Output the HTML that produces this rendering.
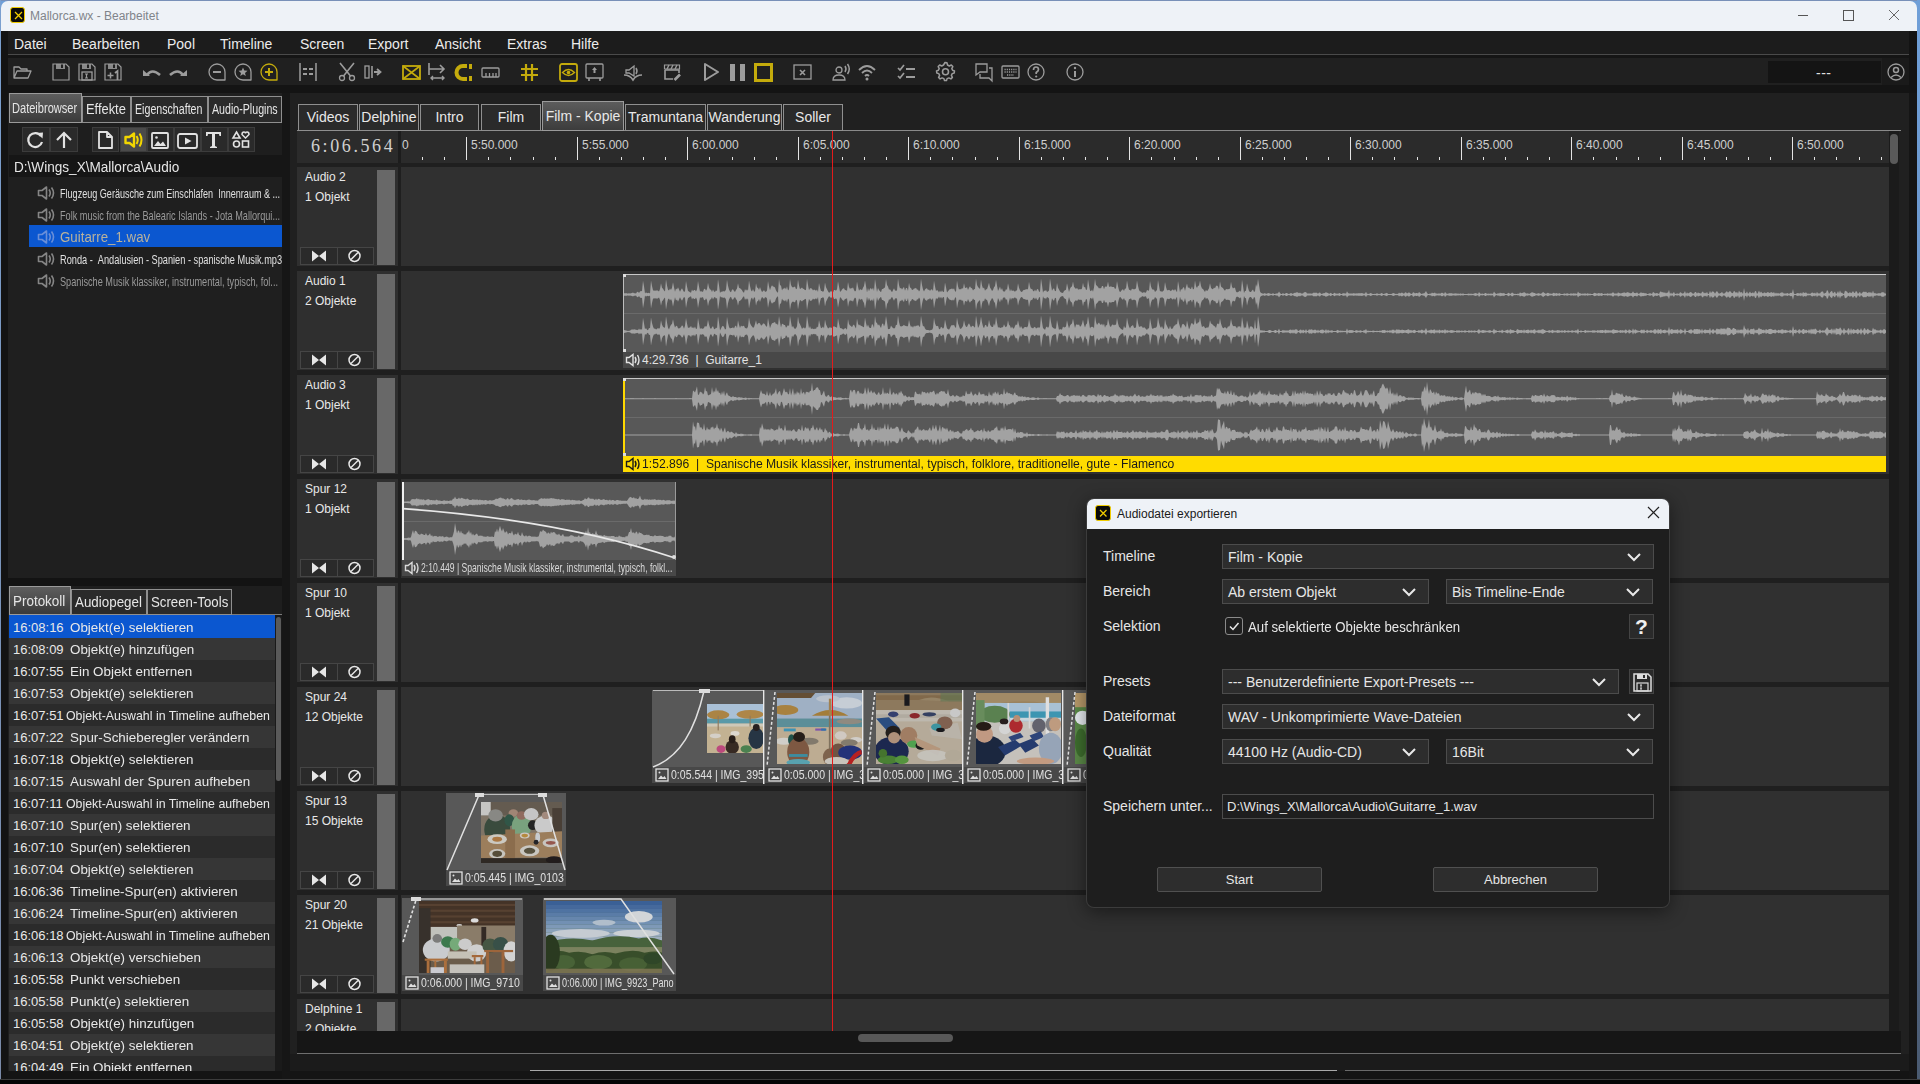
<!DOCTYPE html><html><head><meta charset="utf-8"><style>
html,body{margin:0;padding:0;}
body{width:1920px;height:1084px;overflow:hidden;background:#0c0c0c;position:relative;font-family:"Liberation Sans", sans-serif;}
div{position:absolute;box-sizing:border-box;}
.t{white-space:nowrap;line-height:1;}
svg{position:absolute;overflow:visible;}
</style></head><body>
<div style="left:0px;top:0px;width:1920px;height:1084px;background:#131313;"></div><div style="left:0px;top:0px;width:1920px;height:31px;background:#6f9fd8;"></div><div style="left:0px;top:0px;width:1920px;height:1px;background:#7890b8;"></div><div style="left:1px;top:1px;width:1916px;height:30px;background:#eef2f7;border-radius:7px 7px 0 0;"></div><div style="left:0px;top:0px;width:1px;height:1080px;background:linear-gradient(#7aa0d0,#7a8aa8);"></div><div style="left:1917px;top:0px;width:3px;height:1080px;background:linear-gradient(#6f9fd8 0%,#6a94c8 40%,#566e92 75%,#4a5a70 100%);"></div><div style="left:10px;top:7px;width:15px;height:16px;background:#0a0a0a;border:1px solid #f0cc00;border-radius:3px;"><svg width="15" height="16" style="left:0;top:0"><path d="M4 4 L11 11 M11 4 L4 11" stroke="#f0cc00" stroke-width="1.3"/></svg></div><div class="t" style="left:30px;top:10px;font-size:12px;color:#80848a;">Mallorca.wx - Bearbeitet</div><svg width="1920" height="31" style="left:0;top:0"><path d="M1798 15.5 H1808" stroke="#555" stroke-width="1"/><rect x="1843.5" y="10.5" width="10" height="10" fill="none" stroke="#555" stroke-width="1"/><path d="M1889 10 L1899 20 M1899 10 L1889 20" stroke="#666" stroke-width="1"/></svg><div style="left:8px;top:31px;width:1901px;height:23px;background:#1c1c1c;"></div><div style="left:8px;top:54px;width:1901px;height:1px;background:#4a4a4a;"></div><div class="t" style="left:14px;top:37px;font-size:14px;color:#ececec;">Datei</div><div class="t" style="left:72px;top:37px;font-size:14px;color:#ececec;">Bearbeiten</div><div class="t" style="left:167px;top:37px;font-size:14px;color:#ececec;">Pool</div><div class="t" style="left:220px;top:37px;font-size:14px;color:#ececec;">Timeline</div><div class="t" style="left:300px;top:37px;font-size:14px;color:#ececec;">Screen</div><div class="t" style="left:368px;top:37px;font-size:14px;color:#ececec;">Export</div><div class="t" style="left:435px;top:37px;font-size:14px;color:#ececec;">Ansicht</div><div class="t" style="left:507px;top:37px;font-size:14px;color:#ececec;">Extras</div><div class="t" style="left:571px;top:37px;font-size:14px;color:#ececec;">Hilfe</div><div style="left:8px;top:55px;width:1901px;height:3px;background:#151515;"></div><div style="left:8px;top:58px;width:1901px;height:27px;background:#202020;"></div><div style="left:8px;top:85px;width:1901px;height:8px;background:#141414;"></div><div style="left:1768px;top:61px;width:113px;height:22px;background:#141414;"></div><div class="t" style="left:1816px;top:66px;font-size:14px;color:#e0e0e0;letter-spacing:0.5px;">---</div><div style="left:1882px;top:58px;width:27px;height:27px;background:#1a1a1a;"></div><svg width="1920" height="100" style="left:0;top:0"><g transform="translate(13,63)"><path d="M1 15 V4 H6 L8 6 H14 V8 M1 15 L4 8 H18 L15 15 Z" stroke="#9c9c9c" stroke-width="1.3" fill="none" stroke-linejoin="round"/></g><g transform="translate(52,63)"><path d="M1 1 H14 L17 4 V17 H1 Z" stroke="#9c9c9c" stroke-width="1.2" fill="none"/><rect x="4" y="1" width="9" height="5" fill="#9c9c9c" opacity="0.85"/><rect x="9" y="1.5" width="2" height="3.5" fill="#202020"/></g><g transform="translate(78,63)"><path d="M1 1 H14 L17 4 V17 H1 Z" stroke="#9c9c9c" stroke-width="1.2" fill="none"/><rect x="4" y="1" width="9" height="5" fill="#9c9c9c" opacity="0.85"/><rect x="9" y="1.5" width="2" height="3.5" fill="#202020"/><rect x="4" y="9" width="10" height="8" stroke="#9c9c9c" stroke-width="1.3" fill="none"/><path d="M7 11 H10 M8.5 11 V15 M7 15 H10" stroke="#9c9c9c" stroke-width="1.2"/></g><g transform="translate(104,63)"><path d="M1 1 H14 L17 4 V17 H1 Z" stroke="#9c9c9c" stroke-width="1.2" fill="none"/><rect x="4" y="1" width="9" height="5" fill="#9c9c9c" opacity="0.85"/><rect x="9" y="1.5" width="2" height="3.5" fill="#202020"/><path d="M3.5 12.5 H9.5 M6.5 9.5 V15.5" stroke="#9c9c9c" stroke-width="1.5"/><path d="M11 10 L13.5 8 V17" stroke="#9c9c9c" stroke-width="1.8" fill="none"/></g><g transform="translate(143,63)"><path d="M4 12 Q9 5 17 12" stroke="#9c9c9c" stroke-width="2.6" fill="none"/><path d="M0 7 L7 13 L0 13 Z" fill="#9c9c9c"/></g><g transform="translate(169,63)"><path d="M1 12 Q9 5 14 12" stroke="#9c9c9c" stroke-width="2.6" fill="none"/><path d="M18 7 L11 13 L18 13 Z" fill="#9c9c9c"/></g><g transform="translate(208,63)"><path d="M9 17 A8 8 0 1 1 17 9 V17 Z" stroke="#9c9c9c" stroke-width="1.3" fill="none" stroke-linejoin="round"/><path d="M5 9 H13" stroke="#9c9c9c" stroke-width="2"/></g><g transform="translate(234,63)"><path d="M9 17 A8 8 0 1 1 17 9 V17 Z" stroke="#9c9c9c" stroke-width="1.3" fill="none" stroke-linejoin="round"/><path d="M9 4.5 L10.3 7.6 L13.5 7.8 L11 9.9 L11.8 13 L9 11.3 L6.2 13 L7 9.9 L4.5 7.8 L7.7 7.6 Z" fill="#9c9c9c"/></g><g transform="translate(260,63)"><path d="M9 17 A8 8 0 1 1 17 9 V17 Z" stroke="#c4ab0c" stroke-width="1.3" fill="none" stroke-linejoin="round"/><path d="M5 9 H13 M9 5 V13" stroke="#c4ab0c" stroke-width="2"/></g><g transform="translate(299,63)"><path d="M1 0 V18 M17 0 V18" stroke="#9c9c9c" stroke-width="1.5"/><path d="M4 6 H8 M10 6 H14 M4 11 H8 M10 11 H14" stroke="#9c9c9c" stroke-width="1.8"/></g><g transform="translate(338,63)"><circle cx="4" cy="15" r="2.5" stroke="#9c9c9c" stroke-width="1.3" fill="none"/><circle cx="14" cy="15" r="2.5" stroke="#9c9c9c" stroke-width="1.3" fill="none"/><path d="M5.5 13 L16 0 M12.5 13 L2 0" stroke="#9c9c9c" stroke-width="1.6"/></g><g transform="translate(364,63)"><rect x="1" y="3" width="4" height="12" stroke="#9c9c9c" stroke-width="1.3" fill="none"/><path d="M8 3 V15" stroke="#9c9c9c" stroke-width="1.6"/><path d="M10 9 H15 M13 6 L16.5 9 L13 12" stroke="#9c9c9c" stroke-width="1.8" fill="none"/></g><g transform="translate(402,63)"><rect x="1" y="3" width="17" height="13" stroke="#c4ab0c" stroke-width="1.8" fill="none"/><path d="M1 3 L18 16 M18 3 L1 16" stroke="#c4ab0c" stroke-width="1.6"/></g><g transform="translate(428,63)"><path d="M1 0 V12 M1 6 H16 M12 2 L16 6 L12 10" stroke="#9c9c9c" stroke-width="1.6" fill="none"/><path d="M3 15 H16 M5 13 L3 15 L5 17 M14 13 L16 15 L14 17" stroke="#9c9c9c" stroke-width="1.4" fill="none"/></g><g transform="translate(455,63)"><path d="M12 3 H8 A6 6 0 0 0 8 16 H12" stroke="#c4ab0c" stroke-width="4" fill="none"/><rect x="14" y="1" width="3" height="5" fill="#c4ab0c"/><rect x="14" y="13" width="3" height="5" fill="#c4ab0c"/></g><g transform="translate(481,63)"><rect x="1" y="5" width="17" height="9" rx="1" stroke="#9c9c9c" stroke-width="1.3" fill="none"/><path d="M5 10 V14 M8.5 10 V14 M12 10 V14 M15 10 V14" stroke="#9c9c9c" stroke-width="1.3"/></g><g transform="translate(520,63)"><path d="M6 1 V18 M12 1 V18 M1 6 H18 M1 12 H18" stroke="#c4ab0c" stroke-width="2.2"/></g><g transform="translate(559,63)"><rect x="1" y="1" width="17" height="17" rx="2" stroke="#c4ab0c" stroke-width="1.8" fill="none"/><path d="M3.5 9.5 Q9.5 3.5 15.5 9.5 Q9.5 15.5 3.5 9.5 Z" stroke="#c4ab0c" stroke-width="1.4" fill="none"/><circle cx="9.5" cy="9.5" r="1.8" fill="#c4ab0c"/></g><g transform="translate(585,63)"><rect x="1" y="1" width="17" height="14" rx="1" stroke="#9c9c9c" stroke-width="1.3" fill="none"/><path d="M4 15 V18 M15 15 V18" stroke="#9c9c9c" stroke-width="1.6"/><path d="M9.5 4 L12 7 H10.5 V10 H8.5 V7 H7 Z" fill="#9c9c9c"/></g><g transform="translate(624,63)"><path d="M2 7 H5 L10 3 V13 L5 10 H2 Z" stroke="#9c9c9c" stroke-width="1.3" fill="none"/><path d="M12 5 Q14 8 12 11" stroke="#9c9c9c" stroke-width="1.5" fill="none"/><path d="M0 12 Q6 12 9 17 Q12 12 18 12" stroke="#9c9c9c" stroke-width="1.6" fill="none"/></g><g transform="translate(663,63)"><path d="M2 7 V16 H10 M2 7 H16 V10" stroke="#9c9c9c" stroke-width="1.6" fill="none"/><path d="M1.5 2 H16.5 V6 H1.5 Z" stroke="#9c9c9c" stroke-width="1.2" fill="none"/><path d="M4 6 L6 2 M8 6 L10 2 M12 6 L14 2" stroke="#9c9c9c" stroke-width="1.4"/><path d="M11.5 17 L17 11.5" stroke="#9c9c9c" stroke-width="2.6"/></g><g transform="translate(703,63)"><path d="M2 1 L15 9 L2 17 Z" stroke="#9c9c9c" stroke-width="2" fill="none" stroke-linejoin="round"/></g><g transform="translate(729,63)"><rect x="1" y="1" width="5" height="17" fill="#9c9c9c"/><rect x="11" y="1" width="5" height="17" fill="#9c9c9c"/></g><g transform="translate(754,63)"><rect x="1.5" y="1.5" width="16" height="16" stroke="#c4ab0c" stroke-width="3" fill="none"/></g><g transform="translate(793,63)"><rect x="1" y="2" width="17" height="14" stroke="#9c9c9c" stroke-width="1.3" fill="none"/><path d="M7 7 L12 12 M12 7 L7 12" stroke="#9c9c9c" stroke-width="1.6"/></g><g transform="translate(832,63)"><circle cx="7" cy="7" r="3" stroke="#9c9c9c" stroke-width="1.3" fill="none"/><path d="M1 17 Q1 12 7 12 Q13 12 13 17 Z" stroke="#9c9c9c" stroke-width="1.3" fill="none"/><path d="M13 3 Q15 6 13 9 M15.5 1 Q19 6 15.5 11" stroke="#9c9c9c" stroke-width="1.5" fill="none"/></g><g transform="translate(858,63)"><path d="M1 7 Q9 -1 17 7 M4 10 Q9 5 14 10 M7 13 Q9 11 11 13" stroke="#9c9c9c" stroke-width="1.8" fill="none"/><circle cx="9" cy="16" r="1.5" fill="#9c9c9c"/></g><g transform="translate(897,63)"><path d="M1 5 L3 7 L7 2 M1 13 L3 15 L7 10" stroke="#9c9c9c" stroke-width="1.7" fill="none"/><path d="M9 6 H18 M9 14 H18" stroke="#9c9c9c" stroke-width="1.8"/></g><g transform="translate(936,62)"><path d="M9 0.5 L11 0.8 L11.5 3 L13.3 4 L15.3 3 L16.8 4.6 L15.8 6.6 L16.6 8.3 L18.5 9 L18.2 11 L16.2 11.6 L15.4 13.4 L16.4 15.4 L14.9 16.9 L12.9 15.9 L11.1 16.6 L10.5 18.6 L8.5 18.6 L7.9 16.6 L6.1 15.9 L4.1 16.9 L2.6 15.4 L3.6 13.4 L2.8 11.6 L0.8 11 L0.5 9 L2.4 8.3 L3.2 6.6 L2.2 4.6 L3.7 3 L5.7 4 L7.5 3 Z" stroke="#9c9c9c" stroke-width="1.5" fill="none" stroke-linejoin="round"/><circle cx="9.5" cy="9.7" r="3" stroke="#9c9c9c" stroke-width="1.6" fill="none"/></g><g transform="translate(975,63)"><path d="M1 1 H12 V9 H5 L1 12 Z" stroke="#9c9c9c" stroke-width="1.3" fill="none"/><path d="M14 5 H17 V18 L14 15 H5 V11" stroke="#9c9c9c" stroke-width="1.3" fill="none"/></g><g transform="translate(1001,63)"><rect x="1" y="3" width="17" height="12" rx="1" stroke="#9c9c9c" stroke-width="1.3" fill="none"/><path d="M3.5 6.5 H15.5 M3.5 9 H15.5 M6 12 H13" stroke="#9c9c9c" stroke-width="1.3" stroke-dasharray="1.2 1"/></g><g transform="translate(1027,63)"><circle cx="9" cy="9" r="8" stroke="#9c9c9c" stroke-width="1.3" fill="none"/><path d="M6.5 7 Q6.5 4 9 4 Q11.5 4 11.5 6.5 Q11.5 8 9.2 9.5 V11" stroke="#9c9c9c" stroke-width="1.7" fill="none"/><circle cx="9.2" cy="13.5" r="1.1" fill="#9c9c9c"/></g><g transform="translate(1066,63)"><circle cx="9" cy="9" r="8" stroke="#9c9c9c" stroke-width="1.3" fill="none"/><path d="M9 8 V14" stroke="#9c9c9c" stroke-width="2"/><circle cx="9" cy="5" r="1.2" fill="#9c9c9c"/></g><g transform="translate(1887,63)"><circle cx="9" cy="9" r="8" stroke="#9c9c9c" stroke-width="1.3" fill="none"/><circle cx="9" cy="7" r="2.5" stroke="#9c9c9c" stroke-width="1.5" fill="none"/><path d="M4 14.5 Q9 9.5 14 14.5" stroke="#9c9c9c" stroke-width="1.5" fill="none"/></g></svg><div style="left:8px;top:93px;width:274px;height:485px;background:#1f1f1f;"></div><div style="left:9px;top:122px;width:273px;height:1px;background:#7a7a7a;"></div><div style="left:9px;top:93px;width:73px;height:30px;background:linear-gradient(#5e5e5e,#3a3a3a);border:1px solid #9a9a9a;"></div><div class="t" style="left:12px;top:101px;font-size:14px;color:#e6e6e6;transform:scaleX(0.79);transform-origin:0 0;">Dateibrowser</div><div style="left:82px;top:96px;width:49px;height:27px;background:#2a2a2a;border:1px solid #8f8f8f;"></div><div class="t" style="left:86px;top:102px;font-size:14px;color:#e6e6e6;transform:scaleX(0.92);transform-origin:0 0;">Effekte</div><div style="left:131px;top:96px;width:77px;height:27px;background:#2a2a2a;border:1px solid #8f8f8f;"></div><div class="t" style="left:135px;top:102px;font-size:14px;color:#e6e6e6;transform:scaleX(0.76);transform-origin:0 0;">Eigenschaften</div><div style="left:208px;top:96px;width:74px;height:27px;background:#2a2a2a;border:1px solid #8f8f8f;"></div><div class="t" style="left:212px;top:102px;font-size:14px;color:#e6e6e6;transform:scaleX(0.76);transform-origin:0 0;">Audio-Plugins</div><div style="left:9px;top:123px;width:273px;height:32px;background:#1e1e1e;"></div><div style="left:22px;top:127px;width:28px;height:25px;background:#2a2a2a;border:1px solid #3c3c3c;"></div><div style="left:50px;top:127px;width:28px;height:25px;background:#2a2a2a;border:1px solid #3c3c3c;"></div><div style="left:92px;top:127px;width:27px;height:25px;background:#2a2a2a;border:1px solid #3c3c3c;"></div><div style="left:120px;top:127px;width:27px;height:25px;background:#4a4a4a;border:1px solid #3c3c3c;"></div><div style="left:147px;top:127px;width:27px;height:25px;background:#2a2a2a;border:1px solid #3c3c3c;"></div><div style="left:174px;top:127px;width:27px;height:25px;background:#2a2a2a;border:1px solid #3c3c3c;"></div><div style="left:201px;top:127px;width:27px;height:25px;background:#2a2a2a;border:1px solid #3c3c3c;"></div><div style="left:228px;top:127px;width:27px;height:25px;background:#2a2a2a;border:1px solid #3c3c3c;"></div><svg width="300" height="160" style="left:0;top:0"><g transform="translate(27,131)"><path d="M14 5 A7 7 0 1 0 15 11" stroke="#e2e2e2" stroke-width="2.2" fill="none"/><path d="M10 2 L16 1.5 L15.5 7.5 Z" fill="#e2e2e2"/></g><g transform="translate(55,131)"><path d="M9 17 V2 M2 9 L9 2 L16 9" stroke="#e2e2e2" stroke-width="2.2" fill="none"/></g><g transform="translate(98,131)"><path d="M1 1 H9 L14 6 V17 H1 Z M9 1 V6 H14" stroke="#e2e2e2" stroke-width="1.8" fill="none" stroke-linejoin="round"/></g><g transform="translate(124,131)"><path d="M1.5 6 H5.5 L10 2.5 V15.5 L5.5 12 H1.5 Z" stroke="#f2d600" stroke-width="2.4" fill="none" stroke-linejoin="round"/><path d="M12.5 5 Q15 9 12.5 13 M15.5 2.5 Q19.5 9 15.5 15.5" stroke="#f2d600" stroke-width="2" fill="none"/></g><g transform="translate(151,132)"><rect x="1" y="1" width="16" height="15" rx="1" stroke="#e2e2e2" stroke-width="1.8" fill="none"/><circle cx="5.5" cy="5.5" r="1.3" fill="#e2e2e2"/><path d="M3 14 L7 9 L9.5 12 L12 9.5 L15 14 Z" fill="#e2e2e2"/></g><g transform="translate(177,133)"><rect x="1" y="1" width="19" height="14" rx="2" stroke="#e2e2e2" stroke-width="1.8" fill="none"/><path d="M8 4.5 L14.5 8 L8 11.5 Z" fill="#e2e2e2"/></g><g transform="translate(205,131)"><path d="M1 1 H16 V5 H14.5 L14 3 H10 V15 L12 16 V17 H5 V16 L7 15 V3 H3 L2.5 5 H1 Z" fill="#e2e2e2"/></g><g transform="translate(232,131)"><path d="M4.5 1 L8 7 H1 Z" stroke="#e2e2e2" stroke-width="1.6" fill="none"/><path d="M13.5 7 L10 3.5 Q10 1 12 1 Q13.5 1 13.5 2.5 Q13.5 1 15 1 Q17 1 17 3.5 Z" stroke="#e2e2e2" stroke-width="1.5" fill="none"/><circle cx="4.5" cy="13" r="3" stroke="#e2e2e2" stroke-width="1.6" fill="none"/><rect x="10.5" y="10" width="6" height="6" stroke="#e2e2e2" stroke-width="1.6" fill="none"/></g></svg><div style="left:9px;top:155px;width:273px;height:22px;background:#161616;"></div><div class="t" style="left:14px;top:160px;font-size:14px;color:#e6e6e6;transform:scaleX(0.97);transform-origin:0 0;">D:\Wings_X\Mallorca\Audio</div><div style="left:9px;top:177px;width:273px;height:401px;background:#1f1f1f;"></div><svg width="18" height="16" style="left:37px;top:185px"><path d="M1.5 5.5 H5 L9.5 2 V14 L5 10.5 H1.5 Z" stroke="#858585" stroke-width="1.6" fill="none" stroke-linejoin="round"/><path d="M12 4.5 Q14.5 8 12 11.5 M14.5 2.5 Q18.5 8 14.5 13.5" stroke="#858585" stroke-width="1.6" fill="none"/></svg><div class="t" style="left:60px;top:187px;font-size:13px;color:#e0e0e0;transform:scaleX(0.697);transform-origin:0 0;">Flugzeug Geräusche zum Einschlafen &nbsp;Innenraum &amp; ...</div><svg width="18" height="16" style="left:37px;top:207px"><path d="M1.5 5.5 H5 L9.5 2 V14 L5 10.5 H1.5 Z" stroke="#858585" stroke-width="1.6" fill="none" stroke-linejoin="round"/><path d="M12 4.5 Q14.5 8 12 11.5 M14.5 2.5 Q18.5 8 14.5 13.5" stroke="#858585" stroke-width="1.6" fill="none"/></svg><div class="t" style="left:60px;top:209px;font-size:13px;color:#9a9a9a;transform:scaleX(0.705);transform-origin:0 0;">Folk music from the Balearic Islands - Jota Mallorqui...</div><div style="left:29px;top:225px;width:253px;height:22px;background:#0b57d0;"></div><svg width="18" height="16" style="left:37px;top:229px"><path d="M1.5 5.5 H5 L9.5 2 V14 L5 10.5 H1.5 Z" stroke="#6a8fd8" stroke-width="1.6" fill="none" stroke-linejoin="round"/><path d="M12 4.5 Q14.5 8 12 11.5 M14.5 2.5 Q18.5 8 14.5 13.5" stroke="#6a8fd8" stroke-width="1.6" fill="none"/></svg><div class="t" style="left:60px;top:230px;font-size:14px;color:#b9b29c;transform:scaleX(0.95);transform-origin:0 0;">Guitarre_1.wav</div><svg width="18" height="16" style="left:37px;top:251px"><path d="M1.5 5.5 H5 L9.5 2 V14 L5 10.5 H1.5 Z" stroke="#858585" stroke-width="1.6" fill="none" stroke-linejoin="round"/><path d="M12 4.5 Q14.5 8 12 11.5 M14.5 2.5 Q18.5 8 14.5 13.5" stroke="#858585" stroke-width="1.6" fill="none"/></svg><div class="t" style="left:60px;top:253px;font-size:13px;color:#e0e0e0;transform:scaleX(0.708);transform-origin:0 0;">Ronda - &nbsp;Andalusien - Spanien - spanische Musik.mp3</div><svg width="18" height="16" style="left:37px;top:273px"><path d="M1.5 5.5 H5 L9.5 2 V14 L5 10.5 H1.5 Z" stroke="#858585" stroke-width="1.6" fill="none" stroke-linejoin="round"/><path d="M12 4.5 Q14.5 8 12 11.5 M14.5 2.5 Q18.5 8 14.5 13.5" stroke="#858585" stroke-width="1.6" fill="none"/></svg><div class="t" style="left:60px;top:275px;font-size:13px;color:#9a9a9a;transform:scaleX(0.705);transform-origin:0 0;">Spanische Musik klassiker, instrumental, typisch, fol...</div><div style="left:8px;top:586px;width:274px;height:489px;background:#1e1e1e;"></div><div style="left:9px;top:614px;width:273px;height:1px;background:#7a7a7a;"></div><div style="left:9px;top:586px;width:62px;height:29px;background:linear-gradient(#5e5e5e,#3a3a3a);border:1px solid #9a9a9a;"></div><div class="t" style="left:13px;top:594px;font-size:14px;color:#e6e6e6;transform:scaleX(0.96);transform-origin:0 0;">Protokoll</div><div style="left:71px;top:589px;width:76px;height:26px;background:#2a2a2a;border:1px solid #8f8f8f;"></div><div class="t" style="left:75px;top:595px;font-size:14px;color:#e6e6e6;transform:scaleX(0.955);transform-origin:0 0;">Audiopegel</div><div style="left:147px;top:589px;width:85px;height:26px;background:#2a2a2a;border:1px solid #8f8f8f;"></div><div class="t" style="left:151px;top:595px;font-size:14px;color:#e6e6e6;transform:scaleX(0.946);transform-origin:0 0;">Screen-Tools</div><div style="left:9px;top:615px;width:266px;height:456px;overflow:hidden;background:#272727;"><div style="left:0px;top:0px;width:266px;height:23px;background:#0b57d0;"><div class="t" style="left:4px;top:6px;font-size:13px;color:#e8e8e8;">16:08:16</div><div class="t" style="left:61px;top:6px;font-size:13px;color:#e8e8e8;transform:scaleX(1.03);transform-origin:0 0;">Objekt(e) selektieren</div></div><div style="left:0px;top:23px;width:266px;height:22px;background:#363636;"><div class="t" style="left:4px;top:5px;font-size:13px;color:#e8e8e8;">16:08:09</div><div class="t" style="left:61px;top:5px;font-size:13px;color:#e8e8e8;transform:scaleX(1.03);transform-origin:0 0;">Objekt(e) hinzufügen</div></div><div style="left:0px;top:45px;width:266px;height:22px;background:#2b2b2b;"><div class="t" style="left:4px;top:5px;font-size:13px;color:#e8e8e8;">16:07:55</div><div class="t" style="left:61px;top:5px;font-size:13px;color:#e8e8e8;transform:scaleX(1.03);transform-origin:0 0;">Ein Objekt entfernen</div></div><div style="left:0px;top:67px;width:266px;height:22px;background:#363636;"><div class="t" style="left:4px;top:5px;font-size:13px;color:#e8e8e8;">16:07:53</div><div class="t" style="left:61px;top:5px;font-size:13px;color:#e8e8e8;transform:scaleX(1.03);transform-origin:0 0;">Objekt(e) selektieren</div></div><div style="left:0px;top:89px;width:266px;height:22px;background:#2b2b2b;"><div class="t" style="left:4px;top:5px;font-size:13px;color:#e8e8e8;">16:07:51</div><div class="t" style="left:57px;top:5px;font-size:13px;color:#e8e8e8;transform:scaleX(0.95);transform-origin:0 0;">Objekt-Auswahl in Timeline aufheben</div></div><div style="left:0px;top:111px;width:266px;height:22px;background:#363636;"><div class="t" style="left:4px;top:5px;font-size:13px;color:#e8e8e8;">16:07:22</div><div class="t" style="left:61px;top:5px;font-size:13px;color:#e8e8e8;transform:scaleX(1.03);transform-origin:0 0;">Spur-Schieberegler verändern</div></div><div style="left:0px;top:133px;width:266px;height:22px;background:#2b2b2b;"><div class="t" style="left:4px;top:5px;font-size:13px;color:#e8e8e8;">16:07:18</div><div class="t" style="left:61px;top:5px;font-size:13px;color:#e8e8e8;transform:scaleX(1.03);transform-origin:0 0;">Objekt(e) selektieren</div></div><div style="left:0px;top:155px;width:266px;height:22px;background:#363636;"><div class="t" style="left:4px;top:5px;font-size:13px;color:#e8e8e8;">16:07:15</div><div class="t" style="left:61px;top:5px;font-size:13px;color:#e8e8e8;transform:scaleX(1.03);transform-origin:0 0;">Auswahl der Spuren aufheben</div></div><div style="left:0px;top:177px;width:266px;height:22px;background:#2b2b2b;"><div class="t" style="left:4px;top:5px;font-size:13px;color:#e8e8e8;">16:07:11</div><div class="t" style="left:57px;top:5px;font-size:13px;color:#e8e8e8;transform:scaleX(0.95);transform-origin:0 0;">Objekt-Auswahl in Timeline aufheben</div></div><div style="left:0px;top:199px;width:266px;height:22px;background:#363636;"><div class="t" style="left:4px;top:5px;font-size:13px;color:#e8e8e8;">16:07:10</div><div class="t" style="left:61px;top:5px;font-size:13px;color:#e8e8e8;transform:scaleX(1.03);transform-origin:0 0;">Spur(en) selektieren</div></div><div style="left:0px;top:221px;width:266px;height:22px;background:#2b2b2b;"><div class="t" style="left:4px;top:5px;font-size:13px;color:#e8e8e8;">16:07:10</div><div class="t" style="left:61px;top:5px;font-size:13px;color:#e8e8e8;transform:scaleX(1.03);transform-origin:0 0;">Spur(en) selektieren</div></div><div style="left:0px;top:243px;width:266px;height:22px;background:#363636;"><div class="t" style="left:4px;top:5px;font-size:13px;color:#e8e8e8;">16:07:04</div><div class="t" style="left:61px;top:5px;font-size:13px;color:#e8e8e8;transform:scaleX(1.03);transform-origin:0 0;">Objekt(e) selektieren</div></div><div style="left:0px;top:265px;width:266px;height:22px;background:#2b2b2b;"><div class="t" style="left:4px;top:5px;font-size:13px;color:#e8e8e8;">16:06:36</div><div class="t" style="left:61px;top:5px;font-size:13px;color:#e8e8e8;transform:scaleX(1.03);transform-origin:0 0;">Timeline-Spur(en) aktivieren</div></div><div style="left:0px;top:287px;width:266px;height:22px;background:#363636;"><div class="t" style="left:4px;top:5px;font-size:13px;color:#e8e8e8;">16:06:24</div><div class="t" style="left:61px;top:5px;font-size:13px;color:#e8e8e8;transform:scaleX(1.03);transform-origin:0 0;">Timeline-Spur(en) aktivieren</div></div><div style="left:0px;top:309px;width:266px;height:22px;background:#2b2b2b;"><div class="t" style="left:4px;top:5px;font-size:13px;color:#e8e8e8;">16:06:18</div><div class="t" style="left:57px;top:5px;font-size:13px;color:#e8e8e8;transform:scaleX(0.95);transform-origin:0 0;">Objekt-Auswahl in Timeline aufheben</div></div><div style="left:0px;top:331px;width:266px;height:22px;background:#363636;"><div class="t" style="left:4px;top:5px;font-size:13px;color:#e8e8e8;">16:06:13</div><div class="t" style="left:61px;top:5px;font-size:13px;color:#e8e8e8;transform:scaleX(1.03);transform-origin:0 0;">Objekt(e) verschieben</div></div><div style="left:0px;top:353px;width:266px;height:22px;background:#2b2b2b;"><div class="t" style="left:4px;top:5px;font-size:13px;color:#e8e8e8;">16:05:58</div><div class="t" style="left:61px;top:5px;font-size:13px;color:#e8e8e8;transform:scaleX(1.03);transform-origin:0 0;">Punkt verschieben</div></div><div style="left:0px;top:375px;width:266px;height:22px;background:#363636;"><div class="t" style="left:4px;top:5px;font-size:13px;color:#e8e8e8;">16:05:58</div><div class="t" style="left:61px;top:5px;font-size:13px;color:#e8e8e8;transform:scaleX(1.03);transform-origin:0 0;">Punkt(e) selektieren</div></div><div style="left:0px;top:397px;width:266px;height:22px;background:#2b2b2b;"><div class="t" style="left:4px;top:5px;font-size:13px;color:#e8e8e8;">16:05:58</div><div class="t" style="left:61px;top:5px;font-size:13px;color:#e8e8e8;transform:scaleX(1.03);transform-origin:0 0;">Objekt(e) hinzufügen</div></div><div style="left:0px;top:419px;width:266px;height:22px;background:#363636;"><div class="t" style="left:4px;top:5px;font-size:13px;color:#e8e8e8;">16:04:51</div><div class="t" style="left:61px;top:5px;font-size:13px;color:#e8e8e8;transform:scaleX(1.03);transform-origin:0 0;">Objekt(e) selektieren</div></div><div style="left:0px;top:441px;width:266px;height:22px;background:#2b2b2b;"><div class="t" style="left:4px;top:5px;font-size:13px;color:#e8e8e8;">16:04:49</div><div class="t" style="left:61px;top:5px;font-size:13px;color:#e8e8e8;transform:scaleX(1.03);transform-origin:0 0;">Ein Objekt entfernen</div></div></div><div style="left:275px;top:615px;width:7px;height:456px;background:#1a1a1a;"></div><div style="left:276px;top:617px;width:5px;height:164px;background:#5a5a5a;border-radius:3px;"></div><div style="left:8px;top:1071px;width:274px;height:8px;background:#141414;"></div><div style="left:0px;top:1079px;width:1920px;height:1px;background:#3c3c3c;"></div><div style="left:0px;top:1080px;width:1920px;height:4px;background:#050505;"></div><div style="left:290px;top:93px;width:1619px;height:982px;background:#202020;"></div><div style="left:297px;top:130px;width:1604px;height:1px;background:#8a8a8a;"></div><div style="left:298px;top:104px;width:60px;height:27px;background:#2a2a2a;border:1px solid #8f8f8f;"></div><div class="t" style="left:298px;top:110px;font-size:14px;color:#e8e8e8;"><div style="position:relative;width:60px;text-align:center">Videos</div></div><div style="left:359px;top:104px;width:60px;height:27px;background:#2a2a2a;border:1px solid #8f8f8f;"></div><div class="t" style="left:359px;top:110px;font-size:14px;color:#e8e8e8;"><div style="position:relative;width:60px;text-align:center">Delphine</div></div><div style="left:420px;top:104px;width:59px;height:27px;background:#2a2a2a;border:1px solid #8f8f8f;"></div><div class="t" style="left:420px;top:110px;font-size:14px;color:#e8e8e8;"><div style="position:relative;width:59px;text-align:center">Intro</div></div><div style="left:481px;top:104px;width:60px;height:27px;background:#2a2a2a;border:1px solid #8f8f8f;"></div><div class="t" style="left:481px;top:110px;font-size:14px;color:#e8e8e8;"><div style="position:relative;width:60px;text-align:center">Film</div></div><div style="left:542px;top:101px;width:82px;height:30px;background:linear-gradient(#5c5c5c,#3c3c3c);border:1px solid #9a9a9a;"></div><div class="t" style="left:542px;top:109px;font-size:14px;color:#e8e8e8;"><div style="position:relative;width:82px;text-align:center">Film - Kopie</div></div><div style="left:625px;top:104px;width:81px;height:27px;background:#2a2a2a;border:1px solid #8f8f8f;"></div><div class="t" style="left:625px;top:110px;font-size:14px;color:#e8e8e8;"><div style="position:relative;width:81px;text-align:center">Tramuntana</div></div><div style="left:707px;top:104px;width:75px;height:27px;background:#2a2a2a;border:1px solid #8f8f8f;"></div><div class="t" style="left:707px;top:110px;font-size:14px;color:#e8e8e8;"><div style="position:relative;width:75px;text-align:center">Wanderung</div></div><div style="left:783px;top:104px;width:60px;height:27px;background:#2a2a2a;border:1px solid #8f8f8f;"></div><div class="t" style="left:783px;top:110px;font-size:14px;color:#e8e8e8;"><div style="position:relative;width:60px;text-align:center">Soller</div></div><div style="left:297px;top:131px;width:101px;height:32px;background:#2b2b2b;"></div><div style="left:398px;top:131px;width:3px;height:900px;background:#1c1c1c;"></div><div style="left:401px;top:131px;width:1488px;height:32px;background:#2b2b2b;"></div><div class="t" style="left:311px;top:137px;font-size:18px;color:#d0d0d0;font-family:'Liberation Serif',serif;letter-spacing:2.6px;">6:06.564</div><div class="t" style="left:402px;top:139px;font-size:12px;color:#cfcfcf;">0</div><div class="t" style="left:471px;top:139px;font-size:12px;color:#cfcfcf;">5:50.000</div><div class="t" style="left:582px;top:139px;font-size:12px;color:#cfcfcf;">5:55.000</div><div class="t" style="left:692px;top:139px;font-size:12px;color:#cfcfcf;">6:00.000</div><div class="t" style="left:803px;top:139px;font-size:12px;color:#cfcfcf;">6:05.000</div><div class="t" style="left:913px;top:139px;font-size:12px;color:#cfcfcf;">6:10.000</div><div class="t" style="left:1024px;top:139px;font-size:12px;color:#cfcfcf;">6:15.000</div><div class="t" style="left:1134px;top:139px;font-size:12px;color:#cfcfcf;">6:20.000</div><div class="t" style="left:1245px;top:139px;font-size:12px;color:#cfcfcf;">6:25.000</div><div class="t" style="left:1355px;top:139px;font-size:12px;color:#cfcfcf;">6:30.000</div><div class="t" style="left:1466px;top:139px;font-size:12px;color:#cfcfcf;">6:35.000</div><div class="t" style="left:1576px;top:139px;font-size:12px;color:#cfcfcf;">6:40.000</div><div class="t" style="left:1687px;top:139px;font-size:12px;color:#cfcfcf;">6:45.000</div><div class="t" style="left:1797px;top:139px;font-size:12px;color:#cfcfcf;">6:50.000</div><svg width="1920" height="200" style="left:0;top:0"><rect x="466" y="137" width="1" height="23" fill="#e4e4e4"/><rect x="577" y="137" width="1" height="23" fill="#e4e4e4"/><rect x="687" y="137" width="1" height="23" fill="#e4e4e4"/><rect x="798" y="137" width="1" height="23" fill="#e4e4e4"/><rect x="908" y="137" width="1" height="23" fill="#e4e4e4"/><rect x="1019" y="137" width="1" height="23" fill="#e4e4e4"/><rect x="1129" y="137" width="1" height="23" fill="#e4e4e4"/><rect x="1240" y="137" width="1" height="23" fill="#e4e4e4"/><rect x="1350" y="137" width="1" height="23" fill="#e4e4e4"/><rect x="1461" y="137" width="1" height="23" fill="#e4e4e4"/><rect x="1571" y="137" width="1" height="23" fill="#e4e4e4"/><rect x="1682" y="137" width="1" height="23" fill="#e4e4e4"/><rect x="1792" y="137" width="1" height="23" fill="#e4e4e4"/><rect x="422" y="157" width="1" height="3" fill="#e4e4e4"/><rect x="444" y="157" width="1" height="3" fill="#e4e4e4"/><rect x="488" y="157" width="1" height="3" fill="#e4e4e4"/><rect x="510" y="157" width="1" height="3" fill="#e4e4e4"/><rect x="533" y="157" width="1" height="3" fill="#e4e4e4"/><rect x="555" y="157" width="1" height="3" fill="#e4e4e4"/><rect x="599" y="157" width="1" height="3" fill="#e4e4e4"/><rect x="621" y="157" width="1" height="3" fill="#e4e4e4"/><rect x="643" y="157" width="1" height="3" fill="#e4e4e4"/><rect x="665" y="157" width="1" height="3" fill="#e4e4e4"/><rect x="709" y="157" width="1" height="3" fill="#e4e4e4"/><rect x="732" y="157" width="1" height="3" fill="#e4e4e4"/><rect x="754" y="157" width="1" height="3" fill="#e4e4e4"/><rect x="776" y="157" width="1" height="3" fill="#e4e4e4"/><rect x="820" y="157" width="1" height="3" fill="#e4e4e4"/><rect x="842" y="157" width="1" height="3" fill="#e4e4e4"/><rect x="864" y="157" width="1" height="3" fill="#e4e4e4"/><rect x="886" y="157" width="1" height="3" fill="#e4e4e4"/><rect x="930" y="157" width="1" height="3" fill="#e4e4e4"/><rect x="952" y="157" width="1" height="3" fill="#e4e4e4"/><rect x="975" y="157" width="1" height="3" fill="#e4e4e4"/><rect x="997" y="157" width="1" height="3" fill="#e4e4e4"/><rect x="1041" y="157" width="1" height="3" fill="#e4e4e4"/><rect x="1063" y="157" width="1" height="3" fill="#e4e4e4"/><rect x="1085" y="157" width="1" height="3" fill="#e4e4e4"/><rect x="1107" y="157" width="1" height="3" fill="#e4e4e4"/><rect x="1151" y="157" width="1" height="3" fill="#e4e4e4"/><rect x="1174" y="157" width="1" height="3" fill="#e4e4e4"/><rect x="1196" y="157" width="1" height="3" fill="#e4e4e4"/><rect x="1218" y="157" width="1" height="3" fill="#e4e4e4"/><rect x="1262" y="157" width="1" height="3" fill="#e4e4e4"/><rect x="1284" y="157" width="1" height="3" fill="#e4e4e4"/><rect x="1306" y="157" width="1" height="3" fill="#e4e4e4"/><rect x="1328" y="157" width="1" height="3" fill="#e4e4e4"/><rect x="1372" y="157" width="1" height="3" fill="#e4e4e4"/><rect x="1394" y="157" width="1" height="3" fill="#e4e4e4"/><rect x="1417" y="157" width="1" height="3" fill="#e4e4e4"/><rect x="1439" y="157" width="1" height="3" fill="#e4e4e4"/><rect x="1483" y="157" width="1" height="3" fill="#e4e4e4"/><rect x="1505" y="157" width="1" height="3" fill="#e4e4e4"/><rect x="1527" y="157" width="1" height="3" fill="#e4e4e4"/><rect x="1549" y="157" width="1" height="3" fill="#e4e4e4"/><rect x="1593" y="157" width="1" height="3" fill="#e4e4e4"/><rect x="1616" y="157" width="1" height="3" fill="#e4e4e4"/><rect x="1638" y="157" width="1" height="3" fill="#e4e4e4"/><rect x="1660" y="157" width="1" height="3" fill="#e4e4e4"/><rect x="1704" y="157" width="1" height="3" fill="#e4e4e4"/><rect x="1726" y="157" width="1" height="3" fill="#e4e4e4"/><rect x="1748" y="157" width="1" height="3" fill="#e4e4e4"/><rect x="1770" y="157" width="1" height="3" fill="#e4e4e4"/><rect x="1814" y="157" width="1" height="3" fill="#e4e4e4"/><rect x="1836" y="157" width="1" height="3" fill="#e4e4e4"/><rect x="1859" y="157" width="1" height="3" fill="#e4e4e4"/><rect x="1881" y="157" width="1" height="3" fill="#e4e4e4"/></svg><div style="left:297px;top:163px;width:1592px;height:868px;background:#1f1f1f;"></div><div style="left:401px;top:167px;width:1488px;height:99px;background:#303030;"></div><div style="left:297px;top:167px;width:101px;height:99px;background:#2f2f2f;"></div><div class="t" style="left:305px;top:171px;font-size:12px;color:#e8e8e8;">Audio 2</div><div class="t" style="left:305px;top:191px;font-size:12px;color:#e8e8e8;">1 Objekt</div><div style="left:377px;top:170px;width:18px;height:95px;background:#686868;"></div><div style="left:300px;top:247px;width:74px;height:18px;background:#2a2a2a;border:1px solid #454545;"></div><div style="left:337px;top:248px;width:1px;height:16px;background:#454545;"></div><svg width="80" height="20" style="left:300px;top:247px"><path d="M12 3.5 L19 9 L12 14.5 Z M26 3.5 L19 9 L26 14.5 Z" fill="#e6e6e6"/><circle cx="54.5" cy="9" r="5.5" stroke="#e6e6e6" stroke-width="1.5" fill="none"/><path d="M51 12.5 L58 5.5" stroke="#e6e6e6" stroke-width="1.5"/></svg><div style="left:401px;top:271px;width:1488px;height:99px;background:#303030;"></div><div style="left:297px;top:271px;width:101px;height:99px;background:#2f2f2f;"></div><div class="t" style="left:305px;top:275px;font-size:12px;color:#e8e8e8;">Audio 1</div><div class="t" style="left:305px;top:295px;font-size:12px;color:#e8e8e8;">2 Objekte</div><div style="left:377px;top:274px;width:18px;height:95px;background:#686868;"></div><div style="left:300px;top:351px;width:74px;height:18px;background:#2a2a2a;border:1px solid #454545;"></div><div style="left:337px;top:352px;width:1px;height:16px;background:#454545;"></div><svg width="80" height="20" style="left:300px;top:351px"><path d="M12 3.5 L19 9 L12 14.5 Z M26 3.5 L19 9 L26 14.5 Z" fill="#e6e6e6"/><circle cx="54.5" cy="9" r="5.5" stroke="#e6e6e6" stroke-width="1.5" fill="none"/><path d="M51 12.5 L58 5.5" stroke="#e6e6e6" stroke-width="1.5"/></svg><div style="left:401px;top:375px;width:1488px;height:99px;background:#303030;"></div><div style="left:297px;top:375px;width:101px;height:99px;background:#2f2f2f;"></div><div class="t" style="left:305px;top:379px;font-size:12px;color:#e8e8e8;">Audio 3</div><div class="t" style="left:305px;top:399px;font-size:12px;color:#e8e8e8;">1 Objekt</div><div style="left:377px;top:378px;width:18px;height:95px;background:#686868;"></div><div style="left:300px;top:455px;width:74px;height:18px;background:#2a2a2a;border:1px solid #454545;"></div><div style="left:337px;top:456px;width:1px;height:16px;background:#454545;"></div><svg width="80" height="20" style="left:300px;top:455px"><path d="M12 3.5 L19 9 L12 14.5 Z M26 3.5 L19 9 L26 14.5 Z" fill="#e6e6e6"/><circle cx="54.5" cy="9" r="5.5" stroke="#e6e6e6" stroke-width="1.5" fill="none"/><path d="M51 12.5 L58 5.5" stroke="#e6e6e6" stroke-width="1.5"/></svg><div style="left:401px;top:479px;width:1488px;height:99px;background:#303030;"></div><div style="left:297px;top:479px;width:101px;height:99px;background:#2f2f2f;"></div><div class="t" style="left:305px;top:483px;font-size:12px;color:#e8e8e8;">Spur 12</div><div class="t" style="left:305px;top:503px;font-size:12px;color:#e8e8e8;">1 Objekt</div><div style="left:377px;top:482px;width:18px;height:95px;background:#686868;"></div><div style="left:300px;top:559px;width:74px;height:18px;background:#2a2a2a;border:1px solid #454545;"></div><div style="left:337px;top:560px;width:1px;height:16px;background:#454545;"></div><svg width="80" height="20" style="left:300px;top:559px"><path d="M12 3.5 L19 9 L12 14.5 Z M26 3.5 L19 9 L26 14.5 Z" fill="#e6e6e6"/><circle cx="54.5" cy="9" r="5.5" stroke="#e6e6e6" stroke-width="1.5" fill="none"/><path d="M51 12.5 L58 5.5" stroke="#e6e6e6" stroke-width="1.5"/></svg><div style="left:401px;top:583px;width:1488px;height:99px;background:#303030;"></div><div style="left:297px;top:583px;width:101px;height:99px;background:#2f2f2f;"></div><div class="t" style="left:305px;top:587px;font-size:12px;color:#e8e8e8;">Spur 10</div><div class="t" style="left:305px;top:607px;font-size:12px;color:#e8e8e8;">1 Objekt</div><div style="left:377px;top:586px;width:18px;height:95px;background:#686868;"></div><div style="left:300px;top:663px;width:74px;height:18px;background:#2a2a2a;border:1px solid #454545;"></div><div style="left:337px;top:664px;width:1px;height:16px;background:#454545;"></div><svg width="80" height="20" style="left:300px;top:663px"><path d="M12 3.5 L19 9 L12 14.5 Z M26 3.5 L19 9 L26 14.5 Z" fill="#e6e6e6"/><circle cx="54.5" cy="9" r="5.5" stroke="#e6e6e6" stroke-width="1.5" fill="none"/><path d="M51 12.5 L58 5.5" stroke="#e6e6e6" stroke-width="1.5"/></svg><div style="left:401px;top:687px;width:1488px;height:99px;background:#303030;"></div><div style="left:297px;top:687px;width:101px;height:99px;background:#2f2f2f;"></div><div class="t" style="left:305px;top:691px;font-size:12px;color:#e8e8e8;">Spur 24</div><div class="t" style="left:305px;top:711px;font-size:12px;color:#e8e8e8;">12 Objekte</div><div style="left:377px;top:690px;width:18px;height:95px;background:#686868;"></div><div style="left:300px;top:767px;width:74px;height:18px;background:#2a2a2a;border:1px solid #454545;"></div><div style="left:337px;top:768px;width:1px;height:16px;background:#454545;"></div><svg width="80" height="20" style="left:300px;top:767px"><path d="M12 3.5 L19 9 L12 14.5 Z M26 3.5 L19 9 L26 14.5 Z" fill="#e6e6e6"/><circle cx="54.5" cy="9" r="5.5" stroke="#e6e6e6" stroke-width="1.5" fill="none"/><path d="M51 12.5 L58 5.5" stroke="#e6e6e6" stroke-width="1.5"/></svg><div style="left:401px;top:791px;width:1488px;height:99px;background:#303030;"></div><div style="left:297px;top:791px;width:101px;height:99px;background:#2f2f2f;"></div><div class="t" style="left:305px;top:795px;font-size:12px;color:#e8e8e8;">Spur 13</div><div class="t" style="left:305px;top:815px;font-size:12px;color:#e8e8e8;">15 Objekte</div><div style="left:377px;top:794px;width:18px;height:95px;background:#686868;"></div><div style="left:300px;top:871px;width:74px;height:18px;background:#2a2a2a;border:1px solid #454545;"></div><div style="left:337px;top:872px;width:1px;height:16px;background:#454545;"></div><svg width="80" height="20" style="left:300px;top:871px"><path d="M12 3.5 L19 9 L12 14.5 Z M26 3.5 L19 9 L26 14.5 Z" fill="#e6e6e6"/><circle cx="54.5" cy="9" r="5.5" stroke="#e6e6e6" stroke-width="1.5" fill="none"/><path d="M51 12.5 L58 5.5" stroke="#e6e6e6" stroke-width="1.5"/></svg><div style="left:401px;top:895px;width:1488px;height:99px;background:#303030;"></div><div style="left:297px;top:895px;width:101px;height:99px;background:#2f2f2f;"></div><div class="t" style="left:305px;top:899px;font-size:12px;color:#e8e8e8;">Spur 20</div><div class="t" style="left:305px;top:919px;font-size:12px;color:#e8e8e8;">21 Objekte</div><div style="left:377px;top:898px;width:18px;height:95px;background:#686868;"></div><div style="left:300px;top:975px;width:74px;height:18px;background:#2a2a2a;border:1px solid #454545;"></div><div style="left:337px;top:976px;width:1px;height:16px;background:#454545;"></div><svg width="80" height="20" style="left:300px;top:975px"><path d="M12 3.5 L19 9 L12 14.5 Z M26 3.5 L19 9 L26 14.5 Z" fill="#e6e6e6"/><circle cx="54.5" cy="9" r="5.5" stroke="#e6e6e6" stroke-width="1.5" fill="none"/><path d="M51 12.5 L58 5.5" stroke="#e6e6e6" stroke-width="1.5"/></svg><div style="left:401px;top:999px;width:1488px;height:32px;background:#303030;"></div><div style="left:297px;top:999px;width:101px;height:32px;background:#2f2f2f;"></div><div class="t" style="left:305px;top:1003px;font-size:12px;color:#e8e8e8;">Delphine 1</div><div class="t" style="left:305px;top:1023px;font-size:12px;color:#e8e8e8;">2 Objekte</div><div style="left:377px;top:1002px;width:18px;height:29px;background:#686868;"></div><div style="left:1889px;top:131px;width:10px;height:900px;background:#1b1b1b;"></div><div style="left:1890px;top:134px;width:8px;height:30px;background:#5a5a5a;border-radius:4px;"></div><div style="left:297px;top:1031px;width:1604px;height:22px;background:#161616;"></div><div style="left:858px;top:1034px;width:95px;height:8px;background:#585858;border-radius:4px;"></div><div style="left:297px;top:1053px;width:1604px;height:1px;background:#6e6e6e;"></div><div style="left:290px;top:1054px;width:1619px;height:17px;background:#1b1b1b;"></div><div style="left:530px;top:1070px;width:807px;height:1px;background:#a8a8a8;"></div><div style="left:1345px;top:1070px;width:555px;height:1px;background:#6a6a6a;"></div><div style="left:290px;top:1071px;width:1619px;height:8px;background:#141414;"></div><div style="left:1909px;top:93px;width:8px;height:986px;background:#151515;"></div><div style="left:282px;top:93px;width:8px;height:986px;background:#161616;"></div><div style="left:623px;top:274px;width:1263px;height:78px;background:#585858;"></div><div style="left:623px;top:274px;width:1263px;height:1px;background:#c8c8c8;"></div><div style="left:623px;top:274px;width:1px;height:78px;background:#bdbdbd;"></div><div style="left:624px;top:313px;width:1262px;height:1px;background:#6a6a6a;"></div><div style="left:623px;top:352px;width:1263px;height:16px;background:#484848;overflow:hidden;"><svg width="16" height="14" style="left:2px;top:1px"><path d="M1.5 4.5 H4 L8 1.5 V12.5 L4 9.5 H1.5 Z" stroke="#e2e2e2" stroke-width="1.4" fill="none"/><path d="M10 4 Q12 7 10 10 M12.5 2 Q15.5 7 12.5 12" stroke="#e2e2e2" stroke-width="1.4" fill="none"/></svg><div class="t" style="left:19px;top:2px;font-size:12px;color:#e2e2e2;transform:scaleX(1.0);transform-origin:0 0;">4:29.736 &nbsp;| &nbsp;Guitarre_1</div></div><div style="left:623px;top:378px;width:1263px;height:78px;background:#585858;"></div><div style="left:623px;top:378px;width:1263px;height:1px;background:#c8c8c8;"></div><div style="left:624px;top:417px;width:1262px;height:1px;background:#6a6a6a;"></div><div style="left:623px;top:378px;width:2px;height:94px;background:#ffd800;"></div><div style="left:623px;top:456px;width:1263px;height:16px;background:#ffdc00;overflow:hidden;"><svg width="16" height="14" style="left:2px;top:1px"><path d="M1.5 4.5 H4 L8 1.5 V12.5 L4 9.5 H1.5 Z" stroke="#1a1a1a" stroke-width="1.4" fill="none"/><path d="M10 4 Q12 7 10 10 M12.5 2 Q15.5 7 12.5 12" stroke="#1a1a1a" stroke-width="1.4" fill="none"/></svg><div class="t" style="left:19px;top:2px;font-size:12px;color:#1a1a1a;transform:scaleX(1.012);transform-origin:0 0;">1:52.896 &nbsp;| &nbsp;Spanische Musik klassiker, instrumental, typisch, folklore, traditionelle, gute - Flamenco</div></div><div style="left:402px;top:482px;width:274px;height:78px;background:#585858;"></div><div style="left:403px;top:521px;width:272px;height:1px;background:#6a6a6a;"></div><div style="left:675px;top:482px;width:1px;height:94px;background:#9a9a9a;"></div><div style="left:402px;top:560px;width:274px;height:16px;background:#484848;overflow:hidden;"><svg width="16" height="14" style="left:2px;top:1px"><path d="M1.5 4.5 H4 L8 1.5 V12.5 L4 9.5 H1.5 Z" stroke="#dadada" stroke-width="1.4" fill="none"/><path d="M10 4 Q12 7 10 10 M12.5 2 Q15.5 7 12.5 12" stroke="#dadada" stroke-width="1.4" fill="none"/></svg><div class="t" style="left:19px;top:2px;font-size:12px;color:#dadada;transform:scaleX(0.717);transform-origin:0 0;">2:10.449 | Spanische Musik klassiker, instrumental, typisch, folkl...</div></div><svg width="1920" height="600" style="left:0;top:0"><path d="M624,293.0 L625,293.4 L626,293.1 L627,293.4 L628,293.4 L629,293.2 L630,293.6 L631,293.2 L632,292.9 L633,292.4 L634,293.3 L635,293.2 L636,293.6 L637,292.1 L638,291.7 L639,293.1 L640,291.5 L641,290.9 L642,291.3 L643,280.8 L644,286.3 L645,293.4 L646,292.3 L647,293.2 L648,293.1 L649,292.8 L650,293.4 L651,280.5 L652,286.1 L653,290.3 L654,290.8 L655,290.4 L656,290.8 L657,290.2 L658,290.8 L659,291.6 L660,289.0 L661,283.2 L662,287.7 L663,288.8 L664,290.6 L665,291.5 L666,279.3 L667,285.4 L668,289.8 L669,290.4 L670,288.6 L671,290.0 L672,287.8 L673,282.3 L674,287.2 L675,291.7 L676,288.5 L677,289.5 L678,287.3 L679,289.4 L680,291.7 L681,289.7 L682,288.3 L683,290.3 L684,291.9 L685,291.3 L686,281.1 L687,286.5 L688,290.9 L689,291.4 L690,292.2 L691,292.7 L692,289.4 L693,291.2 L694,290.0 L695,290.1 L696,291.4 L697,289.3 L698,281.1 L699,286.5 L700,291.7 L701,291.1 L702,291.8 L703,291.8 L704,289.0 L705,288.8 L706,290.7 L707,289.1 L708,282.7 L709,287.4 L710,289.6 L711,289.8 L712,292.0 L713,289.5 L714,291.4 L715,292.0 L716,290.3 L717,291.3 L718,279.2 L719,285.3 L720,293.1 L721,291.4 L722,292.1 L723,291.0 L724,291.4 L725,291.3 L726,289.4 L727,279.8 L728,285.7 L729,289.4 L730,291.5 L731,292.3 L732,289.8 L733,289.2 L734,291.1 L735,292.0 L736,290.1 L737,288.6 L738,283.2 L739,287.7 L740,288.2 L741,289.1 L742,290.2 L743,291.9 L744,292.8 L745,288.9 L746,290.8 L747,289.2 L748,290.8 L749,280.5 L750,286.1 L751,290.3 L752,291.4 L753,289.0 L754,291.5 L755,291.5 L756,283.3 L757,287.5 L758,288.0 L759,289.9 L760,287.0 L761,290.0 L762,292.0 L763,291.3 L764,290.0 L765,291.8 L766,291.7 L767,290.6 L768,281.1 L769,286.5 L770,290.3 L771,286.9 L772,285.2 L773,286.5 L774,286.8 L775,287.5 L776,290.4 L777,292.0 L778,292.7 L779,279.1 L780,285.3 L781,285.5 L782,290.4 L783,288.6 L784,288.8 L785,287.5 L786,289.5 L787,286.3 L788,290.4 L789,289.3 L790,278.9 L791,285.1 L792,287.0 L793,287.4 L794,287.1 L795,286.5 L796,289.2 L797,288.5 L798,279.5 L799,285.5 L800,289.2 L801,288.2 L802,287.6 L803,288.8 L804,289.0 L805,290.2 L806,289.8 L807,278.8 L808,285.1 L809,290.3 L810,288.3 L811,288.2 L812,288.8 L813,290.4 L814,289.6 L815,290.0 L816,290.7 L817,289.5 L818,291.9 L819,283.0 L820,287.6 L821,291.1 L822,291.0 L823,291.9 L824,290.6 L825,282.4 L826,287.2 L827,289.3 L828,291.3 L829,292.8 L830,292.3 L831,290.8 L832,292.0 L833,292.5 L834,290.0 L835,290.0 L836,290.8 L837,289.3 L838,281.3 L839,286.6 L840,291.7 L841,291.3 L842,289.6 L843,288.6 L844,288.3 L845,290.2 L846,290.0 L847,291.0 L848,282.0 L849,287.0 L850,288.9 L851,288.1 L852,288.4 L853,287.3 L854,290.0 L855,291.4 L856,290.6 L857,281.6 L858,286.7 L859,290.7 L860,289.2 L861,289.4 L862,290.3 L863,287.8 L864,286.1 L865,280.6 L866,286.1 L867,292.4 L868,288.1 L869,291.2 L870,288.5 L871,288.3 L872,289.7 L873,287.4 L874,291.1 L875,279.0 L876,285.2 L877,291.9 L878,287.9 L879,289.9 L880,291.2 L881,292.2 L882,289.1 L883,289.1 L884,288.1 L885,287.6 L886,278.9 L887,285.1 L888,286.4 L889,289.7 L890,289.3 L891,290.8 L892,292.3 L893,290.3 L894,288.2 L895,290.5 L896,290.8 L897,290.6 L898,278.5 L899,284.9 L900,288.6 L901,287.7 L902,289.4 L903,288.0 L904,287.0 L905,290.7 L906,287.9 L907,288.1 L908,291.0 L909,282.7 L910,287.4 L911,288.0 L912,289.9 L913,289.8 L914,288.4 L915,288.4 L916,287.8 L917,289.7 L918,289.6 L919,291.4 L920,290.0 L921,278.7 L922,285.0 L923,289.5 L924,291.4 L925,289.5 L926,288.6 L927,288.3 L928,289.9 L929,289.5 L930,291.1 L931,289.5 L932,289.2 L933,290.9 L934,280.7 L935,286.2 L936,291.1 L937,290.1 L938,290.7 L939,292.6 L940,290.4 L941,292.3 L942,290.3 L943,291.9 L944,291.8 L945,282.4 L946,287.3 L947,292.5 L948,291.2 L949,289.9 L950,289.0 L951,289.2 L952,288.2 L953,289.6 L954,288.2 L955,291.3 L956,291.8 L957,280.6 L958,286.2 L959,289.4 L960,289.1 L961,289.5 L962,288.0 L963,288.8 L964,283.2 L965,287.7 L966,288.1 L967,286.9 L968,290.0 L969,287.7 L970,286.2 L971,288.0 L972,288.3 L973,290.5 L974,289.3 L975,289.1 L976,278.6 L977,284.9 L978,287.1 L979,288.1 L980,289.1 L981,279.5 L982,285.5 L983,288.4 L984,287.5 L985,290.8 L986,289.2 L987,289.3 L988,286.2 L989,282.7 L990,287.4 L991,288.9 L992,290.9 L993,289.9 L994,287.3 L995,285.9 L996,279.7 L997,285.6 L998,290.9 L999,288.9 L1000,286.5 L1001,290.2 L1002,287.9 L1003,291.3 L1004,291.5 L1005,291.5 L1006,289.0 L1007,290.1 L1008,283.3 L1009,287.8 L1010,291.4 L1011,289.0 L1012,291.3 L1013,290.2 L1014,291.1 L1015,291.7 L1016,290.4 L1017,290.4 L1018,283.3 L1019,287.8 L1020,290.2 L1021,291.7 L1022,292.0 L1023,290.4 L1024,289.8 L1025,290.1 L1026,289.0 L1027,289.6 L1028,288.9 L1029,281.8 L1030,286.9 L1031,289.3 L1032,288.8 L1033,290.8 L1034,291.5 L1035,289.6 L1036,291.5 L1037,289.3 L1038,289.0 L1039,291.6 L1040,292.1 L1041,278.6 L1042,285.0 L1043,292.7 L1044,290.4 L1045,291.0 L1046,289.9 L1047,291.9 L1048,291.6 L1049,290.5 L1050,278.5 L1051,284.9 L1052,290.7 L1053,289.1 L1054,288.3 L1055,291.3 L1056,290.8 L1057,283.1 L1058,287.7 L1059,289.6 L1060,291.4 L1061,292.5 L1062,292.7 L1063,293.1 L1064,290.9 L1065,290.3 L1066,289.8 L1067,283.3 L1068,287.8 L1069,291.9 L1070,288.8 L1071,286.9 L1072,286.5 L1073,281.5 L1074,286.7 L1075,288.0 L1076,289.0 L1077,287.8 L1078,289.6 L1079,289.5 L1080,289.1 L1081,289.4 L1082,288.6 L1083,282.7 L1084,287.4 L1085,286.8 L1086,289.9 L1087,289.4 L1088,279.2 L1089,285.3 L1090,290.5 L1091,291.3 L1092,289.5 L1093,291.8 L1094,287.4 L1095,278.7 L1096,285.0 L1097,285.8 L1098,286.9 L1099,288.6 L1100,288.1 L1101,288.5 L1102,285.9 L1103,286.0 L1104,289.2 L1105,286.6 L1106,286.7 L1107,286.6 L1108,281.6 L1109,286.8 L1110,286.8 L1111,286.2 L1112,287.1 L1113,287.1 L1114,287.1 L1115,289.1 L1116,288.2 L1117,280.9 L1118,286.3 L1119,290.3 L1120,292.3 L1121,291.3 L1122,289.7 L1123,289.3 L1124,291.0 L1125,288.4 L1126,288.8 L1127,280.5 L1128,286.1 L1129,289.8 L1130,290.0 L1131,290.7 L1132,288.6 L1133,289.3 L1134,289.3 L1135,289.2 L1136,288.3 L1137,280.4 L1138,286.0 L1139,289.9 L1140,291.4 L1141,291.4 L1142,292.7 L1143,292.7 L1144,292.0 L1145,292.8 L1146,292.5 L1147,290.1 L1148,290.5 L1149,290.8 L1150,281.0 L1151,286.4 L1152,288.9 L1153,289.7 L1154,289.4 L1155,291.9 L1156,290.9 L1157,289.9 L1158,279.9 L1159,285.7 L1160,291.6 L1161,291.1 L1162,292.1 L1163,291.1 L1164,290.3 L1165,282.0 L1166,287.0 L1167,290.3 L1168,290.2 L1169,289.8 L1170,290.6 L1171,291.2 L1172,289.7 L1173,289.6 L1174,290.8 L1175,289.1 L1176,290.5 L1177,292.3 L1178,280.9 L1179,286.3 L1180,292.3 L1181,289.1 L1182,289.8 L1183,287.4 L1184,287.3 L1185,290.9 L1186,287.1 L1187,283.4 L1188,287.9 L1189,287.2 L1190,288.7 L1191,288.9 L1192,286.2 L1193,289.4 L1194,288.8 L1195,280.6 L1196,286.2 L1197,288.1 L1198,285.7 L1199,285.7 L1200,280.4 L1201,286.1 L1202,288.5 L1203,288.9 L1204,290.5 L1205,291.9 L1206,289.7 L1207,291.2 L1208,289.9 L1209,288.2 L1210,283.2 L1211,287.7 L1212,288.9 L1213,289.3 L1214,287.5 L1215,288.3 L1216,286.0 L1217,285.6 L1218,286.6 L1219,289.7 L1220,281.2 L1221,286.5 L1222,287.4 L1223,288.1 L1224,289.7 L1225,290.8 L1226,289.1 L1227,289.2 L1228,289.2 L1229,289.0 L1230,288.4 L1231,281.7 L1232,286.8 L1233,288.5 L1234,287.8 L1235,287.8 L1236,291.4 L1237,292.6 L1238,292.1 L1239,291.4 L1240,290.4 L1241,292.1 L1242,279.8 L1243,285.7 L1244,292.9 L1245,290.9 L1246,290.7 L1247,283.2 L1248,287.7 L1249,291.1 L1250,292.0 L1251,291.9 L1252,290.4 L1253,289.6 L1254,292.0 L1255,291.2 L1256,283.9 L1257,287.1 L1258,278.7 L1259,285.0 L1260,291.5 L1261,293.0 L1262,293.3 L1263,293.8 L1264,293.5 L1265,293.0 L1266,293.9 L1267,293.6 L1268,293.3 L1269,293.0 L1270,293.7 L1271,293.8 L1272,294.0 L1273,293.0 L1274,294.0 L1275,294.0 L1276,293.4 L1277,293.5 L1278,293.2 L1279,291.6 L1280,293.0 L1281,294.0 L1282,293.9 L1283,293.1 L1284,294.0 L1285,293.7 L1286,293.0 L1287,293.0 L1288,293.7 L1289,294.0 L1290,293.6 L1291,292.9 L1292,293.5 L1293,294.0 L1294,292.8 L1295,293.1 L1296,292.4 L1297,292.3 L1298,292.4 L1299,293.3 L1300,292.6 L1301,293.6 L1302,293.5 L1303,293.4 L1304,292.3 L1305,292.3 L1306,291.9 L1307,293.4 L1308,293.4 L1309,293.4 L1310,293.4 L1311,293.4 L1312,293.8 L1313,293.0 L1314,292.5 L1315,293.1 L1316,292.5 L1317,293.1 L1318,293.8 L1319,292.7 L1320,292.4 L1321,293.7 L1322,294.0 L1323,293.2 L1324,293.2 L1325,293.1 L1326,291.9 L1327,293.0 L1328,292.7 L1329,294.0 L1330,293.3 L1331,292.8 L1332,294.0 L1333,294.0 L1334,293.0 L1335,292.7 L1336,294.0 L1337,293.2 L1338,294.0 L1339,293.1 L1340,293.3 L1341,293.9 L1342,293.9 L1343,293.1 L1344,293.5 L1345,293.2 L1346,293.7 L1347,291.3 L1348,293.0 L1349,293.4 L1350,293.6 L1351,293.6 L1352,293.4 L1353,293.4 L1354,293.1 L1355,293.8 L1356,293.3 L1357,293.5 L1358,293.2 L1359,293.3 L1360,293.3 L1361,293.2 L1362,293.1 L1363,293.5 L1364,293.7 L1365,293.4 L1366,291.7 L1367,293.8 L1368,293.8 L1369,294.0 L1370,293.3 L1371,293.0 L1372,293.8 L1373,294.0 L1374,294.0 L1375,293.7 L1376,293.9 L1377,292.9 L1378,294.0 L1379,293.8 L1380,294.0 L1381,293.3 L1382,293.1 L1383,294.0 L1384,294.0 L1385,293.5 L1386,293.3 L1387,292.8 L1388,294.0 L1389,294.0 L1390,293.9 L1391,293.9 L1392,293.8 L1393,293.0 L1394,293.2 L1395,293.8 L1396,293.9 L1397,293.7 L1398,293.9 L1399,292.4 L1400,293.6 L1401,293.1 L1402,292.6 L1403,293.3 L1404,293.7 L1405,292.4 L1406,292.3 L1407,293.5 L1408,293.1 L1409,292.2 L1410,293.2 L1411,293.7 L1412,294.0 L1413,292.2 L1414,292.5 L1415,293.4 L1416,293.1 L1417,293.1 L1418,293.6 L1419,292.1 L1420,292.8 L1421,293.7 L1422,294.0 L1423,293.2 L1424,293.4 L1425,292.6 L1426,291.0 L1427,293.0 L1428,293.9 L1429,293.9 L1430,293.6 L1431,293.7 L1432,292.6 L1433,293.3 L1434,293.0 L1435,292.4 L1436,293.8 L1437,293.3 L1438,294.0 L1439,292.9 L1440,294.0 L1441,292.9 L1442,292.8 L1443,292.9 L1444,294.0 L1445,292.1 L1446,293.1 L1447,294.0 L1448,293.5 L1449,293.6 L1450,292.9 L1451,293.4 L1452,293.1 L1453,293.9 L1454,293.2 L1455,293.7 L1456,293.0 L1457,294.0 L1458,293.2 L1459,294.0 L1460,293.6 L1461,293.6 L1462,294.0 L1463,293.2 L1464,293.9 L1465,293.9 L1466,294.0 L1467,293.9 L1468,293.7 L1469,293.4 L1470,293.9 L1471,293.5 L1472,294.0 L1473,293.8 L1474,293.7 L1475,293.1 L1476,293.2 L1477,293.5 L1478,294.0 L1479,292.0 L1480,293.3 L1481,294.0 L1482,293.5 L1483,293.7 L1484,294.0 L1485,292.9 L1486,293.1 L1487,294.0 L1488,293.4 L1489,293.8 L1490,293.7 L1491,293.4 L1492,293.8 L1493,293.7 L1494,291.6 L1495,293.1 L1496,293.8 L1497,293.9 L1498,293.0 L1499,293.7 L1500,292.6 L1501,293.2 L1502,292.9 L1503,293.6 L1504,292.7 L1505,294.0 L1506,294.0 L1507,294.0 L1508,292.9 L1509,292.8 L1510,293.9 L1511,293.4 L1512,292.5 L1513,293.0 L1514,294.0 L1515,293.7 L1516,293.9 L1517,293.9 L1518,293.4 L1519,294.0 L1520,292.3 L1521,293.3 L1522,293.1 L1523,292.8 L1524,292.3 L1525,292.5 L1526,293.4 L1527,293.5 L1528,293.3 L1529,294.0 L1530,293.4 L1531,292.8 L1532,292.2 L1533,292.6 L1534,292.9 L1535,293.0 L1536,294.0 L1537,293.6 L1538,293.6 L1539,293.0 L1540,294.0 L1541,293.5 L1542,293.3 L1543,291.8 L1544,292.8 L1545,293.2 L1546,294.0 L1547,292.9 L1548,292.7 L1549,293.3 L1550,293.7 L1551,293.5 L1552,294.0 L1553,293.1 L1554,292.7 L1555,293.5 L1556,293.2 L1557,293.0 L1558,294.0 L1559,292.9 L1560,293.4 L1561,294.0 L1562,294.0 L1563,294.0 L1564,293.5 L1565,293.4 L1566,293.9 L1567,293.1 L1568,293.8 L1569,293.7 L1570,294.0 L1571,293.1 L1572,294.0 L1573,293.2 L1574,293.6 L1575,293.6 L1576,293.6 L1577,294.0 L1578,291.6 L1579,293.1 L1580,293.3 L1581,293.5 L1582,294.0 L1583,293.2 L1584,293.9 L1585,293.1 L1586,294.0 L1587,293.5 L1588,293.2 L1589,294.0 L1590,293.5 L1591,294.0 L1592,294.0 L1593,294.0 L1594,292.8 L1595,292.9 L1596,293.3 L1597,293.8 L1598,293.2 L1599,293.1 L1600,293.6 L1601,293.3 L1602,292.9 L1603,294.0 L1604,293.9 L1605,293.4 L1606,294.0 L1607,293.5 L1608,293.2 L1609,293.9 L1610,293.3 L1611,293.7 L1612,293.1 L1613,292.2 L1614,293.0 L1615,294.0 L1616,292.9 L1617,293.9 L1618,292.3 L1619,293.0 L1620,293.2 L1621,293.4 L1622,292.9 L1623,292.8 L1624,292.6 L1625,292.6 L1626,293.2 L1627,292.1 L1628,292.4 L1629,292.4 L1630,293.3 L1631,293.3 L1632,293.0 L1633,291.2 L1634,293.1 L1635,293.1 L1636,293.3 L1637,292.3 L1638,293.6 L1639,294.0 L1640,292.8 L1641,292.4 L1642,292.8 L1643,293.0 L1644,292.8 L1645,293.6 L1646,293.1 L1647,294.0 L1648,294.0 L1649,293.4 L1650,293.3 L1651,293.5 L1652,293.9 L1653,292.1 L1654,292.6 L1655,293.4 L1656,293.2 L1657,293.0 L1658,293.5 L1659,293.9 L1660,291.7 L1661,291.6 L1662,292.4 L1663,292.0 L1664,293.1 L1665,292.2 L1666,293.6 L1667,292.4 L1668,292.8 L1669,289.7 L1670,294.0 L1671,292.4 L1672,293.9 L1673,293.0 L1674,292.1 L1675,294.0 L1676,293.7 L1677,293.6 L1678,293.5 L1679,294.0 L1680,292.3 L1681,292.5 L1682,293.4 L1683,293.5 L1684,293.0 L1685,291.0 L1686,294.0 L1687,292.3 L1688,293.5 L1689,293.1 L1690,292.2 L1691,292.0 L1692,293.1 L1693,293.7 L1694,293.5 L1695,292.1 L1696,292.1 L1697,293.7 L1698,292.2 L1699,293.3 L1700,293.0 L1701,293.7 L1702,291.9 L1703,291.6 L1704,293.6 L1705,292.5 L1706,293.6 L1707,291.7 L1708,294.0 L1709,293.8 L1710,290.7 L1711,293.2 L1712,291.5 L1713,291.5 L1714,291.9 L1715,293.7 L1716,291.9 L1717,291.1 L1718,292.6 L1719,293.8 L1720,293.3 L1721,293.0 L1722,291.7 L1723,293.4 L1724,293.4 L1725,293.2 L1726,291.8 L1727,291.3 L1728,292.7 L1729,291.7 L1730,290.9 L1731,292.0 L1732,293.2 L1733,293.0 L1734,290.8 L1735,291.7 L1736,293.0 L1737,291.8 L1738,293.7 L1739,290.6 L1740,292.5 L1741,292.2 L1742,292.2 L1743,293.9 L1744,288.1 L1745,293.0 L1746,293.2 L1747,291.3 L1748,293.7 L1749,293.1 L1750,291.6 L1751,293.2 L1752,293.1 L1753,292.3 L1754,293.5 L1755,291.3 L1756,291.0 L1757,294.0 L1758,292.7 L1759,290.4 L1760,293.0 L1761,291.4 L1762,292.7 L1763,293.6 L1764,292.6 L1765,292.4 L1766,293.2 L1767,292.4 L1768,292.1 L1769,292.8 L1770,292.9 L1771,292.1 L1772,292.5 L1773,292.9 L1774,291.9 L1775,293.8 L1776,292.4 L1777,293.8 L1778,292.8 L1779,293.7 L1780,293.2 L1781,292.5 L1782,292.5 L1783,292.5 L1784,293.7 L1785,293.2 L1786,293.7 L1787,293.0 L1788,293.2 L1789,294.0 L1790,292.9 L1791,292.7 L1792,293.0 L1793,288.9 L1794,293.8 L1795,293.9 L1796,294.0 L1797,293.1 L1798,293.2 L1799,293.2 L1800,293.6 L1801,292.4 L1802,294.0 L1803,292.1 L1804,292.8 L1805,292.9 L1806,292.2 L1807,293.6 L1808,293.8 L1809,293.4 L1810,294.0 L1811,293.3 L1812,292.5 L1813,292.7 L1814,293.4 L1815,292.5 L1816,293.9 L1817,291.8 L1818,293.6 L1819,293.3 L1820,293.6 L1821,292.0 L1822,291.5 L1823,291.6 L1824,293.9 L1825,292.8 L1826,292.9 L1827,290.1 L1828,290.9 L1829,293.9 L1830,292.4 L1831,291.5 L1832,290.7 L1833,293.5 L1834,292.5 L1835,291.5 L1836,293.9 L1837,293.2 L1838,290.9 L1839,293.5 L1840,290.3 L1841,293.0 L1842,292.5 L1843,293.7 L1844,293.9 L1845,290.5 L1846,291.3 L1847,291.5 L1848,293.2 L1849,293.1 L1850,292.1 L1851,293.2 L1852,292.4 L1853,290.9 L1854,292.8 L1855,292.9 L1856,290.8 L1857,292.0 L1858,293.9 L1859,292.8 L1860,292.0 L1861,293.9 L1862,293.0 L1863,291.9 L1864,291.5 L1865,292.3 L1866,291.5 L1867,292.7 L1868,293.0 L1869,291.7 L1870,293.0 L1871,292.0 L1872,293.5 L1873,290.4 L1874,293.6 L1875,292.7 L1876,293.7 L1877,293.6 L1878,293.6 L1879,293.0 L1880,293.4 L1881,293.1 L1882,291.9 L1883,292.6 L1884,292.2 L1885,293.7 L1886,293.3 L1886,295.7 L1885,295.3 L1884,296.8 L1883,296.4 L1882,297.1 L1881,295.9 L1880,295.6 L1879,296.0 L1878,295.4 L1877,295.4 L1876,295.3 L1875,296.3 L1874,295.4 L1873,298.6 L1872,295.5 L1871,297.0 L1870,296.0 L1869,297.3 L1868,296.0 L1867,296.3 L1866,297.5 L1865,296.7 L1864,297.5 L1863,297.1 L1862,296.0 L1861,295.1 L1860,297.0 L1859,296.2 L1858,295.1 L1857,297.0 L1856,298.2 L1855,296.1 L1854,296.2 L1853,298.1 L1852,296.6 L1851,295.8 L1850,296.9 L1849,295.9 L1848,295.8 L1847,297.5 L1846,297.7 L1845,298.5 L1844,295.1 L1843,295.3 L1842,296.5 L1841,296.0 L1840,298.7 L1839,295.5 L1838,298.1 L1837,295.8 L1836,295.1 L1835,297.5 L1834,296.5 L1833,295.5 L1832,298.3 L1831,297.5 L1830,296.6 L1829,295.1 L1828,298.1 L1827,298.9 L1826,296.1 L1825,296.2 L1824,295.1 L1823,297.4 L1822,297.5 L1821,297.0 L1820,295.4 L1819,295.7 L1818,295.4 L1817,297.2 L1816,295.1 L1815,296.5 L1814,295.6 L1813,296.3 L1812,296.5 L1811,295.7 L1810,295.0 L1809,295.6 L1808,295.2 L1807,295.4 L1806,296.8 L1805,296.1 L1804,296.2 L1803,296.9 L1802,295.0 L1801,296.6 L1800,295.4 L1799,295.8 L1798,295.8 L1797,295.9 L1796,295.0 L1795,295.1 L1794,295.2 L1793,300.1 L1792,296.0 L1791,296.3 L1790,296.1 L1789,295.0 L1788,295.8 L1787,296.0 L1786,295.3 L1785,295.8 L1784,295.3 L1783,296.5 L1782,296.5 L1781,296.5 L1780,295.8 L1779,295.3 L1778,296.2 L1777,295.2 L1776,296.6 L1775,295.2 L1774,297.1 L1773,296.1 L1772,296.5 L1771,296.9 L1770,296.1 L1769,296.2 L1768,296.9 L1767,296.6 L1766,295.8 L1765,296.6 L1764,296.4 L1763,295.4 L1762,296.3 L1761,297.6 L1760,296.0 L1759,298.6 L1758,296.3 L1757,295.0 L1756,298.0 L1755,297.7 L1754,295.5 L1753,296.7 L1752,295.9 L1751,295.8 L1750,297.4 L1749,295.9 L1748,295.3 L1747,297.7 L1746,295.8 L1745,296.0 L1744,300.9 L1743,295.1 L1742,296.8 L1741,296.8 L1740,296.5 L1739,298.4 L1738,295.3 L1737,297.2 L1736,296.0 L1735,297.3 L1734,298.2 L1733,296.0 L1732,295.8 L1731,297.0 L1730,298.1 L1729,297.3 L1728,296.3 L1727,297.7 L1726,297.2 L1725,295.8 L1724,295.6 L1723,295.6 L1722,297.3 L1721,296.0 L1720,295.7 L1719,295.2 L1718,296.4 L1717,297.9 L1716,297.1 L1715,295.3 L1714,297.1 L1713,297.5 L1712,297.5 L1711,295.8 L1710,298.3 L1709,295.2 L1708,295.0 L1707,297.3 L1706,295.4 L1705,296.5 L1704,295.4 L1703,297.4 L1702,297.1 L1701,295.3 L1700,296.0 L1699,295.7 L1698,296.8 L1697,295.3 L1696,296.9 L1695,296.9 L1694,295.5 L1693,295.3 L1692,295.9 L1691,297.0 L1690,296.8 L1689,295.9 L1688,295.5 L1687,296.7 L1686,295.0 L1685,298.0 L1684,296.0 L1683,295.5 L1682,295.6 L1681,296.5 L1680,296.7 L1679,295.0 L1678,295.5 L1677,295.4 L1676,295.3 L1675,295.0 L1674,296.9 L1673,296.0 L1672,295.1 L1671,296.6 L1670,295.0 L1669,299.3 L1668,296.2 L1667,296.6 L1666,295.4 L1665,296.8 L1664,295.9 L1663,297.0 L1662,296.6 L1661,297.4 L1660,297.3 L1659,295.1 L1658,295.5 L1657,296.0 L1656,295.8 L1655,295.6 L1654,296.4 L1653,296.9 L1652,295.1 L1651,295.5 L1650,295.7 L1649,295.6 L1648,295.0 L1647,295.0 L1646,295.9 L1645,295.4 L1644,296.2 L1643,296.0 L1642,296.2 L1641,296.6 L1640,296.2 L1639,295.0 L1638,295.4 L1637,296.7 L1636,295.7 L1635,295.9 L1634,295.9 L1633,297.8 L1632,296.0 L1631,295.7 L1630,295.7 L1629,296.6 L1628,296.6 L1627,296.9 L1626,295.8 L1625,296.4 L1624,296.4 L1623,296.2 L1622,296.1 L1621,295.6 L1620,295.8 L1619,296.0 L1618,296.7 L1617,295.1 L1616,296.1 L1615,295.0 L1614,296.0 L1613,296.8 L1612,295.9 L1611,295.3 L1610,295.7 L1609,295.1 L1608,295.8 L1607,295.5 L1606,295.0 L1605,295.6 L1604,295.1 L1603,295.0 L1602,296.1 L1601,295.7 L1600,295.4 L1599,295.9 L1598,295.8 L1597,295.2 L1596,295.7 L1595,296.1 L1594,296.2 L1593,295.0 L1592,295.0 L1591,295.0 L1590,295.5 L1589,295.0 L1588,295.8 L1587,295.5 L1586,295.0 L1585,295.9 L1584,295.1 L1583,295.8 L1582,295.0 L1581,295.5 L1580,295.7 L1579,295.9 L1578,297.4 L1577,295.0 L1576,295.4 L1575,295.4 L1574,295.4 L1573,295.8 L1572,295.0 L1571,295.9 L1570,295.0 L1569,295.3 L1568,295.2 L1567,295.9 L1566,295.1 L1565,295.6 L1564,295.5 L1563,295.0 L1562,295.0 L1561,295.0 L1560,295.6 L1559,296.1 L1558,295.0 L1557,296.0 L1556,295.8 L1555,295.5 L1554,296.3 L1553,295.9 L1552,295.0 L1551,295.5 L1550,295.3 L1549,295.7 L1548,296.3 L1547,296.1 L1546,295.0 L1545,295.8 L1544,296.2 L1543,297.2 L1542,295.7 L1541,295.5 L1540,295.0 L1539,296.0 L1538,295.4 L1537,295.4 L1536,295.0 L1535,296.0 L1534,296.1 L1533,296.4 L1532,296.8 L1531,296.2 L1530,295.6 L1529,295.0 L1528,295.7 L1527,295.5 L1526,295.6 L1525,296.5 L1524,296.7 L1523,296.2 L1522,295.9 L1521,295.7 L1520,296.7 L1519,295.0 L1518,295.6 L1517,295.1 L1516,295.1 L1515,295.3 L1514,295.0 L1513,296.0 L1512,296.5 L1511,295.6 L1510,295.1 L1509,296.2 L1508,296.1 L1507,295.0 L1506,295.0 L1505,295.0 L1504,296.3 L1503,295.4 L1502,296.1 L1501,295.8 L1500,296.4 L1499,295.3 L1498,296.0 L1497,295.1 L1496,295.2 L1495,295.9 L1494,297.4 L1493,295.3 L1492,295.2 L1491,295.6 L1490,295.3 L1489,295.2 L1488,295.6 L1487,295.0 L1486,295.9 L1485,296.1 L1484,295.0 L1483,295.3 L1482,295.5 L1481,295.0 L1480,295.7 L1479,297.0 L1478,295.0 L1477,295.5 L1476,295.8 L1475,295.9 L1474,295.3 L1473,295.2 L1472,295.0 L1471,295.5 L1470,295.1 L1469,295.6 L1468,295.3 L1467,295.1 L1466,295.0 L1465,295.1 L1464,295.1 L1463,295.8 L1462,295.0 L1461,295.4 L1460,295.4 L1459,295.0 L1458,295.8 L1457,295.0 L1456,296.0 L1455,295.3 L1454,295.8 L1453,295.1 L1452,295.9 L1451,295.6 L1450,296.1 L1449,295.4 L1448,295.5 L1447,295.0 L1446,295.9 L1445,296.9 L1444,295.0 L1443,296.1 L1442,296.2 L1441,296.1 L1440,295.0 L1439,296.1 L1438,295.0 L1437,295.7 L1436,295.2 L1435,296.6 L1434,296.0 L1433,295.7 L1432,296.4 L1431,295.3 L1430,295.4 L1429,295.1 L1428,295.1 L1427,296.0 L1426,298.0 L1425,296.4 L1424,295.6 L1423,295.8 L1422,295.0 L1421,295.3 L1420,296.2 L1419,296.9 L1418,295.4 L1417,295.9 L1416,295.9 L1415,295.6 L1414,296.5 L1413,296.8 L1412,295.0 L1411,295.3 L1410,295.8 L1409,296.8 L1408,295.9 L1407,295.5 L1406,296.7 L1405,296.6 L1404,295.3 L1403,295.7 L1402,296.4 L1401,295.9 L1400,295.4 L1399,296.6 L1398,295.1 L1397,295.3 L1396,295.1 L1395,295.2 L1394,295.8 L1393,296.0 L1392,295.2 L1391,295.1 L1390,295.1 L1389,295.0 L1388,295.0 L1387,296.2 L1386,295.7 L1385,295.5 L1384,295.0 L1383,295.0 L1382,295.9 L1381,295.7 L1380,295.0 L1379,295.2 L1378,295.0 L1377,296.1 L1376,295.1 L1375,295.3 L1374,295.0 L1373,295.0 L1372,295.2 L1371,296.0 L1370,295.7 L1369,295.0 L1368,295.2 L1367,295.2 L1366,297.3 L1365,295.6 L1364,295.3 L1363,295.5 L1362,295.9 L1361,295.8 L1360,295.7 L1359,295.7 L1358,295.8 L1357,295.5 L1356,295.7 L1355,295.2 L1354,295.9 L1353,295.6 L1352,295.6 L1351,295.4 L1350,295.4 L1349,295.6 L1348,296.0 L1347,297.7 L1346,295.3 L1345,295.8 L1344,295.5 L1343,295.9 L1342,295.1 L1341,295.1 L1340,295.7 L1339,295.9 L1338,295.0 L1337,295.8 L1336,295.0 L1335,296.3 L1334,296.0 L1333,295.0 L1332,295.0 L1331,296.2 L1330,295.7 L1329,295.0 L1328,296.3 L1327,296.0 L1326,297.1 L1325,295.9 L1324,295.8 L1323,295.8 L1322,295.0 L1321,295.3 L1320,296.6 L1319,296.3 L1318,295.2 L1317,295.9 L1316,296.5 L1315,295.9 L1314,296.5 L1313,296.0 L1312,295.2 L1311,295.6 L1310,295.6 L1309,295.6 L1308,295.6 L1307,295.6 L1306,297.1 L1305,296.7 L1304,296.7 L1303,295.6 L1302,295.5 L1301,295.4 L1300,296.4 L1299,295.7 L1298,296.6 L1297,296.7 L1296,296.6 L1295,295.9 L1294,296.2 L1293,295.0 L1292,295.5 L1291,296.1 L1290,295.4 L1289,295.0 L1288,295.3 L1287,296.0 L1286,296.0 L1285,295.3 L1284,295.0 L1283,295.9 L1282,295.1 L1281,295.0 L1280,296.0 L1279,297.4 L1278,295.8 L1277,295.5 L1276,295.6 L1275,295.0 L1274,295.0 L1273,296.0 L1272,295.0 L1271,295.2 L1270,295.3 L1269,296.0 L1268,295.7 L1267,295.4 L1266,295.1 L1265,296.0 L1264,295.5 L1263,295.2 L1262,295.7 L1261,296.0 L1260,297.5 L1259,304.0 L1258,310.3 L1257,301.9 L1256,305.1 L1255,297.8 L1254,297.0 L1253,299.4 L1252,298.6 L1251,297.1 L1250,297.0 L1249,297.9 L1248,301.3 L1247,305.8 L1246,298.3 L1245,298.1 L1244,296.1 L1243,303.3 L1242,309.2 L1241,296.9 L1240,298.6 L1239,297.6 L1238,296.9 L1237,296.4 L1236,297.6 L1235,301.2 L1234,301.2 L1233,300.5 L1232,302.2 L1231,307.3 L1230,300.6 L1229,300.0 L1228,299.8 L1227,299.8 L1226,299.9 L1225,298.2 L1224,299.3 L1223,300.9 L1222,301.6 L1221,302.5 L1220,307.8 L1219,299.3 L1218,302.4 L1217,303.4 L1216,303.0 L1215,300.7 L1214,301.5 L1213,299.7 L1212,300.1 L1211,301.3 L1210,305.8 L1209,300.8 L1208,299.1 L1207,297.8 L1206,299.3 L1205,297.1 L1204,298.5 L1203,300.1 L1202,300.5 L1201,302.9 L1200,308.6 L1199,303.3 L1198,303.3 L1197,300.9 L1196,302.8 L1195,308.4 L1194,300.2 L1193,299.6 L1192,302.8 L1191,300.1 L1190,300.3 L1189,301.8 L1188,301.1 L1187,305.6 L1186,301.9 L1185,298.1 L1184,301.7 L1183,301.6 L1182,299.2 L1181,299.9 L1180,296.7 L1179,302.7 L1178,308.1 L1177,296.7 L1176,298.5 L1175,299.9 L1174,298.2 L1173,299.4 L1172,299.3 L1171,297.8 L1170,298.4 L1169,299.2 L1168,298.8 L1167,298.7 L1166,302.0 L1165,307.0 L1164,298.7 L1163,297.9 L1162,296.9 L1161,297.9 L1160,297.4 L1159,303.3 L1158,309.1 L1157,299.1 L1156,298.1 L1155,297.1 L1154,299.6 L1153,299.3 L1152,300.1 L1151,302.6 L1150,308.0 L1149,298.2 L1148,298.5 L1147,298.9 L1146,296.5 L1145,296.2 L1144,297.0 L1143,296.3 L1142,296.3 L1141,297.6 L1140,297.6 L1139,299.1 L1138,303.0 L1137,308.6 L1136,300.7 L1135,299.8 L1134,299.7 L1133,299.7 L1132,300.4 L1131,298.3 L1130,299.0 L1129,299.2 L1128,302.9 L1127,308.5 L1126,300.2 L1125,300.6 L1124,298.0 L1123,299.7 L1122,299.3 L1121,297.7 L1120,296.7 L1119,298.7 L1118,302.7 L1117,308.1 L1116,300.8 L1115,299.9 L1114,301.9 L1113,301.9 L1112,301.9 L1111,302.8 L1110,302.2 L1109,302.2 L1108,307.4 L1107,302.4 L1106,302.3 L1105,302.4 L1104,299.8 L1103,303.0 L1102,303.1 L1101,300.5 L1100,300.9 L1099,300.4 L1098,302.1 L1097,303.2 L1096,304.0 L1095,310.3 L1094,301.6 L1093,297.2 L1092,299.5 L1091,297.7 L1090,298.5 L1089,303.7 L1088,309.8 L1087,299.6 L1086,299.1 L1085,302.2 L1084,301.6 L1083,306.3 L1082,300.4 L1081,299.6 L1080,299.9 L1079,299.5 L1078,299.4 L1077,301.2 L1076,300.0 L1075,301.0 L1074,302.3 L1073,307.5 L1072,302.5 L1071,302.1 L1070,300.2 L1069,297.1 L1068,301.2 L1067,305.7 L1066,299.2 L1065,298.7 L1064,298.1 L1063,295.9 L1062,296.3 L1061,296.5 L1060,297.6 L1059,299.4 L1058,301.3 L1057,305.9 L1056,298.2 L1055,297.7 L1054,300.7 L1053,299.9 L1052,298.3 L1051,304.1 L1050,310.5 L1049,298.5 L1048,297.4 L1047,297.1 L1046,299.1 L1045,298.0 L1044,298.6 L1043,296.3 L1042,304.0 L1041,310.4 L1040,296.9 L1039,297.4 L1038,300.0 L1037,299.7 L1036,297.5 L1035,299.4 L1034,297.5 L1033,298.2 L1032,300.2 L1031,299.7 L1030,302.1 L1029,307.2 L1028,300.1 L1027,299.4 L1026,300.0 L1025,298.9 L1024,299.2 L1023,298.6 L1022,297.0 L1021,297.3 L1020,298.8 L1019,301.2 L1018,305.7 L1017,298.6 L1016,298.6 L1015,297.3 L1014,297.9 L1013,298.8 L1012,297.7 L1011,300.0 L1010,297.6 L1009,301.2 L1008,305.7 L1007,298.9 L1006,300.0 L1005,297.5 L1004,297.5 L1003,297.7 L1002,301.1 L1001,298.8 L1000,302.5 L999,300.1 L998,298.1 L997,303.4 L996,309.3 L995,303.1 L994,301.7 L993,299.1 L992,298.1 L991,300.1 L990,301.6 L989,306.3 L988,302.8 L987,299.7 L986,299.8 L985,298.2 L984,301.5 L983,300.6 L982,303.5 L981,309.5 L980,299.9 L979,300.9 L978,301.9 L977,304.1 L976,310.4 L975,299.9 L974,299.7 L973,298.5 L972,300.7 L971,301.0 L970,302.8 L969,301.3 L968,299.0 L967,302.1 L966,300.9 L965,301.3 L964,305.8 L963,300.2 L962,301.0 L961,299.5 L960,299.9 L959,299.6 L958,302.8 L957,308.4 L956,297.2 L955,297.7 L954,300.8 L953,299.4 L952,300.8 L951,299.8 L950,300.0 L949,299.1 L948,297.8 L947,296.5 L946,301.7 L945,306.6 L944,297.2 L943,297.1 L942,298.7 L941,296.7 L940,298.6 L939,296.4 L938,298.3 L937,298.9 L936,297.9 L935,302.8 L934,308.3 L933,298.1 L932,299.8 L931,299.5 L930,297.9 L929,299.5 L928,299.1 L927,300.7 L926,300.4 L925,299.5 L924,297.6 L923,299.5 L922,304.0 L921,310.3 L920,299.0 L919,297.6 L918,299.4 L917,299.3 L916,301.2 L915,300.6 L914,300.6 L913,299.2 L912,299.1 L911,301.0 L910,301.6 L909,306.3 L908,298.0 L907,300.9 L906,301.1 L905,298.3 L904,302.0 L903,301.0 L902,299.6 L901,301.3 L900,300.4 L899,304.1 L898,310.5 L897,298.4 L896,298.2 L895,298.5 L894,300.8 L893,298.7 L892,296.7 L891,298.2 L890,299.7 L889,299.3 L888,302.6 L887,303.9 L886,310.1 L885,301.4 L884,300.9 L883,299.9 L882,299.9 L881,296.8 L880,297.8 L879,299.1 L878,301.1 L877,297.1 L876,303.8 L875,310.0 L874,297.9 L873,301.6 L872,299.3 L871,300.7 L870,300.5 L869,297.8 L868,300.9 L867,296.6 L866,302.9 L865,308.4 L864,302.9 L863,301.2 L862,298.7 L861,299.6 L860,299.8 L859,298.3 L858,302.3 L857,307.4 L856,298.4 L855,297.6 L854,299.0 L853,301.7 L852,300.6 L851,300.9 L850,300.1 L849,302.0 L848,307.0 L847,298.0 L846,299.0 L845,298.8 L844,300.7 L843,300.4 L842,299.4 L841,297.7 L840,297.3 L839,302.4 L838,307.7 L837,299.7 L836,298.2 L835,299.0 L834,299.0 L833,296.5 L832,297.0 L831,298.2 L830,296.7 L829,296.2 L828,297.7 L827,299.7 L826,301.8 L825,306.6 L824,298.4 L823,297.1 L822,298.0 L821,297.9 L820,301.4 L819,306.0 L818,297.1 L817,299.5 L816,298.3 L815,299.0 L814,299.4 L813,298.6 L812,300.2 L811,300.8 L810,300.7 L809,298.7 L808,303.9 L807,310.2 L806,299.2 L805,298.8 L804,300.0 L803,300.2 L802,301.4 L801,300.8 L800,299.8 L799,303.5 L798,309.5 L797,300.5 L796,299.8 L795,302.5 L794,301.9 L793,301.6 L792,302.0 L791,303.9 L790,310.1 L789,299.7 L788,298.6 L787,302.7 L786,299.5 L785,301.5 L784,300.2 L783,300.4 L782,298.6 L781,303.5 L780,303.7 L779,309.9 L778,296.3 L777,297.0 L776,298.6 L775,301.5 L774,302.2 L773,302.5 L772,303.8 L771,302.1 L770,298.7 L769,302.5 L768,307.9 L767,298.4 L766,297.3 L765,297.2 L764,299.0 L763,297.7 L762,297.0 L761,299.0 L760,302.0 L759,299.1 L758,301.0 L757,301.5 L756,305.7 L755,297.5 L754,297.5 L753,300.0 L752,297.6 L751,298.7 L750,302.9 L749,308.5 L748,298.2 L747,299.8 L746,298.2 L745,300.1 L744,296.2 L743,297.1 L742,298.8 L741,299.9 L740,300.8 L739,301.3 L738,305.8 L737,300.4 L736,298.9 L735,297.0 L734,297.9 L733,299.8 L732,299.2 L731,296.7 L730,297.5 L729,299.6 L728,303.3 L727,309.2 L726,299.6 L725,297.7 L724,297.6 L723,298.0 L722,296.9 L721,297.6 L720,295.9 L719,303.7 L718,309.8 L717,297.7 L716,298.7 L715,297.0 L714,297.6 L713,299.5 L712,297.0 L711,299.2 L710,299.4 L709,301.6 L708,306.3 L707,299.9 L706,298.3 L705,300.2 L704,300.0 L703,297.2 L702,297.2 L701,297.9 L700,297.3 L699,302.5 L698,307.9 L697,299.7 L696,297.6 L695,298.9 L694,299.0 L693,297.8 L692,299.6 L691,296.3 L690,296.8 L689,297.6 L688,298.1 L687,302.5 L686,307.9 L685,297.7 L684,297.1 L683,298.7 L682,300.7 L681,299.3 L680,297.3 L679,299.6 L678,301.7 L677,299.5 L676,300.5 L675,297.3 L674,301.8 L673,306.7 L672,301.2 L671,299.0 L670,300.4 L669,298.6 L668,299.2 L667,303.6 L666,309.7 L665,297.5 L664,298.4 L663,300.2 L662,301.3 L661,305.8 L660,300.0 L659,297.4 L658,298.2 L657,298.8 L656,298.2 L655,298.6 L654,298.2 L653,298.7 L652,302.9 L651,308.5 L650,295.6 L649,296.2 L648,295.9 L647,295.8 L646,296.7 L645,295.6 L644,302.7 L643,308.2 L642,297.7 L641,298.1 L640,297.5 L639,295.9 L638,297.3 L637,296.9 L636,295.4 L635,295.8 L634,295.7 L633,296.6 L632,296.1 L631,295.8 L630,295.4 L629,295.8 L628,295.6 L627,295.6 L626,295.9 L625,295.6 L624,296.0ZM624,330.0 L625,330.3 L626,330.4 L627,330.8 L628,331.0 L629,330.7 L630,330.7 L631,329.8 L632,329.6 L633,329.6 L634,329.6 L635,329.3 L636,330.1 L637,329.7 L638,330.2 L639,328.4 L640,330.0 L641,328.7 L642,330.0 L643,317.8 L644,323.3 L645,329.3 L646,328.0 L647,329.8 L648,330.3 L649,327.9 L650,328.2 L651,317.5 L652,323.1 L653,326.4 L654,328.8 L655,328.6 L656,329.5 L657,329.1 L658,327.8 L659,329.0 L660,327.4 L661,320.2 L662,324.7 L663,326.8 L664,327.6 L665,327.7 L666,316.3 L667,322.4 L668,327.7 L669,329.4 L670,326.8 L671,324.8 L672,324.0 L673,319.3 L674,324.2 L675,327.5 L676,326.1 L677,325.7 L678,328.2 L679,328.5 L680,328.0 L681,327.1 L682,325.3 L683,326.2 L684,328.8 L685,325.8 L686,318.1 L687,323.5 L688,328.0 L689,327.5 L690,327.5 L691,325.7 L692,328.3 L693,327.1 L694,328.4 L695,326.5 L696,328.9 L697,328.6 L698,318.1 L699,323.5 L700,329.0 L701,328.0 L702,328.8 L703,328.8 L704,328.0 L705,325.8 L706,327.0 L707,325.6 L708,319.7 L709,324.4 L710,327.7 L711,328.9 L712,327.3 L713,326.1 L714,329.1 L715,329.2 L716,327.4 L717,328.3 L718,316.2 L719,322.3 L720,330.4 L721,328.4 L722,326.4 L723,325.7 L724,327.1 L725,329.4 L726,329.1 L727,316.8 L728,322.7 L729,326.9 L730,328.5 L731,327.9 L732,327.9 L733,327.3 L734,328.5 L735,326.2 L736,325.5 L737,328.2 L738,320.2 L739,324.7 L740,327.9 L741,325.6 L742,326.6 L743,326.1 L744,325.8 L745,327.9 L746,328.3 L747,328.5 L748,326.5 L749,317.5 L750,323.1 L751,325.2 L752,326.5 L753,327.8 L754,327.2 L755,324.1 L756,320.3 L757,324.8 L758,323.5 L759,322.7 L760,323.4 L761,325.6 L762,325.3 L763,323.4 L764,323.4 L765,324.5 L766,326.2 L767,326.7 L768,318.1 L769,323.5 L770,328.3 L771,325.3 L772,323.2 L773,323.0 L774,322.4 L775,322.1 L776,324.2 L777,323.4 L778,325.6 L779,316.1 L780,322.3 L781,327.4 L782,323.8 L783,324.0 L784,325.0 L785,324.9 L786,327.7 L787,326.4 L788,325.0 L789,326.3 L790,315.9 L791,322.1 L792,327.5 L793,325.7 L794,328.0 L795,329.1 L796,328.3 L797,326.2 L798,316.5 L799,322.5 L800,324.2 L801,326.5 L802,329.0 L803,327.7 L804,327.5 L805,328.7 L806,326.9 L807,315.8 L808,322.1 L809,328.5 L810,326.0 L811,328.9 L812,328.6 L813,328.8 L814,329.2 L815,328.5 L816,329.1 L817,326.6 L818,327.4 L819,320.0 L820,324.6 L821,328.3 L822,327.7 L823,326.6 L824,328.4 L825,319.4 L826,324.2 L827,326.4 L828,328.4 L829,328.0 L830,327.1 L831,328.0 L832,327.4 L833,327.1 L834,325.9 L835,327.0 L836,326.9 L837,328.1 L838,318.3 L839,323.6 L840,327.9 L841,328.3 L842,328.6 L843,329.4 L844,329.3 L845,327.9 L846,328.6 L847,329.7 L848,319.0 L849,324.0 L850,325.5 L851,326.1 L852,327.2 L853,325.3 L854,324.4 L855,326.8 L856,328.6 L857,318.6 L858,323.7 L859,325.4 L860,324.6 L861,326.2 L862,325.7 L863,327.3 L864,327.1 L865,317.6 L866,323.1 L867,327.0 L868,324.6 L869,327.3 L870,328.1 L871,328.0 L872,323.9 L873,325.0 L874,328.1 L875,316.0 L876,322.2 L877,322.9 L878,325.5 L879,324.2 L880,326.3 L881,328.0 L882,324.3 L883,323.2 L884,326.5 L885,323.7 L886,315.9 L887,322.1 L888,329.2 L889,328.9 L890,328.8 L891,325.6 L892,327.0 L893,328.0 L894,328.5 L895,327.9 L896,324.7 L897,325.0 L898,315.5 L899,321.9 L900,325.9 L901,326.5 L902,326.3 L903,325.7 L904,324.7 L905,325.9 L906,325.8 L907,326.6 L908,326.1 L909,319.7 L910,324.4 L911,327.1 L912,326.1 L913,327.8 L914,325.6 L915,326.7 L916,325.6 L917,326.0 L918,325.1 L919,325.9 L920,327.3 L921,315.7 L922,322.0 L923,326.6 L924,326.1 L925,328.6 L926,329.7 L927,330.0 L928,330.1 L929,330.3 L930,330.5 L931,329.8 L932,330.0 L933,328.0 L934,317.7 L935,323.2 L936,325.7 L937,326.3 L938,325.8 L939,328.9 L940,329.2 L941,326.8 L942,327.6 L943,328.8 L944,327.2 L945,319.4 L946,324.3 L947,328.4 L948,328.9 L949,329.7 L950,327.9 L951,325.8 L952,324.9 L953,325.4 L954,324.8 L955,327.0 L956,328.0 L957,317.6 L958,323.2 L959,325.9 L960,328.8 L961,328.8 L962,327.6 L963,325.9 L964,320.2 L965,324.7 L966,326.7 L967,327.1 L968,324.8 L969,323.2 L970,325.3 L971,327.5 L972,325.9 L973,325.8 L974,326.7 L975,327.7 L976,315.6 L977,321.9 L978,327.9 L979,326.3 L980,323.4 L981,316.5 L982,322.5 L983,326.4 L984,328.3 L985,325.2 L986,324.7 L987,327.3 L988,325.9 L989,319.7 L990,324.4 L991,326.2 L992,327.0 L993,327.0 L994,323.3 L995,325.9 L996,316.7 L997,322.6 L998,327.8 L999,327.1 L1000,328.0 L1001,327.7 L1002,327.3 L1003,327.3 L1004,324.2 L1005,326.6 L1006,327.3 L1007,325.8 L1008,320.3 L1009,324.8 L1010,325.7 L1011,328.4 L1012,326.4 L1013,328.5 L1014,328.6 L1015,326.0 L1016,324.3 L1017,325.2 L1018,320.3 L1019,324.8 L1020,328.3 L1021,326.1 L1022,328.0 L1023,328.9 L1024,327.4 L1025,326.9 L1026,327.0 L1027,327.5 L1028,325.8 L1029,318.8 L1030,323.9 L1031,327.5 L1032,327.8 L1033,328.4 L1034,327.3 L1035,326.8 L1036,328.5 L1037,328.0 L1038,327.2 L1039,327.7 L1040,327.3 L1041,315.6 L1042,322.0 L1043,328.2 L1044,328.7 L1045,329.9 L1046,327.2 L1047,326.6 L1048,327.9 L1049,326.2 L1050,315.5 L1051,321.9 L1052,326.7 L1053,327.7 L1054,328.4 L1055,328.8 L1056,328.4 L1057,320.1 L1058,324.7 L1059,329.9 L1060,329.1 L1061,329.4 L1062,329.6 L1063,326.6 L1064,327.5 L1065,327.2 L1066,326.6 L1067,320.3 L1068,324.8 L1069,328.4 L1070,325.5 L1071,324.2 L1072,323.6 L1073,318.5 L1074,323.7 L1075,328.1 L1076,324.8 L1077,324.3 L1078,325.2 L1079,324.2 L1080,326.7 L1081,326.1 L1082,323.7 L1083,319.7 L1084,324.4 L1085,327.6 L1086,324.5 L1087,323.4 L1088,316.2 L1089,322.3 L1090,328.4 L1091,326.7 L1092,326.9 L1093,326.7 L1094,328.5 L1095,315.7 L1096,322.0 L1097,325.1 L1098,323.4 L1099,322.6 L1100,324.3 L1101,325.0 L1102,323.5 L1103,325.7 L1104,323.5 L1105,327.7 L1106,324.9 L1107,325.4 L1108,318.6 L1109,323.0 L1110,326.5 L1111,326.8 L1112,324.8 L1113,324.4 L1114,325.5 L1115,324.6 L1116,324.9 L1117,317.9 L1118,323.3 L1119,326.7 L1120,327.7 L1121,329.1 L1122,329.4 L1123,329.9 L1124,325.8 L1125,328.2 L1126,327.1 L1127,317.5 L1128,323.1 L1129,326.6 L1130,328.5 L1131,326.5 L1132,325.7 L1133,325.0 L1134,327.8 L1135,328.1 L1136,327.2 L1137,317.4 L1138,323.0 L1139,327.0 L1140,326.6 L1141,326.3 L1142,326.4 L1143,328.2 L1144,327.1 L1145,327.9 L1146,329.1 L1147,330.1 L1148,328.3 L1149,328.6 L1150,318.0 L1151,323.4 L1152,328.5 L1153,328.8 L1154,328.0 L1155,327.8 L1156,327.7 L1157,326.0 L1158,316.9 L1159,322.7 L1160,326.3 L1161,327.9 L1162,326.0 L1163,328.8 L1164,328.7 L1165,319.0 L1166,324.0 L1167,326.1 L1168,328.1 L1169,329.2 L1170,325.8 L1171,328.6 L1172,329.0 L1173,328.0 L1174,325.8 L1175,325.6 L1176,324.0 L1177,324.4 L1178,317.9 L1179,323.3 L1180,326.7 L1181,328.8 L1182,324.8 L1183,323.8 L1184,324.5 L1185,325.7 L1186,327.6 L1187,320.4 L1188,324.9 L1189,329.4 L1190,327.2 L1191,324.1 L1192,322.7 L1193,324.6 L1194,324.4 L1195,317.6 L1196,323.2 L1197,323.9 L1198,322.2 L1199,322.4 L1200,317.4 L1201,323.1 L1202,327.2 L1203,326.3 L1204,326.2 L1205,327.9 L1206,328.2 L1207,327.1 L1208,328.1 L1209,325.9 L1210,320.2 L1211,323.4 L1212,323.9 L1213,325.1 L1214,326.0 L1215,326.6 L1216,327.9 L1217,324.2 L1218,323.2 L1219,324.4 L1220,318.2 L1221,323.5 L1222,326.6 L1223,328.2 L1224,328.0 L1225,326.7 L1226,328.3 L1227,328.6 L1228,326.3 L1229,326.7 L1230,325.1 L1231,318.7 L1232,323.8 L1233,325.9 L1234,326.3 L1235,326.1 L1236,326.7 L1237,328.6 L1238,325.9 L1239,327.0 L1240,325.7 L1241,328.3 L1242,316.8 L1243,322.7 L1244,328.8 L1245,326.8 L1246,328.3 L1247,320.2 L1248,324.7 L1249,329.4 L1250,326.8 L1251,326.2 L1252,326.7 L1253,327.8 L1254,329.6 L1255,319.2 L1256,328.5 L1257,328.2 L1258,315.7 L1259,322.0 L1260,329.8 L1261,330.7 L1262,330.1 L1263,331.0 L1264,330.3 L1265,331.0 L1266,330.9 L1267,331.0 L1268,330.7 L1269,330.0 L1270,330.1 L1271,330.5 L1272,331.0 L1273,331.0 L1274,330.8 L1275,330.1 L1276,329.9 L1277,331.0 L1278,330.7 L1279,328.6 L1280,331.0 L1281,331.0 L1282,330.8 L1283,329.7 L1284,330.8 L1285,330.0 L1286,331.0 L1287,330.1 L1288,330.9 L1289,330.1 L1290,329.8 L1291,329.6 L1292,330.4 L1293,329.3 L1294,330.4 L1295,329.3 L1296,329.4 L1297,329.2 L1298,331.0 L1299,330.7 L1300,329.8 L1301,329.4 L1302,330.7 L1303,329.6 L1304,330.2 L1305,331.0 L1306,328.9 L1307,331.0 L1308,330.7 L1309,329.2 L1310,329.8 L1311,329.4 L1312,329.3 L1313,330.4 L1314,329.8 L1315,329.8 L1316,329.8 L1317,331.0 L1318,329.4 L1319,330.9 L1320,330.3 L1321,329.8 L1322,329.7 L1323,329.6 L1324,330.6 L1325,330.7 L1326,328.9 L1327,331.0 L1328,329.6 L1329,330.7 L1330,330.5 L1331,330.7 L1332,330.0 L1333,331.0 L1334,331.0 L1335,331.0 L1336,331.0 L1337,330.2 L1338,329.7 L1339,331.0 L1340,330.6 L1341,330.7 L1342,330.8 L1343,330.8 L1344,331.0 L1345,330.7 L1346,330.9 L1347,328.3 L1348,331.0 L1349,330.0 L1350,330.3 L1351,330.0 L1352,330.2 L1353,330.3 L1354,331.0 L1355,331.0 L1356,330.1 L1357,330.4 L1358,330.4 L1359,331.0 L1360,330.3 L1361,330.6 L1362,331.0 L1363,331.0 L1364,330.1 L1365,330.5 L1366,328.7 L1367,331.0 L1368,330.4 L1369,330.9 L1370,330.7 L1371,331.0 L1372,331.0 L1373,330.6 L1374,330.7 L1375,331.0 L1376,331.0 L1377,330.7 L1378,331.0 L1379,331.0 L1380,330.6 L1381,331.0 L1382,330.2 L1383,330.1 L1384,330.2 L1385,329.8 L1386,331.0 L1387,330.6 L1388,330.6 L1389,331.0 L1390,329.8 L1391,331.0 L1392,329.5 L1393,330.0 L1394,329.5 L1395,331.0 L1396,329.6 L1397,329.4 L1398,329.7 L1399,329.4 L1400,330.0 L1401,330.3 L1402,329.5 L1403,330.1 L1404,330.1 L1405,330.4 L1406,329.9 L1407,330.0 L1408,329.3 L1409,329.6 L1410,330.5 L1411,329.7 L1412,330.7 L1413,330.2 L1414,330.1 L1415,329.7 L1416,331.0 L1417,330.9 L1418,330.8 L1419,329.9 L1420,330.8 L1421,330.0 L1422,329.4 L1423,330.3 L1424,330.8 L1425,330.0 L1426,328.0 L1427,330.3 L1428,330.9 L1429,329.9 L1430,330.5 L1431,329.3 L1432,330.3 L1433,329.9 L1434,329.5 L1435,329.4 L1436,331.0 L1437,329.6 L1438,331.0 L1439,329.6 L1440,329.9 L1441,330.8 L1442,330.1 L1443,330.3 L1444,330.5 L1445,329.1 L1446,330.6 L1447,330.3 L1448,330.2 L1449,331.0 L1450,330.3 L1451,330.3 L1452,330.0 L1453,330.5 L1454,330.5 L1455,331.0 L1456,331.0 L1457,330.1 L1458,331.0 L1459,330.1 L1460,331.0 L1461,330.8 L1462,330.5 L1463,331.0 L1464,330.7 L1465,330.3 L1466,330.8 L1467,331.0 L1468,331.0 L1469,330.1 L1470,331.0 L1471,330.5 L1472,330.5 L1473,331.0 L1474,330.6 L1475,330.4 L1476,331.0 L1477,331.0 L1478,330.1 L1479,329.0 L1480,330.6 L1481,330.7 L1482,330.2 L1483,330.1 L1484,330.2 L1485,330.4 L1486,330.5 L1487,331.0 L1488,330.4 L1489,330.6 L1490,330.1 L1491,330.7 L1492,331.0 L1493,330.6 L1494,328.6 L1495,330.4 L1496,330.1 L1497,331.0 L1498,330.9 L1499,330.8 L1500,330.4 L1501,331.0 L1502,329.5 L1503,330.6 L1504,331.0 L1505,330.8 L1506,330.3 L1507,330.0 L1508,329.6 L1509,331.0 L1510,329.3 L1511,329.5 L1512,330.2 L1513,329.9 L1514,330.6 L1515,330.9 L1516,331.0 L1517,329.2 L1518,329.3 L1519,330.3 L1520,329.9 L1521,330.2 L1522,329.8 L1523,331.0 L1524,329.3 L1525,330.8 L1526,330.0 L1527,329.9 L1528,329.4 L1529,329.9 L1530,330.8 L1531,329.5 L1532,330.5 L1533,330.1 L1534,329.6 L1535,329.3 L1536,331.0 L1537,330.3 L1538,330.6 L1539,329.6 L1540,330.5 L1541,329.5 L1542,329.8 L1543,328.8 L1544,329.9 L1545,330.0 L1546,331.0 L1547,330.7 L1548,331.0 L1549,329.9 L1550,330.6 L1551,330.8 L1552,330.1 L1553,329.7 L1554,331.0 L1555,330.2 L1556,330.9 L1557,330.1 L1558,330.2 L1559,330.2 L1560,330.5 L1561,331.0 L1562,330.1 L1563,331.0 L1564,330.5 L1565,330.0 L1566,331.0 L1567,330.7 L1568,330.4 L1569,330.5 L1570,330.9 L1571,330.8 L1572,330.2 L1573,330.4 L1574,331.0 L1575,330.5 L1576,330.2 L1577,330.6 L1578,328.6 L1579,331.0 L1580,330.9 L1581,330.2 L1582,331.0 L1583,331.0 L1584,331.0 L1585,330.1 L1586,330.2 L1587,331.0 L1588,330.3 L1589,331.0 L1590,330.4 L1591,331.0 L1592,330.5 L1593,330.2 L1594,330.5 L1595,330.3 L1596,331.0 L1597,330.6 L1598,330.0 L1599,330.7 L1600,330.1 L1601,330.3 L1602,329.9 L1603,330.0 L1604,330.7 L1605,329.8 L1606,329.8 L1607,330.5 L1608,329.9 L1609,330.5 L1610,330.2 L1611,330.6 L1612,330.3 L1613,329.2 L1614,329.5 L1615,330.0 L1616,330.0 L1617,330.2 L1618,330.3 L1619,330.9 L1620,329.9 L1621,330.3 L1622,330.5 L1623,330.1 L1624,330.9 L1625,329.8 L1626,329.6 L1627,330.4 L1628,330.9 L1629,329.2 L1630,329.9 L1631,330.5 L1632,331.0 L1633,328.2 L1634,330.7 L1635,329.3 L1636,329.7 L1637,330.6 L1638,330.4 L1639,331.0 L1640,330.8 L1641,330.1 L1642,329.5 L1643,330.4 L1644,329.3 L1645,330.7 L1646,331.0 L1647,329.6 L1648,330.5 L1649,330.7 L1650,330.4 L1651,330.1 L1652,330.4 L1653,330.8 L1654,329.4 L1655,329.2 L1656,329.5 L1657,330.7 L1658,328.8 L1659,330.0 L1660,329.7 L1661,328.8 L1662,330.8 L1663,329.9 L1664,330.1 L1665,329.6 L1666,330.6 L1667,330.6 L1668,330.6 L1669,326.7 L1670,330.5 L1671,329.1 L1672,329.2 L1673,329.6 L1674,330.3 L1675,329.4 L1676,330.0 L1677,329.5 L1678,329.2 L1679,330.9 L1680,329.6 L1681,329.3 L1682,330.3 L1683,330.5 L1684,331.0 L1685,328.0 L1686,330.8 L1687,331.0 L1688,331.0 L1689,330.1 L1690,329.7 L1691,329.2 L1692,329.7 L1693,331.0 L1694,329.1 L1695,329.2 L1696,329.3 L1697,329.1 L1698,329.2 L1699,329.5 L1700,329.3 L1701,331.0 L1702,328.6 L1703,331.0 L1704,330.0 L1705,329.6 L1706,329.8 L1707,330.2 L1708,329.7 L1709,330.2 L1710,327.7 L1711,331.0 L1712,330.1 L1713,329.1 L1714,329.7 L1715,331.0 L1716,329.6 L1717,328.2 L1718,329.4 L1719,328.7 L1720,329.8 L1721,327.8 L1722,329.3 L1723,328.3 L1724,328.9 L1725,328.3 L1726,329.7 L1727,327.8 L1728,327.6 L1729,327.9 L1730,327.9 L1731,329.7 L1732,329.8 L1733,327.9 L1734,328.1 L1735,328.9 L1736,329.0 L1737,331.0 L1738,329.0 L1739,330.8 L1740,329.2 L1741,330.2 L1742,328.9 L1743,330.5 L1744,325.1 L1745,328.4 L1746,329.1 L1747,330.6 L1748,327.8 L1749,331.0 L1750,329.7 L1751,328.7 L1752,329.2 L1753,329.0 L1754,328.2 L1755,330.8 L1756,329.5 L1757,330.3 L1758,329.3 L1759,327.4 L1760,329.3 L1761,328.8 L1762,329.7 L1763,329.9 L1764,329.6 L1765,330.7 L1766,328.7 L1767,330.1 L1768,329.8 L1769,329.0 L1770,329.1 L1771,328.7 L1772,329.4 L1773,329.9 L1774,330.1 L1775,329.4 L1776,329.7 L1777,331.0 L1778,329.9 L1779,329.7 L1780,330.4 L1781,329.4 L1782,329.6 L1783,329.3 L1784,330.6 L1785,329.8 L1786,330.0 L1787,330.5 L1788,330.6 L1789,331.0 L1790,329.4 L1791,330.6 L1792,330.5 L1793,325.9 L1794,330.0 L1795,330.1 L1796,329.3 L1797,331.0 L1798,330.4 L1799,329.3 L1800,329.4 L1801,331.0 L1802,330.1 L1803,328.9 L1804,328.9 L1805,330.4 L1806,329.4 L1807,330.3 L1808,331.0 L1809,328.9 L1810,330.8 L1811,328.5 L1812,329.9 L1813,328.8 L1814,329.8 L1815,328.6 L1816,329.0 L1817,330.6 L1818,331.0 L1819,330.6 L1820,329.3 L1821,330.7 L1822,330.8 L1823,329.9 L1824,330.9 L1825,330.1 L1826,329.0 L1827,327.1 L1828,328.5 L1829,330.2 L1830,329.8 L1831,329.7 L1832,328.2 L1833,330.9 L1834,328.2 L1835,330.7 L1836,327.7 L1837,329.1 L1838,328.4 L1839,329.2 L1840,327.3 L1841,328.6 L1842,330.5 L1843,330.3 L1844,327.8 L1845,330.2 L1846,330.2 L1847,330.8 L1848,328.5 L1849,328.3 L1850,330.9 L1851,328.1 L1852,330.6 L1853,329.3 L1854,329.3 L1855,330.2 L1856,330.0 L1857,329.4 L1858,328.5 L1859,330.2 L1860,330.3 L1861,328.0 L1862,330.2 L1863,330.7 L1864,328.3 L1865,328.3 L1866,330.5 L1867,329.6 L1868,328.6 L1869,330.2 L1870,330.2 L1871,331.0 L1872,330.8 L1873,327.4 L1874,329.8 L1875,328.9 L1876,330.0 L1877,330.5 L1878,330.2 L1879,330.8 L1880,330.0 L1881,329.5 L1882,330.7 L1883,329.8 L1884,328.9 L1885,329.6 L1886,330.5 L1886,332.5 L1885,333.4 L1884,334.1 L1883,333.2 L1882,332.3 L1881,333.5 L1880,333.0 L1879,332.2 L1878,332.8 L1877,332.5 L1876,333.0 L1875,334.1 L1874,333.2 L1873,335.6 L1872,332.2 L1871,332.0 L1870,332.8 L1869,332.8 L1868,334.4 L1867,333.4 L1866,332.5 L1865,334.7 L1864,334.7 L1863,332.3 L1862,332.8 L1861,335.0 L1860,332.7 L1859,332.8 L1858,334.5 L1857,333.6 L1856,333.0 L1855,332.8 L1854,333.7 L1853,333.7 L1852,332.4 L1851,334.9 L1850,332.1 L1849,334.7 L1848,334.5 L1847,332.2 L1846,332.8 L1845,332.8 L1844,335.2 L1843,332.7 L1842,332.5 L1841,334.4 L1840,335.7 L1839,333.8 L1838,334.6 L1837,333.9 L1836,335.3 L1835,332.3 L1834,334.8 L1833,332.1 L1832,334.8 L1831,333.3 L1830,333.2 L1829,332.8 L1828,334.5 L1827,335.9 L1826,334.0 L1825,332.9 L1824,332.1 L1823,333.1 L1822,332.2 L1821,332.3 L1820,333.7 L1819,332.4 L1818,332.0 L1817,332.4 L1816,334.0 L1815,334.4 L1814,333.2 L1813,334.2 L1812,333.1 L1811,334.5 L1810,332.2 L1809,334.1 L1808,332.0 L1807,332.7 L1806,333.6 L1805,332.6 L1804,334.1 L1803,334.1 L1802,332.9 L1801,332.0 L1800,333.6 L1799,333.7 L1798,332.6 L1797,332.0 L1796,333.7 L1795,332.9 L1794,333.0 L1793,337.1 L1792,332.5 L1791,332.4 L1790,333.6 L1789,332.0 L1788,332.4 L1787,332.5 L1786,333.0 L1785,333.2 L1784,332.4 L1783,333.7 L1782,333.4 L1781,333.6 L1780,332.6 L1779,333.3 L1778,333.1 L1777,332.0 L1776,333.3 L1775,333.6 L1774,332.9 L1773,333.1 L1772,333.6 L1771,334.3 L1770,333.9 L1769,334.0 L1768,333.2 L1767,332.9 L1766,334.3 L1765,332.3 L1764,333.4 L1763,333.1 L1762,333.3 L1761,334.2 L1760,333.7 L1759,335.6 L1758,333.7 L1757,332.7 L1756,333.5 L1755,332.2 L1754,334.8 L1753,334.0 L1752,333.8 L1751,334.3 L1750,333.3 L1749,332.0 L1748,335.2 L1747,332.4 L1746,333.9 L1745,334.6 L1744,337.9 L1743,332.5 L1742,334.1 L1741,332.8 L1740,333.8 L1739,332.2 L1738,334.0 L1737,332.0 L1736,334.0 L1735,334.1 L1734,334.9 L1733,335.1 L1732,333.2 L1731,333.3 L1730,335.1 L1729,335.1 L1728,335.4 L1727,335.2 L1726,333.3 L1725,334.7 L1724,334.1 L1723,334.7 L1722,333.7 L1721,335.2 L1720,333.2 L1719,334.3 L1718,333.6 L1717,334.8 L1716,333.4 L1715,332.0 L1714,333.3 L1713,333.9 L1712,332.9 L1711,332.0 L1710,335.3 L1709,332.8 L1708,333.3 L1707,332.8 L1706,333.2 L1705,333.4 L1704,333.0 L1703,332.0 L1702,334.4 L1701,332.0 L1700,333.7 L1699,333.5 L1698,333.8 L1697,333.9 L1696,333.7 L1695,333.8 L1694,333.9 L1693,332.0 L1692,333.3 L1691,333.8 L1690,333.3 L1689,332.9 L1688,332.0 L1687,332.0 L1686,332.2 L1685,335.0 L1684,332.0 L1683,332.5 L1682,332.7 L1681,333.7 L1680,333.4 L1679,332.1 L1678,333.8 L1677,333.5 L1676,333.0 L1675,333.6 L1674,332.7 L1673,333.4 L1672,333.8 L1671,333.9 L1670,332.5 L1669,336.3 L1668,332.4 L1667,332.4 L1666,332.4 L1665,333.4 L1664,332.9 L1663,333.1 L1662,332.2 L1661,334.2 L1660,333.3 L1659,333.0 L1658,334.2 L1657,332.3 L1656,333.5 L1655,333.8 L1654,333.6 L1653,332.2 L1652,332.6 L1651,332.9 L1650,332.6 L1649,332.3 L1648,332.5 L1647,333.4 L1646,332.0 L1645,332.3 L1644,333.7 L1643,332.6 L1642,333.5 L1641,332.9 L1640,332.2 L1639,332.0 L1638,332.6 L1637,332.4 L1636,333.3 L1635,333.7 L1634,332.3 L1633,334.8 L1632,332.0 L1631,332.5 L1630,333.1 L1629,333.8 L1628,332.1 L1627,332.6 L1626,333.4 L1625,333.2 L1624,332.1 L1623,332.9 L1622,332.5 L1621,332.7 L1620,333.1 L1619,332.1 L1618,332.7 L1617,332.8 L1616,333.0 L1615,333.0 L1614,333.5 L1613,333.8 L1612,332.7 L1611,332.4 L1610,332.8 L1609,332.5 L1608,333.1 L1607,332.5 L1606,333.2 L1605,333.2 L1604,332.3 L1603,333.0 L1602,333.1 L1601,332.7 L1600,332.9 L1599,332.3 L1598,333.0 L1597,332.4 L1596,332.0 L1595,332.7 L1594,332.5 L1593,332.8 L1592,332.5 L1591,332.0 L1590,332.6 L1589,332.0 L1588,332.7 L1587,332.0 L1586,332.8 L1585,332.9 L1584,332.0 L1583,332.0 L1582,332.0 L1581,332.8 L1580,332.1 L1579,332.0 L1578,334.4 L1577,332.4 L1576,332.8 L1575,332.5 L1574,332.0 L1573,332.6 L1572,332.8 L1571,332.2 L1570,332.1 L1569,332.5 L1568,332.6 L1567,332.3 L1566,332.0 L1565,333.0 L1564,332.5 L1563,332.0 L1562,332.9 L1561,332.0 L1560,332.5 L1559,332.8 L1558,332.8 L1557,332.9 L1556,332.1 L1555,332.8 L1554,332.0 L1553,333.3 L1552,332.9 L1551,332.2 L1550,332.4 L1549,333.1 L1548,332.0 L1547,332.3 L1546,332.0 L1545,333.0 L1544,333.1 L1543,334.2 L1542,333.2 L1541,333.5 L1540,332.5 L1539,333.4 L1538,332.4 L1537,332.7 L1536,332.0 L1535,333.7 L1534,333.4 L1533,332.9 L1532,332.5 L1531,333.5 L1530,332.2 L1529,333.1 L1528,333.6 L1527,333.1 L1526,333.0 L1525,332.2 L1524,333.7 L1523,332.0 L1522,333.2 L1521,332.8 L1520,333.1 L1519,332.7 L1518,333.7 L1517,333.8 L1516,332.0 L1515,332.1 L1514,332.4 L1513,333.1 L1512,332.8 L1511,333.5 L1510,333.7 L1509,332.0 L1508,333.4 L1507,333.0 L1506,332.7 L1505,332.2 L1504,332.0 L1503,332.4 L1502,333.5 L1501,332.0 L1500,332.6 L1499,332.2 L1498,332.1 L1497,332.0 L1496,332.9 L1495,332.6 L1494,334.4 L1493,332.4 L1492,332.0 L1491,332.3 L1490,332.9 L1489,332.4 L1488,332.6 L1487,332.0 L1486,332.5 L1485,332.6 L1484,332.8 L1483,332.9 L1482,332.8 L1481,332.3 L1480,332.4 L1479,334.0 L1478,332.9 L1477,332.0 L1476,332.0 L1475,332.6 L1474,332.4 L1473,332.0 L1472,332.5 L1471,332.5 L1470,332.0 L1469,332.9 L1468,332.0 L1467,332.0 L1466,332.2 L1465,332.7 L1464,332.3 L1463,332.0 L1462,332.5 L1461,332.2 L1460,332.0 L1459,332.9 L1458,332.0 L1457,332.9 L1456,332.0 L1455,332.0 L1454,332.5 L1453,332.5 L1452,333.0 L1451,332.7 L1450,332.7 L1449,332.0 L1448,332.8 L1447,332.7 L1446,332.4 L1445,333.9 L1444,332.5 L1443,332.7 L1442,332.9 L1441,332.2 L1440,333.1 L1439,333.4 L1438,332.0 L1437,333.4 L1436,332.0 L1435,333.6 L1434,333.5 L1433,333.1 L1432,332.7 L1431,333.7 L1430,332.5 L1429,333.1 L1428,332.1 L1427,332.7 L1426,335.0 L1425,333.0 L1424,332.2 L1423,332.7 L1422,333.6 L1421,333.0 L1420,332.2 L1419,333.1 L1418,332.2 L1417,332.1 L1416,332.0 L1415,333.3 L1414,332.9 L1413,332.8 L1412,332.3 L1411,333.3 L1410,332.5 L1409,333.4 L1408,333.7 L1407,333.0 L1406,333.1 L1405,332.6 L1404,332.9 L1403,332.9 L1402,333.5 L1401,332.7 L1400,333.0 L1399,333.6 L1398,333.3 L1397,333.6 L1396,333.4 L1395,332.0 L1394,333.5 L1393,333.0 L1392,333.5 L1391,332.0 L1390,333.2 L1389,332.0 L1388,332.4 L1387,332.4 L1386,332.0 L1385,333.2 L1384,332.8 L1383,332.9 L1382,332.8 L1381,332.0 L1380,332.4 L1379,332.0 L1378,332.0 L1377,332.3 L1376,332.0 L1375,332.0 L1374,332.3 L1373,332.4 L1372,332.0 L1371,332.0 L1370,332.3 L1369,332.1 L1368,332.6 L1367,332.0 L1366,334.3 L1365,332.5 L1364,332.9 L1363,332.0 L1362,332.0 L1361,332.4 L1360,332.7 L1359,332.0 L1358,332.6 L1357,332.6 L1356,332.9 L1355,332.0 L1354,332.0 L1353,332.7 L1352,332.8 L1351,333.0 L1350,332.7 L1349,333.0 L1348,332.0 L1347,334.7 L1346,332.1 L1345,332.3 L1344,332.0 L1343,332.2 L1342,332.2 L1341,332.3 L1340,332.4 L1339,332.0 L1338,333.3 L1337,332.8 L1336,332.0 L1335,332.0 L1334,332.0 L1333,332.0 L1332,333.0 L1331,332.3 L1330,332.5 L1329,332.3 L1328,333.4 L1327,332.0 L1326,334.1 L1325,332.3 L1324,332.4 L1323,333.4 L1322,333.3 L1321,333.2 L1320,332.7 L1319,332.1 L1318,333.6 L1317,332.0 L1316,333.2 L1315,333.2 L1314,333.2 L1313,332.6 L1312,333.7 L1311,333.6 L1310,333.2 L1309,333.8 L1308,332.3 L1307,332.0 L1306,334.1 L1305,332.0 L1304,332.8 L1303,333.4 L1302,332.3 L1301,333.6 L1300,333.2 L1299,332.3 L1298,332.0 L1297,333.8 L1296,333.6 L1295,333.7 L1294,332.6 L1293,333.7 L1292,332.6 L1291,333.4 L1290,333.2 L1289,332.9 L1288,332.1 L1287,332.9 L1286,332.0 L1285,333.0 L1284,332.2 L1283,333.3 L1282,332.2 L1281,332.0 L1280,332.0 L1279,334.4 L1278,332.3 L1277,332.0 L1276,333.1 L1275,332.9 L1274,332.2 L1273,332.0 L1272,332.0 L1271,332.5 L1270,332.9 L1269,333.0 L1268,332.3 L1267,332.0 L1266,332.1 L1265,332.0 L1264,332.7 L1263,332.0 L1262,332.9 L1261,332.3 L1260,333.2 L1259,341.0 L1258,347.3 L1257,334.8 L1256,334.5 L1255,343.8 L1254,333.4 L1253,335.2 L1252,336.3 L1251,336.8 L1250,336.2 L1249,333.6 L1248,338.3 L1247,342.8 L1246,334.7 L1245,336.2 L1244,334.2 L1243,340.3 L1242,346.2 L1241,334.7 L1240,337.3 L1239,336.0 L1238,337.1 L1237,334.4 L1236,336.3 L1235,336.9 L1234,336.7 L1233,337.1 L1232,339.2 L1231,344.3 L1230,337.9 L1229,336.3 L1228,336.7 L1227,334.4 L1226,334.7 L1225,336.3 L1224,335.0 L1223,334.8 L1222,336.4 L1221,339.5 L1220,344.8 L1219,338.6 L1218,339.8 L1217,338.8 L1216,335.1 L1215,336.4 L1214,337.0 L1213,337.9 L1212,339.1 L1211,339.6 L1210,342.8 L1209,337.1 L1208,334.9 L1207,335.9 L1206,334.8 L1205,335.1 L1204,336.8 L1203,336.7 L1202,335.8 L1201,339.9 L1200,345.6 L1199,340.6 L1198,340.8 L1197,339.1 L1196,339.8 L1195,345.4 L1194,338.6 L1193,338.4 L1192,340.3 L1191,338.9 L1190,335.8 L1189,333.6 L1188,338.1 L1187,342.6 L1186,335.4 L1185,337.3 L1184,338.5 L1183,339.2 L1182,338.2 L1181,334.2 L1180,336.3 L1179,339.7 L1178,345.1 L1177,338.6 L1176,339.0 L1175,337.4 L1174,337.2 L1173,335.0 L1172,334.0 L1171,334.4 L1170,337.2 L1169,333.8 L1168,334.9 L1167,336.9 L1166,339.0 L1165,344.0 L1164,334.3 L1163,334.2 L1162,337.0 L1161,335.1 L1160,336.7 L1159,340.3 L1158,346.1 L1157,337.0 L1156,335.3 L1155,335.2 L1154,335.0 L1153,334.2 L1152,334.5 L1151,339.6 L1150,345.0 L1149,334.4 L1148,334.7 L1147,332.9 L1146,333.9 L1145,335.1 L1144,335.9 L1143,334.8 L1142,336.6 L1141,336.7 L1140,336.4 L1139,336.0 L1138,340.0 L1137,345.6 L1136,335.8 L1135,334.9 L1134,335.2 L1133,338.0 L1132,337.3 L1131,336.5 L1130,334.5 L1129,336.4 L1128,339.9 L1127,345.5 L1126,335.9 L1125,334.8 L1124,337.2 L1123,333.1 L1122,333.6 L1121,333.9 L1120,335.3 L1119,336.3 L1118,339.7 L1117,345.1 L1116,338.1 L1115,338.4 L1114,337.5 L1113,338.6 L1112,338.2 L1111,336.2 L1110,336.5 L1109,340.0 L1108,344.4 L1107,337.6 L1106,338.1 L1105,335.3 L1104,339.5 L1103,337.3 L1102,339.5 L1101,338.0 L1100,338.7 L1099,340.4 L1098,339.6 L1097,337.9 L1096,341.0 L1095,347.3 L1094,334.5 L1093,336.3 L1092,336.1 L1091,336.3 L1090,334.6 L1089,340.7 L1088,346.8 L1087,339.6 L1086,338.5 L1085,335.4 L1084,338.6 L1083,343.3 L1082,339.3 L1081,336.9 L1080,336.3 L1079,338.8 L1078,337.8 L1077,338.7 L1076,338.2 L1075,334.9 L1074,339.3 L1073,344.5 L1072,339.4 L1071,338.8 L1070,337.5 L1069,334.6 L1068,338.2 L1067,342.7 L1066,336.4 L1065,335.8 L1064,335.5 L1063,336.4 L1062,333.4 L1061,333.6 L1060,333.9 L1059,333.1 L1058,338.3 L1057,342.9 L1056,334.6 L1055,334.2 L1054,334.6 L1053,335.3 L1052,336.3 L1051,341.1 L1050,347.5 L1049,336.8 L1048,335.1 L1047,336.4 L1046,335.8 L1045,333.1 L1044,334.3 L1043,334.8 L1042,341.0 L1041,347.4 L1040,335.7 L1039,335.3 L1038,335.8 L1037,335.0 L1036,334.5 L1035,336.2 L1034,335.7 L1033,334.6 L1032,335.2 L1031,335.5 L1030,339.1 L1029,344.2 L1028,337.2 L1027,335.5 L1026,336.0 L1025,336.1 L1024,335.6 L1023,334.1 L1022,335.0 L1021,336.9 L1020,334.7 L1019,338.2 L1018,342.7 L1017,337.8 L1016,338.7 L1015,337.0 L1014,334.4 L1013,334.5 L1012,336.6 L1011,334.6 L1010,337.3 L1009,338.2 L1008,342.7 L1007,337.2 L1006,335.7 L1005,336.4 L1004,338.8 L1003,335.7 L1002,335.7 L1001,335.3 L1000,335.0 L999,335.9 L998,335.2 L997,340.4 L996,346.3 L995,337.1 L994,339.7 L993,336.0 L992,336.0 L991,336.8 L990,338.6 L989,343.3 L988,337.1 L987,335.7 L986,338.3 L985,337.8 L984,334.7 L983,336.6 L982,340.5 L981,346.5 L980,339.6 L979,336.7 L978,335.1 L977,341.1 L976,347.4 L975,335.3 L974,336.3 L973,337.2 L972,337.1 L971,335.5 L970,337.7 L969,339.8 L968,338.2 L967,335.9 L966,336.3 L965,338.3 L964,342.8 L963,337.1 L962,335.4 L961,334.2 L960,334.2 L959,337.1 L958,339.8 L957,345.4 L956,335.0 L955,336.0 L954,338.2 L953,337.6 L952,338.1 L951,337.2 L950,335.1 L949,333.3 L948,334.1 L947,334.6 L946,338.7 L945,343.6 L944,335.8 L943,334.2 L942,335.4 L941,336.2 L940,333.8 L939,334.1 L938,337.2 L937,336.7 L936,337.3 L935,339.8 L934,345.3 L933,335.0 L932,333.0 L931,333.2 L930,332.5 L929,332.7 L928,332.9 L927,333.0 L926,333.3 L925,334.4 L924,336.9 L923,336.4 L922,341.0 L921,347.3 L920,335.7 L919,337.1 L918,337.9 L917,337.0 L916,337.4 L915,336.3 L914,337.4 L913,335.2 L912,336.9 L911,335.9 L910,338.6 L909,343.3 L908,336.9 L907,336.4 L906,337.2 L905,337.1 L904,338.3 L903,337.3 L902,336.7 L901,336.5 L900,337.1 L899,341.1 L898,347.5 L897,338.0 L896,338.3 L895,335.1 L894,334.5 L893,335.0 L892,336.0 L891,337.4 L890,334.2 L889,334.1 L888,333.8 L887,340.9 L886,347.1 L885,339.3 L884,336.5 L883,339.8 L882,338.7 L881,335.0 L880,336.7 L879,338.8 L878,337.5 L877,340.1 L876,340.8 L875,347.0 L874,334.9 L873,338.0 L872,339.1 L871,335.0 L870,334.9 L869,335.7 L868,338.4 L867,336.0 L866,339.9 L865,345.4 L864,335.9 L863,335.7 L862,337.3 L861,336.8 L860,338.4 L859,337.6 L858,339.3 L857,344.4 L856,334.4 L855,336.2 L854,338.6 L853,337.7 L852,335.8 L851,336.9 L850,337.5 L849,339.0 L848,344.0 L847,333.3 L846,334.4 L845,335.1 L844,333.7 L843,333.6 L842,334.4 L841,334.7 L840,335.1 L839,339.4 L838,344.7 L837,334.9 L836,336.1 L835,336.0 L834,337.1 L833,335.9 L832,335.6 L831,335.0 L830,335.9 L829,335.0 L828,334.6 L827,336.6 L826,338.8 L825,343.6 L824,334.6 L823,336.4 L822,335.3 L821,334.7 L820,338.4 L819,343.0 L818,335.6 L817,336.4 L816,333.9 L815,334.5 L814,333.8 L813,334.2 L812,334.4 L811,334.1 L810,337.0 L809,334.5 L808,340.9 L807,347.2 L806,336.1 L805,334.3 L804,335.5 L803,335.3 L802,334.0 L801,336.5 L800,338.8 L799,340.5 L798,346.5 L797,336.8 L796,334.7 L795,333.9 L794,335.0 L793,337.3 L792,335.5 L791,340.9 L790,347.1 L789,336.7 L788,338.0 L787,336.6 L786,335.3 L785,338.1 L784,338.0 L783,339.0 L782,339.2 L781,335.6 L780,340.7 L779,346.9 L778,337.4 L777,339.6 L776,338.8 L775,340.9 L774,340.6 L773,340.0 L772,339.8 L771,337.7 L770,334.7 L769,339.5 L768,344.9 L767,336.3 L766,336.8 L765,338.5 L764,339.6 L763,339.6 L762,337.7 L761,337.4 L760,339.6 L759,340.3 L758,339.5 L757,338.2 L756,342.7 L755,338.9 L754,335.8 L753,335.2 L752,336.5 L751,337.8 L750,339.9 L749,345.5 L748,336.5 L747,334.5 L746,334.7 L745,335.1 L744,337.2 L743,336.9 L742,336.4 L741,337.4 L740,335.1 L739,338.3 L738,342.8 L737,334.8 L736,337.5 L735,336.8 L734,334.5 L733,335.7 L732,335.1 L731,335.1 L730,334.5 L729,336.1 L728,340.3 L727,346.2 L726,333.9 L725,333.6 L724,335.9 L723,337.3 L722,336.6 L721,334.6 L720,332.6 L719,340.7 L718,346.8 L717,334.7 L716,335.6 L715,333.8 L714,333.9 L713,336.9 L712,335.7 L711,334.1 L710,335.3 L709,338.6 L708,343.3 L707,337.4 L706,336.0 L705,337.2 L704,335.0 L703,334.2 L702,334.2 L701,335.0 L700,334.0 L699,339.5 L698,344.9 L697,334.4 L696,334.1 L695,336.5 L694,334.6 L693,335.9 L692,334.7 L691,337.3 L690,335.5 L689,335.5 L688,335.0 L687,339.5 L686,344.9 L685,337.2 L684,334.2 L683,336.8 L682,337.7 L681,335.9 L680,335.0 L679,334.5 L678,334.8 L677,337.3 L676,336.9 L675,335.5 L674,338.8 L673,343.7 L672,339.0 L671,338.2 L670,336.2 L669,333.6 L668,335.3 L667,340.6 L666,346.7 L665,335.3 L664,335.4 L663,336.2 L662,338.3 L661,342.8 L660,335.6 L659,334.0 L658,335.2 L657,333.9 L656,333.5 L655,334.4 L654,334.2 L653,336.6 L652,339.9 L651,345.5 L650,334.8 L649,335.1 L648,332.7 L647,333.2 L646,335.0 L645,333.7 L644,339.7 L643,345.2 L642,333.0 L641,334.3 L640,333.0 L639,334.6 L638,332.8 L637,333.3 L636,332.9 L635,333.7 L634,333.4 L633,333.4 L632,333.4 L631,333.2 L630,332.3 L629,332.3 L628,332.0 L627,332.2 L626,332.6 L625,332.7 L624,333.0ZM625,398.2 L626,398.2 L627,398.2 L628,398.2 L629,398.2 L630,398.2 L631,398.1 L632,398.2 L633,398.1 L634,398.2 L635,398.2 L636,398.2 L637,398.2 L638,398.2 L639,398.2 L640,398.2 L641,398.2 L642,398.2 L643,398.1 L644,398.2 L645,398.2 L646,398.2 L647,398.2 L648,398.2 L649,398.2 L650,398.2 L651,398.2 L652,398.2 L653,398.2 L654,398.2 L655,398.1 L656,398.2 L657,398.2 L658,398.2 L659,398.2 L660,398.2 L661,398.2 L662,398.2 L663,398.2 L664,398.2 L665,398.2 L666,398.2 L667,398.2 L668,398.2 L669,398.2 L670,398.2 L671,398.2 L672,398.2 L673,398.2 L674,398.2 L675,398.2 L676,398.1 L677,398.2 L678,398.2 L679,398.2 L680,398.2 L681,398.2 L682,398.2 L683,398.2 L684,398.2 L685,398.2 L686,398.2 L687,398.2 L688,398.2 L689,398.2 L690,398.1 L691,398.2 L692,398.2 L693,390.6 L694,391.2 L695,392.6 L696,389.7 L697,386.3 L698,395.1 L699,394.5 L700,391.5 L701,392.3 L702,392.5 L703,394.4 L704,393.2 L705,386.9 L706,391.4 L707,391.0 L708,395.4 L709,395.1 L710,394.4 L711,394.0 L712,387.0 L713,393.2 L714,390.4 L715,392.6 L716,387.0 L717,392.1 L718,390.0 L719,393.3 L720,392.5 L721,395.4 L722,391.3 L723,394.8 L724,390.4 L725,396.3 L726,394.1 L727,392.2 L728,395.2 L729,395.8 L730,396.3 L731,397.3 L732,397.0 L733,396.1 L734,396.9 L735,397.1 L736,396.9 L737,397.8 L738,397.4 L739,397.0 L740,397.4 L741,397.5 L742,397.6 L743,398.0 L744,398.0 L745,397.7 L746,397.4 L747,398.2 L748,398.2 L749,397.7 L750,398.2 L751,398.1 L752,398.2 L753,398.2 L754,398.2 L755,398.2 L756,398.2 L757,398.2 L758,398.2 L759,398.2 L760,393.5 L761,389.9 L762,392.9 L763,393.9 L764,393.4 L765,394.6 L766,395.4 L767,390.7 L768,395.6 L769,395.5 L770,392.1 L771,395.7 L772,395.2 L773,393.4 L774,393.8 L775,391.7 L776,388.0 L777,394.8 L778,392.9 L779,391.6 L780,391.0 L781,395.6 L782,395.3 L783,391.9 L784,388.1 L785,391.6 L786,392.6 L787,391.6 L788,394.3 L789,394.2 L790,388.1 L791,395.4 L792,392.3 L793,388.1 L794,395.5 L795,392.3 L796,394.9 L797,391.0 L798,393.6 L799,392.0 L800,395.3 L801,388.1 L802,393.9 L803,392.5 L804,392.1 L805,394.9 L806,391.6 L807,392.3 L808,391.8 L809,393.0 L810,390.8 L811,390.9 L812,382.4 L813,391.6 L814,390.0 L815,389.9 L816,388.0 L817,387.3 L818,387.5 L819,390.0 L820,390.2 L821,395.2 L822,395.1 L823,392.7 L824,390.6 L825,395.2 L826,396.8 L827,396.4 L828,394.8 L829,395.2 L830,397.2 L831,396.8 L832,396.3 L833,396.8 L834,397.3 L835,397.3 L836,397.4 L837,398.0 L838,397.6 L839,397.6 L840,397.5 L841,397.2 L842,397.9 L843,398.0 L844,398.2 L845,398.1 L846,397.8 L847,398.2 L848,398.2 L849,398.2 L850,390.9 L851,389.5 L852,392.7 L853,390.4 L854,389.7 L855,390.3 L856,394.8 L857,391.7 L858,390.6 L859,391.5 L860,394.1 L861,392.6 L862,394.2 L863,393.5 L864,393.3 L865,387.0 L866,391.5 L867,394.7 L868,387.0 L869,391.4 L870,392.9 L871,390.0 L872,391.9 L873,393.4 L874,391.2 L875,392.9 L876,394.2 L877,395.3 L878,392.9 L879,392.1 L880,394.9 L881,394.5 L882,393.6 L883,387.0 L884,394.4 L885,391.9 L886,394.2 L887,392.4 L888,393.2 L889,394.3 L890,387.0 L891,394.1 L892,394.9 L893,392.2 L894,392.5 L895,394.8 L896,393.2 L897,393.4 L898,395.5 L899,391.7 L900,393.6 L901,390.4 L902,393.0 L903,394.3 L904,396.4 L905,395.1 L906,396.1 L907,397.2 L908,397.2 L909,395.9 L910,397.3 L911,397.5 L912,397.1 L913,397.3 L914,397.3 L915,391.4 L916,392.1 L917,394.3 L918,393.8 L919,394.5 L920,393.3 L921,395.4 L922,391.1 L923,392.2 L924,392.3 L925,391.9 L926,393.8 L927,392.6 L928,392.2 L929,394.0 L930,391.4 L931,392.2 L932,392.3 L933,391.2 L934,390.6 L935,393.8 L936,394.9 L937,392.5 L938,394.4 L939,392.6 L940,391.7 L941,391.2 L942,390.7 L943,392.1 L944,390.8 L945,392.6 L946,393.9 L947,393.8 L948,389.0 L949,394.2 L950,396.2 L951,396.2 L952,395.8 L953,394.7 L954,395.9 L955,396.9 L956,395.6 L957,395.3 L958,396.2 L959,396.3 L960,397.5 L961,396.3 L962,396.9 L963,395.1 L964,396.3 L965,395.7 L966,390.6 L967,393.4 L968,394.4 L969,393.4 L970,394.3 L971,391.1 L972,393.2 L973,395.7 L974,395.2 L975,393.5 L976,394.0 L977,395.5 L978,395.1 L979,391.2 L980,393.2 L981,395.0 L982,393.8 L983,394.4 L984,393.5 L985,396.3 L986,394.9 L987,396.0 L988,396.2 L989,391.3 L990,395.5 L991,394.3 L992,396.4 L993,392.2 L994,394.3 L995,391.6 L996,392.8 L997,394.4 L998,391.3 L999,395.2 L1000,394.7 L1001,393.9 L1002,393.8 L1003,395.0 L1004,387.9 L1005,394.0 L1006,393.5 L1007,391.2 L1008,393.5 L1009,392.9 L1010,393.5 L1011,394.2 L1012,394.1 L1013,395.7 L1014,393.6 L1015,392.3 L1016,394.9 L1017,395.1 L1018,395.9 L1019,396.7 L1020,396.0 L1021,397.3 L1022,395.7 L1023,396.7 L1024,396.9 L1025,396.2 L1026,397.5 L1027,397.3 L1028,397.1 L1029,397.2 L1030,398.0 L1031,397.7 L1032,397.5 L1033,397.3 L1034,397.4 L1035,397.7 L1036,398.2 L1037,398.0 L1038,397.3 L1039,397.9 L1040,398.2 L1041,398.2 L1042,398.2 L1043,398.2 L1044,398.1 L1045,398.2 L1046,398.1 L1047,398.2 L1048,398.2 L1049,398.2 L1050,398.2 L1051,398.2 L1052,398.2 L1053,398.2 L1054,398.2 L1055,398.2 L1056,398.2 L1057,395.9 L1058,395.9 L1059,395.5 L1060,392.9 L1061,395.1 L1062,395.1 L1063,395.8 L1064,396.2 L1065,396.3 L1066,396.1 L1067,395.1 L1068,394.9 L1069,396.1 L1070,397.1 L1071,395.4 L1072,396.0 L1073,395.2 L1074,395.2 L1075,395.2 L1076,396.3 L1077,394.9 L1078,396.3 L1079,395.3 L1080,396.1 L1081,397.0 L1082,395.5 L1083,394.8 L1084,395.2 L1085,396.4 L1086,396.6 L1087,396.9 L1088,394.8 L1089,395.6 L1090,394.7 L1091,396.0 L1092,395.3 L1093,395.2 L1094,394.7 L1095,396.0 L1096,396.6 L1097,396.7 L1098,393.4 L1099,395.7 L1100,395.3 L1101,394.8 L1102,397.0 L1103,396.5 L1104,394.9 L1105,395.1 L1106,396.0 L1107,396.3 L1108,396.0 L1109,397.1 L1110,396.9 L1111,395.8 L1112,396.4 L1113,395.4 L1114,395.7 L1115,393.4 L1116,395.3 L1117,395.4 L1118,395.7 L1119,397.1 L1120,395.0 L1121,395.9 L1122,394.7 L1123,395.4 L1124,395.2 L1125,396.0 L1126,396.6 L1127,395.6 L1128,396.6 L1129,396.7 L1130,396.0 L1131,395.6 L1132,396.8 L1133,396.0 L1134,394.9 L1135,393.4 L1136,395.6 L1137,396.6 L1138,395.6 L1139,394.8 L1140,396.4 L1141,396.9 L1142,396.1 L1143,396.5 L1144,396.7 L1145,396.7 L1146,396.3 L1147,395.0 L1148,395.9 L1149,395.7 L1150,395.6 L1151,393.4 L1152,395.7 L1153,395.2 L1154,395.5 L1155,395.9 L1156,395.9 L1157,395.6 L1158,395.0 L1159,397.1 L1160,394.8 L1161,396.1 L1162,394.8 L1163,397.2 L1164,396.0 L1165,397.0 L1166,395.4 L1167,396.8 L1168,396.1 L1169,396.0 L1170,395.9 L1171,395.1 L1172,396.0 L1173,393.4 L1174,395.0 L1175,395.3 L1176,395.8 L1177,396.0 L1178,397.0 L1179,395.8 L1180,395.9 L1181,396.3 L1182,395.2 L1183,397.2 L1184,397.2 L1185,396.9 L1186,396.8 L1187,397.0 L1188,395.4 L1189,397.0 L1190,396.2 L1191,393.4 L1192,397.0 L1193,396.0 L1194,396.9 L1195,394.9 L1196,395.2 L1197,394.7 L1198,395.6 L1199,395.2 L1200,395.6 L1201,394.7 L1202,397.0 L1203,396.3 L1204,395.4 L1205,395.8 L1206,396.4 L1207,396.1 L1208,396.9 L1209,395.6 L1210,397.0 L1211,395.2 L1212,394.8 L1213,396.9 L1214,396.5 L1215,395.7 L1216,395.8 L1217,387.5 L1218,390.1 L1219,388.1 L1220,389.8 L1221,392.1 L1222,393.3 L1223,393.0 L1224,393.8 L1225,391.1 L1226,394.5 L1227,392.3 L1228,390.5 L1229,393.7 L1230,394.3 L1231,389.8 L1232,394.9 L1233,394.7 L1234,391.4 L1235,395.8 L1236,394.6 L1237,395.8 L1238,396.4 L1239,396.7 L1240,396.1 L1241,395.5 L1242,395.5 L1243,395.7 L1244,397.0 L1245,396.2 L1246,396.5 L1247,397.7 L1248,397.0 L1249,396.0 L1250,391.1 L1251,395.8 L1252,395.6 L1253,393.8 L1254,392.1 L1255,395.3 L1256,393.7 L1257,394.7 L1258,392.3 L1259,392.5 L1260,390.1 L1261,392.9 L1262,394.2 L1263,392.3 L1264,395.8 L1265,392.6 L1266,395.7 L1267,394.8 L1268,394.0 L1269,390.2 L1270,394.0 L1271,394.6 L1272,394.5 L1273,394.9 L1274,394.3 L1275,393.9 L1276,395.6 L1277,394.0 L1278,396.3 L1279,395.8 L1280,392.3 L1281,395.2 L1282,394.1 L1283,395.7 L1284,392.7 L1285,393.6 L1286,390.2 L1287,393.2 L1288,393.5 L1289,395.9 L1290,395.9 L1291,396.2 L1292,394.4 L1293,390.2 L1294,396.2 L1295,390.2 L1296,393.4 L1297,393.9 L1298,392.3 L1299,394.7 L1300,392.6 L1301,392.8 L1302,394.0 L1303,390.2 L1304,395.3 L1305,390.2 L1306,393.4 L1307,393.3 L1308,392.5 L1309,394.2 L1310,393.1 L1311,394.1 L1312,393.8 L1313,394.1 L1314,395.9 L1315,392.4 L1316,396.0 L1317,390.2 L1318,393.2 L1319,395.8 L1320,390.2 L1321,394.2 L1322,393.6 L1323,395.4 L1324,396.3 L1325,395.2 L1326,393.8 L1327,395.4 L1328,392.8 L1329,393.9 L1330,392.7 L1331,394.9 L1332,394.9 L1333,394.1 L1334,392.7 L1335,395.5 L1336,396.0 L1337,395.7 L1338,393.1 L1339,392.6 L1340,393.2 L1341,395.1 L1342,393.8 L1343,390.2 L1344,390.2 L1345,392.7 L1346,392.3 L1347,393.8 L1348,393.0 L1349,394.4 L1350,395.3 L1351,392.8 L1352,392.9 L1353,394.9 L1354,390.2 L1355,390.2 L1356,394.5 L1357,396.0 L1358,395.2 L1359,394.9 L1360,393.5 L1361,390.2 L1362,394.7 L1363,396.1 L1364,393.7 L1365,390.2 L1366,390.2 L1367,390.2 L1368,392.5 L1369,394.4 L1370,395.5 L1371,393.1 L1372,395.5 L1373,392.3 L1374,390.2 L1375,396.1 L1376,396.3 L1377,395.1 L1378,392.7 L1379,393.2 L1380,388.2 L1381,388.3 L1382,384.9 L1383,383.4 L1384,385.5 L1385,387.8 L1386,389.1 L1387,387.3 L1388,389.2 L1389,394.5 L1390,386.8 L1391,392.7 L1392,394.6 L1393,391.9 L1394,396.0 L1395,392.9 L1396,396.1 L1397,392.1 L1398,396.7 L1399,395.6 L1400,395.2 L1401,395.3 L1402,396.7 L1403,396.3 L1404,396.0 L1405,396.9 L1406,397.8 L1407,397.9 L1408,397.7 L1409,397.2 L1410,397.9 L1411,397.3 L1412,398.0 L1413,397.5 L1414,398.0 L1415,398.0 L1416,398.1 L1417,398.1 L1418,397.9 L1419,398.0 L1420,398.2 L1421,398.2 L1422,390.8 L1423,392.3 L1424,388.5 L1425,385.9 L1426,391.3 L1427,381.7 L1428,389.2 L1429,394.0 L1430,388.9 L1431,390.6 L1432,392.7 L1433,393.1 L1434,391.2 L1435,395.3 L1436,391.5 L1437,393.6 L1438,393.4 L1439,393.2 L1440,396.3 L1441,394.9 L1442,395.4 L1443,395.8 L1444,395.3 L1445,395.2 L1446,396.9 L1447,396.0 L1448,396.6 L1449,396.6 L1450,396.2 L1451,397.5 L1452,396.6 L1453,396.6 L1454,397.9 L1455,397.0 L1456,397.2 L1457,397.3 L1458,398.1 L1459,398.1 L1460,397.5 L1461,397.6 L1462,397.2 L1463,398.2 L1464,398.2 L1465,391.4 L1466,385.4 L1467,392.2 L1468,392.4 L1469,390.9 L1470,389.6 L1471,394.7 L1472,393.6 L1473,392.0 L1474,394.0 L1475,391.9 L1476,392.4 L1477,392.8 L1478,393.7 L1479,392.6 L1480,393.5 L1481,393.3 L1482,395.9 L1483,393.8 L1484,395.8 L1485,393.8 L1486,396.1 L1487,396.0 L1488,395.7 L1489,396.0 L1490,395.9 L1491,396.9 L1492,397.3 L1493,396.9 L1494,396.3 L1495,396.2 L1496,396.0 L1497,397.3 L1498,395.3 L1499,397.2 L1500,396.9 L1501,397.7 L1502,397.1 L1503,397.3 L1504,397.3 L1505,397.0 L1506,397.7 L1507,397.8 L1508,397.4 L1509,398.1 L1510,396.8 L1511,398.2 L1512,397.6 L1513,397.8 L1514,397.8 L1515,398.1 L1516,398.2 L1517,397.4 L1518,397.8 L1519,397.9 L1520,398.0 L1521,398.1 L1522,398.0 L1523,398.2 L1524,398.2 L1525,398.2 L1526,398.2 L1527,397.9 L1528,398.2 L1529,398.0 L1530,398.2 L1531,398.0 L1532,395.3 L1533,395.5 L1534,396.4 L1535,395.0 L1536,394.9 L1537,395.9 L1538,395.4 L1539,396.2 L1540,395.2 L1541,395.0 L1542,395.0 L1543,396.5 L1544,393.3 L1545,396.0 L1546,397.0 L1547,394.8 L1548,396.1 L1549,396.2 L1550,396.5 L1551,395.2 L1552,395.3 L1553,395.1 L1554,395.2 L1555,395.6 L1556,397.4 L1557,396.7 L1558,397.0 L1559,397.0 L1560,397.4 L1561,397.3 L1562,396.2 L1563,397.3 L1564,396.8 L1565,397.0 L1566,397.6 L1567,395.4 L1568,396.7 L1569,397.7 L1570,396.8 L1571,396.9 L1572,397.8 L1573,397.1 L1574,398.0 L1575,397.2 L1576,397.4 L1577,398.2 L1578,398.0 L1579,398.1 L1580,398.2 L1581,398.2 L1582,398.2 L1583,398.2 L1584,398.2 L1585,398.2 L1586,398.2 L1587,398.2 L1588,398.2 L1589,398.2 L1590,398.2 L1591,398.2 L1592,398.2 L1593,398.2 L1594,398.2 L1595,398.2 L1596,398.2 L1597,398.1 L1598,398.2 L1599,398.1 L1600,398.1 L1601,398.2 L1602,398.2 L1603,398.2 L1604,398.1 L1605,398.2 L1606,398.1 L1607,398.2 L1608,398.2 L1609,398.2 L1610,395.3 L1611,395.5 L1612,389.3 L1613,395.6 L1614,394.5 L1615,395.4 L1616,392.5 L1617,393.3 L1618,393.5 L1619,393.7 L1620,393.8 L1621,395.2 L1622,393.1 L1623,395.6 L1624,396.9 L1625,397.1 L1626,394.7 L1627,396.2 L1628,396.6 L1629,396.4 L1630,395.8 L1631,397.5 L1632,397.3 L1633,397.4 L1634,396.6 L1635,396.8 L1636,397.4 L1637,397.5 L1638,397.8 L1639,397.8 L1640,398.1 L1641,397.9 L1642,398.2 L1643,398.2 L1644,398.2 L1645,398.2 L1646,398.2 L1647,398.2 L1648,398.2 L1649,398.2 L1650,398.2 L1651,398.2 L1652,398.2 L1653,398.2 L1654,398.2 L1655,398.2 L1656,398.2 L1657,398.2 L1658,398.2 L1659,398.2 L1660,398.2 L1661,398.2 L1662,398.2 L1663,398.2 L1664,398.2 L1665,398.2 L1666,398.2 L1667,398.2 L1668,398.2 L1669,398.1 L1670,398.2 L1671,398.2 L1672,398.2 L1673,392.5 L1674,392.1 L1675,395.5 L1676,395.6 L1677,394.1 L1678,390.7 L1679,392.9 L1680,395.8 L1681,389.2 L1682,394.8 L1683,395.8 L1684,395.0 L1685,393.4 L1686,394.0 L1687,396.5 L1688,394.2 L1689,395.2 L1690,394.8 L1691,395.0 L1692,395.5 L1693,395.8 L1694,397.2 L1695,395.4 L1696,396.9 L1697,396.9 L1698,396.8 L1699,396.9 L1700,397.2 L1701,396.4 L1702,396.7 L1703,396.6 L1704,398.0 L1705,397.2 L1706,397.0 L1707,397.5 L1708,397.7 L1709,397.9 L1710,397.7 L1711,397.6 L1712,397.0 L1713,397.7 L1714,397.9 L1715,397.8 L1716,398.1 L1717,397.8 L1718,398.1 L1719,398.2 L1720,398.2 L1721,398.0 L1722,398.2 L1723,398.2 L1724,398.2 L1725,397.9 L1726,398.2 L1727,398.2 L1728,398.2 L1729,398.2 L1730,398.2 L1731,398.2 L1732,398.2 L1733,398.2 L1734,398.2 L1735,398.1 L1736,398.2 L1737,398.2 L1738,398.2 L1739,398.2 L1740,398.2 L1741,398.2 L1742,398.2 L1743,398.2 L1744,396.9 L1745,392.7 L1746,395.0 L1747,396.1 L1748,397.0 L1749,395.3 L1750,395.9 L1751,393.2 L1752,396.9 L1753,396.6 L1754,396.7 L1755,394.7 L1756,396.4 L1757,396.2 L1758,396.1 L1759,397.6 L1760,397.7 L1761,396.4 L1762,394.1 L1763,393.3 L1764,394.8 L1765,395.2 L1766,394.3 L1767,395.6 L1768,396.7 L1769,394.1 L1770,396.5 L1771,395.5 L1772,394.9 L1773,394.2 L1774,395.9 L1775,394.8 L1776,397.7 L1777,396.8 L1778,395.7 L1779,396.8 L1780,397.9 L1781,397.4 L1782,397.6 L1783,397.3 L1784,397.8 L1785,398.1 L1786,397.6 L1787,397.9 L1788,397.7 L1789,398.1 L1790,398.0 L1791,398.1 L1792,398.1 L1793,398.1 L1794,398.2 L1795,398.2 L1796,398.2 L1797,398.2 L1798,398.2 L1799,398.2 L1800,398.2 L1801,398.2 L1802,398.2 L1803,398.2 L1804,398.2 L1805,398.2 L1806,398.2 L1807,398.2 L1808,398.2 L1809,398.2 L1810,398.2 L1811,398.2 L1812,398.2 L1813,398.2 L1814,398.2 L1815,398.2 L1816,398.2 L1817,391.2 L1818,394.7 L1819,394.2 L1820,395.9 L1821,394.5 L1822,394.6 L1823,395.7 L1824,396.0 L1825,396.3 L1826,393.3 L1827,395.3 L1828,395.3 L1829,396.8 L1830,396.8 L1831,396.4 L1832,395.4 L1833,396.6 L1834,396.9 L1835,396.9 L1836,397.9 L1837,397.6 L1838,396.5 L1839,395.4 L1840,393.4 L1841,395.7 L1842,395.6 L1843,392.0 L1844,392.1 L1845,395.0 L1846,396.7 L1847,395.3 L1848,394.5 L1849,396.3 L1850,395.8 L1851,396.3 L1852,394.5 L1853,395.4 L1854,395.6 L1855,394.5 L1856,395.6 L1857,395.2 L1858,396.7 L1859,395.6 L1860,394.5 L1861,397.3 L1862,396.2 L1863,397.2 L1864,397.2 L1865,397.1 L1866,397.8 L1867,397.0 L1868,397.4 L1869,397.3 L1870,396.2 L1871,397.0 L1872,395.2 L1873,396.5 L1874,396.4 L1875,397.2 L1876,396.6 L1877,395.7 L1878,396.8 L1879,397.5 L1880,397.3 L1881,396.1 L1882,396.4 L1883,397.1 L1884,397.4 L1885,397.2 L1886,397.1 L1886,400.3 L1885,400.2 L1884,400.0 L1883,400.3 L1882,401.0 L1881,401.3 L1880,400.1 L1879,399.9 L1878,400.6 L1877,401.7 L1876,400.8 L1875,400.2 L1874,401.0 L1873,400.9 L1872,402.2 L1871,400.4 L1870,401.2 L1869,400.1 L1868,400.0 L1867,400.4 L1866,399.6 L1865,400.3 L1864,400.2 L1863,400.2 L1862,401.2 L1861,400.1 L1860,402.9 L1859,401.8 L1858,400.7 L1857,402.2 L1856,401.8 L1855,402.9 L1854,401.8 L1853,402.0 L1852,402.9 L1851,401.1 L1850,401.6 L1849,401.1 L1848,402.9 L1847,402.1 L1846,400.7 L1845,402.4 L1844,405.3 L1843,405.4 L1842,401.8 L1841,401.7 L1840,404.0 L1839,402.0 L1838,400.9 L1837,399.8 L1836,399.5 L1835,400.5 L1834,400.5 L1833,400.8 L1832,402.0 L1831,401.0 L1830,400.6 L1829,400.6 L1828,402.1 L1827,402.1 L1826,404.1 L1825,401.1 L1824,401.4 L1823,401.7 L1822,402.8 L1821,402.9 L1820,401.5 L1819,403.2 L1818,402.7 L1817,406.2 L1816,399.2 L1815,399.2 L1814,399.2 L1813,399.2 L1812,399.2 L1811,399.2 L1810,399.2 L1809,399.2 L1808,399.2 L1807,399.2 L1806,399.2 L1805,399.2 L1804,399.2 L1803,399.2 L1802,399.2 L1801,399.2 L1800,399.2 L1799,399.2 L1798,399.2 L1797,399.2 L1796,399.2 L1795,399.2 L1794,399.2 L1793,399.3 L1792,399.3 L1791,399.3 L1790,399.4 L1789,399.3 L1788,399.7 L1787,399.5 L1786,399.8 L1785,399.3 L1784,399.6 L1783,400.1 L1782,399.8 L1781,400.0 L1780,399.5 L1779,400.6 L1778,401.7 L1777,400.6 L1776,399.7 L1775,402.6 L1774,401.5 L1773,403.2 L1772,402.5 L1771,401.9 L1770,400.9 L1769,403.3 L1768,400.7 L1767,401.8 L1766,403.1 L1765,402.2 L1764,402.6 L1763,404.1 L1762,403.3 L1761,401.0 L1760,399.7 L1759,399.8 L1758,401.3 L1757,401.2 L1756,401.0 L1755,402.7 L1754,400.7 L1753,400.8 L1752,400.5 L1751,404.2 L1750,401.5 L1749,402.1 L1748,400.4 L1747,401.3 L1746,402.4 L1745,404.7 L1744,400.5 L1743,399.2 L1742,399.2 L1741,399.2 L1740,399.2 L1739,399.2 L1738,399.2 L1737,399.2 L1736,399.2 L1735,399.3 L1734,399.2 L1733,399.2 L1732,399.2 L1731,399.2 L1730,399.2 L1729,399.2 L1728,399.2 L1727,399.2 L1726,399.2 L1725,399.5 L1724,399.2 L1723,399.2 L1722,399.2 L1721,399.4 L1720,399.2 L1719,399.2 L1718,399.3 L1717,399.6 L1716,399.3 L1715,399.6 L1714,399.5 L1713,399.7 L1712,400.4 L1711,399.8 L1710,399.7 L1709,399.5 L1708,399.7 L1707,399.9 L1706,400.4 L1705,400.2 L1704,399.4 L1703,400.8 L1702,400.7 L1701,401.0 L1700,400.2 L1699,400.5 L1698,400.6 L1697,400.5 L1696,400.5 L1695,402.0 L1694,400.2 L1693,401.6 L1692,401.9 L1691,402.4 L1690,402.6 L1689,402.2 L1688,403.2 L1687,400.9 L1686,403.4 L1685,404.0 L1684,402.4 L1683,401.6 L1682,402.6 L1681,408.2 L1680,401.6 L1679,404.5 L1678,406.7 L1677,403.3 L1676,401.8 L1675,401.9 L1674,405.3 L1673,404.9 L1672,399.2 L1671,399.2 L1670,399.2 L1669,399.3 L1668,399.2 L1667,399.2 L1666,399.2 L1665,399.2 L1664,399.2 L1663,399.2 L1662,399.2 L1661,399.2 L1660,399.2 L1659,399.2 L1658,399.2 L1657,399.2 L1656,399.2 L1655,399.2 L1654,399.2 L1653,399.2 L1652,399.2 L1651,399.2 L1650,399.2 L1649,399.2 L1648,399.2 L1647,399.2 L1646,399.2 L1645,399.2 L1644,399.2 L1643,399.2 L1642,399.2 L1641,399.5 L1640,399.3 L1639,399.6 L1638,399.6 L1637,399.9 L1636,400.0 L1635,400.6 L1634,400.8 L1633,400.0 L1632,400.1 L1631,399.9 L1630,401.6 L1629,401.0 L1628,400.8 L1627,401.2 L1626,402.7 L1625,400.3 L1624,400.5 L1623,401.8 L1622,404.3 L1621,402.2 L1620,403.6 L1619,403.7 L1618,403.9 L1617,404.1 L1616,404.9 L1615,402.0 L1614,402.9 L1613,401.8 L1612,408.1 L1611,401.9 L1610,402.1 L1609,399.2 L1608,399.2 L1607,399.2 L1606,399.3 L1605,399.2 L1604,399.3 L1603,399.2 L1602,399.2 L1601,399.2 L1600,399.3 L1599,399.3 L1598,399.2 L1597,399.3 L1596,399.2 L1595,399.2 L1594,399.2 L1593,399.2 L1592,399.2 L1591,399.2 L1590,399.2 L1589,399.2 L1588,399.2 L1587,399.2 L1586,399.2 L1585,399.2 L1584,399.2 L1583,399.2 L1582,399.2 L1581,399.2 L1580,399.2 L1579,399.3 L1578,399.4 L1577,399.2 L1576,400.0 L1575,400.2 L1574,399.4 L1573,400.3 L1572,399.6 L1571,400.5 L1570,400.6 L1569,399.7 L1568,400.7 L1567,402.0 L1566,399.8 L1565,400.4 L1564,400.6 L1563,400.1 L1562,401.2 L1561,400.1 L1560,400.0 L1559,400.4 L1558,400.4 L1557,400.7 L1556,400.0 L1555,401.8 L1554,402.2 L1553,402.3 L1552,402.1 L1551,402.2 L1550,400.9 L1549,401.2 L1548,401.3 L1547,402.6 L1546,400.4 L1545,401.4 L1544,404.1 L1543,400.9 L1542,402.4 L1541,402.4 L1540,402.2 L1539,401.2 L1538,402.0 L1537,401.5 L1536,402.5 L1535,402.4 L1534,401.0 L1533,401.9 L1532,402.1 L1531,399.4 L1530,399.2 L1529,399.4 L1528,399.2 L1527,399.5 L1526,399.2 L1525,399.2 L1524,399.2 L1523,399.2 L1522,399.4 L1521,399.3 L1520,399.4 L1519,399.5 L1518,399.6 L1517,400.0 L1516,399.2 L1515,399.3 L1514,399.6 L1513,399.6 L1512,399.8 L1511,399.2 L1510,400.6 L1509,399.3 L1508,400.0 L1507,399.6 L1506,399.7 L1505,400.4 L1504,400.1 L1503,400.1 L1502,400.3 L1501,399.7 L1500,400.5 L1499,400.2 L1498,402.1 L1497,400.1 L1496,401.4 L1495,401.2 L1494,401.1 L1493,400.5 L1492,400.1 L1491,400.5 L1490,401.5 L1489,401.4 L1488,401.7 L1487,401.4 L1486,401.3 L1485,403.6 L1484,401.6 L1483,403.6 L1482,401.5 L1481,404.1 L1480,403.9 L1479,404.8 L1478,403.7 L1477,404.6 L1476,405.0 L1475,405.5 L1474,403.4 L1473,405.4 L1472,403.8 L1471,402.7 L1470,407.8 L1469,406.5 L1468,405.0 L1467,405.2 L1466,412.0 L1465,406.0 L1464,399.2 L1463,399.2 L1462,400.2 L1461,399.8 L1460,399.9 L1459,399.3 L1458,399.3 L1457,400.1 L1456,400.2 L1455,400.4 L1454,399.5 L1453,400.8 L1452,400.8 L1451,399.9 L1450,401.2 L1449,400.8 L1448,400.8 L1447,401.4 L1446,400.5 L1445,402.2 L1444,402.1 L1443,401.6 L1442,402.0 L1441,402.5 L1440,401.1 L1439,404.2 L1438,404.0 L1437,403.8 L1436,405.9 L1435,402.1 L1434,406.2 L1433,404.3 L1432,404.7 L1431,406.8 L1430,408.5 L1429,403.4 L1428,408.2 L1427,415.7 L1426,406.1 L1425,411.5 L1424,408.9 L1423,405.1 L1422,406.6 L1421,399.2 L1420,399.2 L1419,399.4 L1418,399.5 L1417,399.3 L1416,399.3 L1415,399.4 L1414,399.4 L1413,399.9 L1412,399.4 L1411,400.1 L1410,399.5 L1409,400.2 L1408,399.7 L1407,399.5 L1406,399.6 L1405,400.5 L1404,401.4 L1403,401.1 L1402,400.7 L1401,402.1 L1400,402.2 L1399,401.8 L1398,400.7 L1397,405.3 L1396,401.3 L1395,404.5 L1394,401.4 L1393,405.5 L1392,402.8 L1391,404.7 L1390,410.6 L1389,402.9 L1388,408.2 L1387,410.1 L1386,408.3 L1385,409.6 L1384,411.9 L1383,414.0 L1382,412.5 L1381,409.1 L1380,409.2 L1379,404.2 L1378,404.7 L1377,402.3 L1376,401.1 L1375,401.3 L1374,407.2 L1373,405.1 L1372,401.9 L1371,404.3 L1370,401.9 L1369,403.0 L1368,404.9 L1367,407.2 L1366,407.2 L1365,407.2 L1364,403.7 L1363,401.3 L1362,402.7 L1361,407.2 L1360,403.9 L1359,402.5 L1358,402.2 L1357,401.4 L1356,402.9 L1355,407.2 L1354,407.2 L1353,402.5 L1352,404.5 L1351,404.6 L1350,402.1 L1349,403.0 L1348,404.4 L1347,403.6 L1346,405.1 L1345,404.7 L1344,407.2 L1343,407.2 L1342,403.6 L1341,402.3 L1340,404.2 L1339,404.8 L1338,404.3 L1337,401.7 L1336,401.4 L1335,401.9 L1334,404.7 L1333,403.3 L1332,402.5 L1331,402.5 L1330,404.7 L1329,403.5 L1328,404.6 L1327,402.0 L1326,403.6 L1325,402.2 L1324,401.1 L1323,402.0 L1322,403.8 L1321,403.2 L1320,407.2 L1319,401.6 L1318,404.2 L1317,407.2 L1316,401.4 L1315,405.0 L1314,401.5 L1313,403.3 L1312,403.6 L1311,403.3 L1310,404.3 L1309,403.2 L1308,404.9 L1307,404.1 L1306,404.0 L1305,407.2 L1304,402.1 L1303,407.2 L1302,403.4 L1301,404.6 L1300,404.8 L1299,402.7 L1298,405.1 L1297,403.5 L1296,404.0 L1295,407.2 L1294,401.2 L1293,407.2 L1292,403.0 L1291,401.2 L1290,401.5 L1289,401.5 L1288,403.9 L1287,404.2 L1286,407.2 L1285,403.8 L1284,404.7 L1283,401.7 L1282,403.3 L1281,402.2 L1280,405.1 L1279,401.6 L1278,401.1 L1277,403.4 L1276,401.8 L1275,403.5 L1274,403.1 L1273,402.5 L1272,402.9 L1271,402.8 L1270,403.4 L1269,407.2 L1268,403.4 L1267,402.6 L1266,401.7 L1265,404.8 L1264,401.6 L1263,405.1 L1262,403.2 L1261,404.5 L1260,407.3 L1259,404.9 L1258,405.1 L1257,402.7 L1256,403.7 L1255,402.1 L1254,405.3 L1253,403.6 L1252,401.8 L1251,401.6 L1250,406.3 L1249,401.4 L1248,400.4 L1247,399.7 L1246,400.9 L1245,401.2 L1244,400.4 L1243,401.7 L1242,401.9 L1241,401.9 L1240,401.3 L1239,400.7 L1238,401.0 L1237,401.6 L1236,402.8 L1235,401.6 L1234,406.0 L1233,402.7 L1232,402.5 L1231,407.6 L1230,403.1 L1229,403.7 L1228,406.9 L1227,405.1 L1226,402.9 L1225,406.3 L1224,403.6 L1223,404.4 L1222,404.1 L1221,405.3 L1220,407.6 L1219,409.3 L1218,407.3 L1217,409.9 L1216,401.6 L1215,401.7 L1214,400.9 L1213,400.5 L1212,402.6 L1211,402.2 L1210,400.4 L1209,401.8 L1208,400.5 L1207,401.3 L1206,401.0 L1205,401.6 L1204,402.0 L1203,401.1 L1202,400.4 L1201,402.7 L1200,401.8 L1199,402.2 L1198,401.8 L1197,402.7 L1196,402.2 L1195,402.5 L1194,400.5 L1193,401.4 L1192,400.4 L1191,404.0 L1190,401.2 L1189,400.4 L1188,402.0 L1187,400.4 L1186,400.6 L1185,400.5 L1184,400.2 L1183,400.2 L1182,402.2 L1181,401.1 L1180,401.5 L1179,401.6 L1178,400.4 L1177,401.4 L1176,401.6 L1175,402.1 L1174,402.4 L1173,404.0 L1172,401.4 L1171,402.3 L1170,401.5 L1169,401.4 L1168,401.3 L1167,400.6 L1166,402.0 L1165,400.4 L1164,401.4 L1163,400.2 L1162,402.6 L1161,401.3 L1160,402.6 L1159,400.3 L1158,402.4 L1157,401.8 L1156,401.5 L1155,401.5 L1154,401.9 L1153,402.2 L1152,401.7 L1151,404.0 L1150,401.8 L1149,401.7 L1148,401.5 L1147,402.4 L1146,401.1 L1145,400.7 L1144,400.7 L1143,400.9 L1142,401.3 L1141,400.5 L1140,401.0 L1139,402.6 L1138,401.8 L1137,400.8 L1136,401.8 L1135,404.0 L1134,402.5 L1133,401.4 L1132,400.6 L1131,401.8 L1130,401.4 L1129,400.7 L1128,400.8 L1127,401.8 L1126,400.8 L1125,401.4 L1124,402.2 L1123,402.0 L1122,402.7 L1121,401.5 L1120,402.4 L1119,400.3 L1118,401.7 L1117,402.0 L1116,402.1 L1115,404.0 L1114,401.7 L1113,402.0 L1112,401.0 L1111,401.6 L1110,400.5 L1109,400.3 L1108,401.4 L1107,401.1 L1106,401.4 L1105,402.3 L1104,402.5 L1103,400.9 L1102,400.4 L1101,402.6 L1100,402.1 L1099,401.7 L1098,404.0 L1097,400.7 L1096,400.8 L1095,401.4 L1094,402.7 L1093,402.2 L1092,402.1 L1091,401.4 L1090,402.7 L1089,401.8 L1088,402.6 L1087,400.5 L1086,400.8 L1085,401.0 L1084,402.2 L1083,402.6 L1082,401.9 L1081,400.4 L1080,401.3 L1079,402.1 L1078,401.1 L1077,402.5 L1076,401.1 L1075,402.2 L1074,402.2 L1073,402.2 L1072,401.4 L1071,402.0 L1070,400.3 L1069,401.3 L1068,402.5 L1067,402.3 L1066,401.3 L1065,401.1 L1064,401.2 L1063,401.6 L1062,402.3 L1061,402.3 L1060,404.5 L1059,401.9 L1058,401.5 L1057,401.5 L1056,399.2 L1055,399.2 L1054,399.2 L1053,399.2 L1052,399.2 L1051,399.2 L1050,399.2 L1049,399.2 L1048,399.2 L1047,399.2 L1046,399.3 L1045,399.2 L1044,399.3 L1043,399.2 L1042,399.2 L1041,399.2 L1040,399.2 L1039,399.5 L1038,400.1 L1037,399.4 L1036,399.2 L1035,399.7 L1034,400.0 L1033,400.1 L1032,399.9 L1031,399.7 L1030,399.4 L1029,400.2 L1028,400.3 L1027,400.1 L1026,399.9 L1025,401.2 L1024,400.5 L1023,400.7 L1022,401.7 L1021,400.1 L1020,401.4 L1019,400.7 L1018,401.5 L1017,402.3 L1016,402.5 L1015,405.1 L1014,403.8 L1013,401.7 L1012,403.3 L1011,403.2 L1010,403.9 L1009,404.5 L1008,403.9 L1007,406.2 L1006,403.9 L1005,403.4 L1004,409.5 L1003,402.4 L1002,403.6 L1001,403.5 L1000,402.7 L999,402.2 L998,406.1 L997,403.0 L996,404.6 L995,405.8 L994,403.1 L993,405.2 L992,401.0 L991,403.1 L990,401.9 L989,406.1 L988,401.2 L987,401.4 L986,402.5 L985,401.1 L984,403.9 L983,403.0 L982,403.6 L981,402.4 L980,404.2 L979,406.2 L978,402.3 L977,401.9 L976,403.4 L975,403.9 L974,402.2 L973,401.7 L972,404.2 L971,406.3 L970,403.1 L969,404.0 L968,403.0 L967,404.0 L966,406.8 L965,401.7 L964,401.1 L963,402.3 L962,400.5 L961,401.1 L960,399.9 L959,401.1 L958,401.2 L957,402.1 L956,401.8 L955,400.5 L954,401.5 L953,402.7 L952,401.6 L951,401.2 L950,401.2 L949,403.2 L948,408.4 L947,403.6 L946,403.5 L945,404.8 L944,406.6 L943,405.3 L942,406.7 L941,406.2 L940,405.7 L939,404.8 L938,403.0 L937,404.9 L936,402.5 L935,403.6 L934,406.8 L933,406.2 L932,405.1 L931,405.2 L930,406.0 L929,403.4 L928,405.2 L927,404.8 L926,403.6 L925,405.5 L924,405.1 L923,405.2 L922,406.3 L921,402.0 L920,404.1 L919,402.9 L918,403.6 L917,403.1 L916,405.3 L915,406.0 L914,400.1 L913,400.1 L912,400.3 L911,399.9 L910,400.1 L909,401.5 L908,400.2 L907,400.2 L906,401.3 L905,402.3 L904,401.0 L903,403.1 L902,404.4 L901,407.0 L900,403.8 L899,405.7 L898,401.9 L897,404.0 L896,404.2 L895,402.6 L894,404.9 L893,405.2 L892,402.5 L891,403.3 L890,410.4 L889,403.1 L888,404.2 L887,405.0 L886,403.2 L885,405.5 L884,403.0 L883,410.4 L882,403.8 L881,402.9 L880,402.5 L879,405.3 L878,404.5 L877,402.1 L876,403.2 L875,404.5 L874,406.2 L873,404.0 L872,405.5 L871,407.4 L870,404.5 L869,406.0 L868,410.4 L867,402.7 L866,405.9 L865,410.4 L864,404.1 L863,403.9 L862,403.2 L861,404.8 L860,403.3 L859,405.9 L858,406.8 L857,405.7 L856,402.6 L855,407.1 L854,407.7 L853,407.0 L852,404.7 L851,407.9 L850,406.5 L849,399.2 L848,399.2 L847,399.2 L846,399.6 L845,399.3 L844,399.2 L843,399.4 L842,399.5 L841,400.2 L840,399.9 L839,399.8 L838,399.8 L837,399.4 L836,400.0 L835,400.1 L834,400.1 L833,400.6 L832,401.1 L831,400.6 L830,400.2 L829,402.2 L828,402.6 L827,401.0 L826,400.6 L825,402.2 L824,406.8 L823,404.7 L822,402.3 L821,402.2 L820,407.2 L819,407.4 L818,409.9 L817,410.1 L816,409.4 L815,407.5 L814,407.4 L813,405.8 L812,414.9 L811,406.5 L810,406.6 L809,404.4 L808,405.6 L807,405.1 L806,405.8 L805,402.5 L804,405.3 L803,404.9 L802,403.5 L801,409.3 L800,402.1 L799,405.4 L798,403.8 L797,406.4 L796,402.5 L795,405.1 L794,401.9 L793,409.3 L792,405.1 L791,402.0 L790,409.3 L789,403.2 L788,403.1 L787,405.8 L786,404.8 L785,405.8 L784,409.3 L783,405.5 L782,402.1 L781,401.8 L780,406.4 L779,405.8 L778,404.5 L777,402.6 L776,409.4 L775,405.7 L774,403.6 L773,404.0 L772,402.2 L771,401.7 L770,405.3 L769,401.9 L768,401.8 L767,406.7 L766,402.0 L765,402.8 L764,404.0 L763,403.5 L762,404.5 L761,407.5 L760,403.9 L759,399.2 L758,399.2 L757,399.2 L756,399.2 L755,399.2 L754,399.2 L753,399.2 L752,399.2 L751,399.3 L750,399.2 L749,399.7 L748,399.2 L747,399.2 L746,400.0 L745,399.7 L744,399.4 L743,399.4 L742,399.8 L741,399.9 L740,400.0 L739,400.4 L738,400.0 L737,399.6 L736,400.5 L735,400.3 L734,400.5 L733,401.3 L732,400.4 L731,400.1 L730,401.1 L729,401.6 L728,402.2 L727,405.2 L726,403.3 L725,401.1 L724,407.0 L723,402.6 L722,406.1 L721,402.0 L720,404.9 L719,404.1 L718,407.4 L717,405.3 L716,410.4 L715,404.8 L714,407.0 L713,404.2 L712,410.4 L711,403.4 L710,403.0 L709,402.3 L708,402.0 L707,406.4 L706,406.0 L705,410.5 L704,404.2 L703,403.0 L702,404.9 L701,405.1 L700,405.9 L699,402.9 L698,402.3 L697,411.1 L696,407.7 L695,404.8 L694,406.2 L693,406.8 L692,399.2 L691,399.2 L690,399.3 L689,399.2 L688,399.2 L687,399.2 L686,399.2 L685,399.2 L684,399.2 L683,399.2 L682,399.2 L681,399.2 L680,399.2 L679,399.2 L678,399.2 L677,399.2 L676,399.3 L675,399.2 L674,399.2 L673,399.2 L672,399.2 L671,399.2 L670,399.2 L669,399.2 L668,399.2 L667,399.2 L666,399.2 L665,399.2 L664,399.2 L663,399.2 L662,399.2 L661,399.2 L660,399.2 L659,399.2 L658,399.2 L657,399.2 L656,399.2 L655,399.3 L654,399.2 L653,399.2 L652,399.2 L651,399.2 L650,399.2 L649,399.2 L648,399.2 L647,399.2 L646,399.2 L645,399.2 L644,399.2 L643,399.3 L642,399.2 L641,399.2 L640,399.2 L639,399.2 L638,399.2 L637,399.2 L636,399.2 L635,399.2 L634,399.2 L633,399.3 L632,399.2 L631,399.3 L630,399.2 L629,399.2 L628,399.2 L627,399.2 L626,399.2 L625,399.2ZM625,434.5 L626,434.5 L627,434.5 L628,434.5 L629,434.5 L630,434.5 L631,434.5 L632,434.5 L633,434.4 L634,434.5 L635,434.5 L636,434.5 L637,434.5 L638,434.5 L639,434.5 L640,434.5 L641,434.5 L642,434.5 L643,434.5 L644,434.5 L645,434.5 L646,434.5 L647,434.5 L648,434.5 L649,434.5 L650,434.5 L651,434.5 L652,434.5 L653,434.5 L654,434.5 L655,434.5 L656,434.5 L657,434.5 L658,434.4 L659,434.5 L660,434.5 L661,434.5 L662,434.4 L663,434.5 L664,434.5 L665,434.4 L666,434.5 L667,434.5 L668,434.5 L669,434.5 L670,434.5 L671,434.5 L672,434.5 L673,434.5 L674,434.5 L675,434.5 L676,434.5 L677,434.5 L678,434.5 L679,434.5 L680,434.5 L681,434.5 L682,434.5 L683,434.4 L684,434.5 L685,434.5 L686,434.5 L687,434.5 L688,434.4 L689,434.5 L690,434.5 L691,434.5 L692,434.5 L693,421.2 L694,427.0 L695,425.9 L696,431.1 L697,422.6 L698,422.7 L699,422.9 L700,428.0 L701,426.8 L702,428.6 L703,429.7 L704,423.2 L705,429.5 L706,430.7 L707,426.7 L708,429.7 L709,428.8 L710,430.2 L711,427.0 L712,427.8 L713,426.3 L714,429.4 L715,427.4 L716,428.0 L717,423.3 L718,428.6 L719,428.3 L720,430.9 L721,427.6 L722,429.7 L723,432.4 L724,429.9 L725,427.3 L726,432.8 L727,431.6 L728,430.7 L729,431.8 L730,432.8 L731,431.6 L732,431.9 L733,432.7 L734,433.5 L735,434.0 L736,431.9 L737,433.8 L738,433.7 L739,434.1 L740,433.9 L741,433.6 L742,434.0 L743,433.7 L744,434.5 L745,434.2 L746,434.5 L747,434.5 L748,434.5 L749,434.3 L750,434.5 L751,434.1 L752,434.5 L753,434.5 L754,434.5 L755,434.5 L756,434.5 L757,434.5 L758,434.4 L759,434.5 L760,426.8 L761,428.9 L762,423.2 L763,426.7 L764,430.2 L765,428.2 L766,430.1 L767,429.0 L768,429.8 L769,429.1 L770,430.6 L771,428.0 L772,429.3 L773,429.1 L774,430.8 L775,430.2 L776,430.1 L777,429.0 L778,429.9 L779,424.4 L780,428.9 L781,428.1 L782,428.6 L783,430.8 L784,430.1 L785,424.4 L786,429.8 L787,431.2 L788,429.4 L789,431.5 L790,429.6 L791,431.6 L792,430.7 L793,429.7 L794,429.1 L795,431.1 L796,431.8 L797,431.7 L798,429.3 L799,428.8 L800,429.8 L801,430.8 L802,424.4 L803,430.3 L804,431.3 L805,427.3 L806,427.4 L807,429.3 L808,427.2 L809,429.7 L810,431.6 L811,427.7 L812,428.2 L813,424.6 L814,428.6 L815,430.5 L816,428.7 L817,426.9 L818,430.7 L819,429.6 L820,427.0 L821,430.3 L822,428.8 L823,432.2 L824,431.9 L825,427.7 L826,430.3 L827,430.7 L828,433.5 L829,431.7 L830,431.9 L831,433.8 L832,433.4 L833,432.8 L834,433.7 L835,434.0 L836,433.8 L837,433.7 L838,433.6 L839,434.1 L840,434.3 L841,434.5 L842,434.5 L843,434.5 L844,433.9 L845,434.5 L846,434.4 L847,434.5 L848,434.5 L849,434.5 L850,430.8 L851,427.5 L852,428.8 L853,431.4 L854,427.4 L855,428.7 L856,428.6 L857,428.7 L858,423.0 L859,423.1 L860,428.6 L861,428.5 L862,430.4 L863,428.3 L864,427.8 L865,423.3 L866,430.0 L867,429.6 L868,429.4 L869,431.2 L870,428.9 L871,429.5 L872,423.3 L873,430.1 L874,427.0 L875,429.9 L876,429.7 L877,430.2 L878,426.2 L879,431.3 L880,426.3 L881,429.4 L882,427.5 L883,429.0 L884,427.3 L885,423.3 L886,429.6 L887,429.0 L888,423.3 L889,429.7 L890,429.0 L891,426.5 L892,428.7 L893,428.7 L894,428.4 L895,428.5 L896,426.8 L897,426.7 L898,427.1 L899,429.5 L900,432.4 L901,429.7 L902,427.3 L903,430.7 L904,432.0 L905,432.2 L906,433.3 L907,433.1 L908,430.3 L909,430.7 L910,432.5 L911,432.7 L912,433.9 L913,431.9 L914,433.5 L915,429.6 L916,429.7 L917,427.5 L918,426.3 L919,430.8 L920,429.0 L921,430.7 L922,430.4 L923,429.6 L924,429.1 L925,430.8 L926,429.9 L927,430.4 L928,430.5 L929,428.8 L930,427.3 L931,431.3 L932,429.3 L933,424.4 L934,429.6 L935,428.0 L936,424.4 L937,429.5 L938,431.5 L939,429.0 L940,424.4 L941,431.9 L942,427.4 L943,427.0 L944,429.0 L945,428.1 L946,429.9 L947,427.5 L948,430.5 L949,432.1 L950,429.6 L951,430.3 L952,431.9 L953,430.2 L954,432.8 L955,431.8 L956,431.9 L957,431.6 L958,430.8 L959,432.1 L960,433.3 L961,433.4 L962,433.4 L963,430.5 L964,431.4 L965,430.2 L966,429.6 L967,429.1 L968,431.0 L969,430.2 L970,429.7 L971,427.4 L972,430.6 L973,429.9 L974,432.6 L975,431.7 L976,431.5 L977,430.7 L978,429.9 L979,431.3 L980,431.1 L981,429.8 L982,429.7 L983,432.8 L984,427.6 L985,431.6 L986,431.1 L987,432.6 L988,429.8 L989,431.2 L990,431.9 L991,431.1 L992,429.9 L993,430.4 L994,429.4 L995,427.7 L996,427.7 L997,426.1 L998,431.1 L999,429.7 L1000,431.3 L1001,427.2 L1002,429.3 L1003,427.1 L1004,431.1 L1005,425.5 L1006,429.6 L1007,430.0 L1008,429.0 L1009,429.2 L1010,428.9 L1011,429.2 L1012,429.8 L1013,427.7 L1014,432.8 L1015,428.6 L1016,432.6 L1017,433.2 L1018,431.4 L1019,433.2 L1020,432.0 L1021,432.0 L1022,432.2 L1023,432.5 L1024,434.0 L1025,433.3 L1026,433.9 L1027,432.1 L1028,434.2 L1029,433.9 L1030,433.8 L1031,434.3 L1032,434.2 L1033,434.0 L1034,434.3 L1035,434.5 L1036,434.5 L1037,434.4 L1038,434.0 L1039,434.1 L1040,434.4 L1041,434.3 L1042,434.5 L1043,434.5 L1044,434.5 L1045,434.4 L1046,434.5 L1047,434.2 L1048,434.5 L1049,434.5 L1050,434.5 L1051,434.5 L1052,434.5 L1053,434.5 L1054,434.5 L1055,434.5 L1056,434.5 L1057,430.9 L1058,432.6 L1059,431.3 L1060,433.1 L1061,431.8 L1062,431.8 L1063,431.9 L1064,431.3 L1065,433.3 L1066,433.2 L1067,431.7 L1068,433.5 L1069,433.1 L1070,432.2 L1071,431.5 L1072,432.3 L1073,433.0 L1074,433.1 L1075,432.6 L1076,429.7 L1077,432.8 L1078,433.5 L1079,432.1 L1080,432.7 L1081,431.0 L1082,433.3 L1083,429.7 L1084,431.9 L1085,431.6 L1086,431.1 L1087,432.5 L1088,432.1 L1089,432.5 L1090,429.7 L1091,432.8 L1092,431.7 L1093,433.5 L1094,431.3 L1095,432.0 L1096,431.1 L1097,429.7 L1098,432.6 L1099,431.9 L1100,432.4 L1101,433.4 L1102,431.1 L1103,433.4 L1104,431.4 L1105,433.3 L1106,431.8 L1107,431.4 L1108,431.5 L1109,432.6 L1110,431.8 L1111,431.1 L1112,433.5 L1113,431.8 L1114,429.7 L1115,432.0 L1116,432.2 L1117,429.7 L1118,432.1 L1119,431.9 L1120,432.1 L1121,431.9 L1122,431.4 L1123,433.2 L1124,432.3 L1125,432.4 L1126,433.1 L1127,431.3 L1128,431.5 L1129,433.1 L1130,432.8 L1131,432.0 L1132,431.8 L1133,429.7 L1134,432.0 L1135,432.4 L1136,431.3 L1137,431.9 L1138,432.4 L1139,431.4 L1140,431.3 L1141,431.7 L1142,432.1 L1143,432.8 L1144,432.0 L1145,432.6 L1146,433.2 L1147,429.7 L1148,432.2 L1149,432.3 L1150,432.5 L1151,432.7 L1152,432.4 L1153,432.6 L1154,432.2 L1155,432.3 L1156,431.3 L1157,433.0 L1158,432.5 L1159,432.6 L1160,432.7 L1161,431.6 L1162,431.2 L1163,432.1 L1164,432.3 L1165,431.9 L1166,429.7 L1167,429.7 L1168,429.7 L1169,433.2 L1170,433.0 L1171,432.4 L1172,432.1 L1173,432.4 L1174,431.1 L1175,432.4 L1176,431.7 L1177,433.4 L1178,429.7 L1179,432.6 L1180,432.9 L1181,432.2 L1182,431.3 L1183,431.3 L1184,433.1 L1185,431.0 L1186,431.9 L1187,429.7 L1188,432.3 L1189,432.6 L1190,433.5 L1191,431.0 L1192,433.5 L1193,431.8 L1194,431.3 L1195,432.8 L1196,431.7 L1197,429.7 L1198,433.0 L1199,432.6 L1200,433.0 L1201,433.3 L1202,432.0 L1203,431.9 L1204,431.7 L1205,429.7 L1206,431.1 L1207,431.0 L1208,429.7 L1209,433.3 L1210,429.7 L1211,431.7 L1212,428.8 L1213,430.8 L1214,433.5 L1215,433.0 L1216,432.6 L1217,430.2 L1218,419.3 L1219,419.7 L1220,420.0 L1221,429.6 L1222,426.1 L1223,423.7 L1224,420.8 L1225,429.5 L1226,426.7 L1227,426.9 L1228,429.0 L1229,428.1 L1230,428.3 L1231,432.1 L1232,429.9 L1233,430.0 L1234,429.8 L1235,430.1 L1236,431.9 L1237,431.9 L1238,431.5 L1239,432.4 L1240,431.3 L1241,432.5 L1242,432.4 L1243,433.8 L1244,433.4 L1245,431.5 L1246,432.7 L1247,431.9 L1248,434.1 L1249,434.1 L1250,431.5 L1251,429.2 L1252,431.0 L1253,430.4 L1254,429.9 L1255,429.6 L1256,428.4 L1257,426.2 L1258,430.8 L1259,428.5 L1260,431.8 L1261,432.0 L1262,428.7 L1263,429.3 L1264,431.5 L1265,432.4 L1266,428.9 L1267,428.6 L1268,431.2 L1269,426.5 L1270,430.6 L1271,432.0 L1272,432.2 L1273,432.0 L1274,429.0 L1275,431.7 L1276,428.7 L1277,426.5 L1278,429.5 L1279,430.4 L1280,430.2 L1281,430.6 L1282,431.5 L1283,426.5 L1284,426.5 L1285,430.0 L1286,428.9 L1287,430.0 L1288,429.9 L1289,429.8 L1290,431.2 L1291,426.5 L1292,432.4 L1293,429.1 L1294,429.0 L1295,429.9 L1296,428.6 L1297,431.6 L1298,432.4 L1299,429.2 L1300,431.6 L1301,431.8 L1302,429.3 L1303,429.8 L1304,429.3 L1305,429.0 L1306,426.5 L1307,431.3 L1308,430.3 L1309,430.1 L1310,429.9 L1311,431.3 L1312,429.5 L1313,431.3 L1314,429.0 L1315,430.0 L1316,429.2 L1317,429.5 L1318,429.5 L1319,426.5 L1320,432.0 L1321,426.5 L1322,429.1 L1323,428.6 L1324,431.4 L1325,426.5 L1326,432.0 L1327,430.9 L1328,426.5 L1329,432.0 L1330,432.1 L1331,430.4 L1332,431.1 L1333,429.3 L1334,429.7 L1335,426.5 L1336,426.5 L1337,426.5 L1338,431.1 L1339,430.1 L1340,428.6 L1341,431.7 L1342,429.9 L1343,428.7 L1344,431.4 L1345,426.5 L1346,430.5 L1347,431.0 L1348,430.6 L1349,432.6 L1350,429.7 L1351,430.0 L1352,430.0 L1353,432.1 L1354,430.2 L1355,430.0 L1356,432.0 L1357,432.6 L1358,431.7 L1359,432.2 L1360,430.5 L1361,426.5 L1362,428.8 L1363,428.9 L1364,428.9 L1365,429.6 L1366,429.9 L1367,428.9 L1368,430.7 L1369,429.9 L1370,426.5 L1371,426.5 L1372,431.9 L1373,430.8 L1374,430.2 L1375,430.3 L1376,432.5 L1377,428.8 L1378,429.2 L1379,432.0 L1380,420.0 L1381,424.2 L1382,428.7 L1383,421.5 L1384,421.1 L1385,422.7 L1386,426.7 L1387,429.2 L1388,421.0 L1389,425.5 L1390,428.8 L1391,431.8 L1392,431.3 L1393,428.7 L1394,431.2 L1395,432.7 L1396,431.3 L1397,430.7 L1398,432.6 L1399,432.3 L1400,431.1 L1401,432.6 L1402,432.4 L1403,431.0 L1404,433.7 L1405,433.4 L1406,431.9 L1407,432.8 L1408,433.4 L1409,434.3 L1410,433.4 L1411,433.6 L1412,434.3 L1413,434.5 L1414,433.8 L1415,433.5 L1416,433.6 L1417,434.4 L1418,434.5 L1419,434.5 L1420,434.5 L1421,434.5 L1422,423.1 L1423,426.6 L1424,418.0 L1425,423.3 L1426,426.8 L1427,428.8 L1428,425.7 L1429,419.0 L1430,427.7 L1431,426.2 L1432,429.5 L1433,431.0 L1434,429.6 L1435,424.6 L1436,429.4 L1437,432.2 L1438,432.0 L1439,430.4 L1440,431.6 L1441,428.2 L1442,431.9 L1443,430.6 L1444,432.4 L1445,433.0 L1446,433.3 L1447,432.6 L1448,432.9 L1449,433.9 L1450,433.5 L1451,433.8 L1452,433.2 L1453,433.4 L1454,433.9 L1455,433.5 L1456,432.7 L1457,433.5 L1458,433.8 L1459,433.8 L1460,433.8 L1461,433.8 L1462,434.0 L1463,434.5 L1464,434.4 L1465,426.1 L1466,426.4 L1467,428.9 L1468,429.7 L1469,430.3 L1470,430.6 L1471,426.3 L1472,430.2 L1473,429.7 L1474,423.7 L1475,427.5 L1476,427.4 L1477,429.4 L1478,431.3 L1479,429.1 L1480,429.0 L1481,432.0 L1482,432.5 L1483,431.8 L1484,432.4 L1485,431.1 L1486,433.3 L1487,431.4 L1488,429.4 L1489,429.7 L1490,431.8 L1491,433.3 L1492,432.4 L1493,432.2 L1494,432.3 L1495,433.5 L1496,432.7 L1497,431.4 L1498,433.1 L1499,433.6 L1500,431.9 L1501,433.9 L1502,434.0 L1503,433.0 L1504,434.2 L1505,433.7 L1506,433.5 L1507,434.0 L1508,434.2 L1509,433.6 L1510,434.2 L1511,434.0 L1512,433.9 L1513,434.3 L1514,433.9 L1515,434.5 L1516,434.5 L1517,434.2 L1518,434.1 L1519,434.2 L1520,434.5 L1521,434.4 L1522,434.5 L1523,434.5 L1524,434.5 L1525,434.5 L1526,434.5 L1527,434.5 L1528,434.5 L1529,434.5 L1530,434.5 L1531,434.5 L1532,432.0 L1533,431.0 L1534,432.2 L1535,429.2 L1536,431.2 L1537,432.7 L1538,432.2 L1539,433.3 L1540,431.6 L1541,431.8 L1542,431.3 L1543,432.2 L1544,433.5 L1545,429.7 L1546,432.7 L1547,432.2 L1548,432.4 L1549,433.1 L1550,431.7 L1551,432.3 L1552,432.6 L1553,431.2 L1554,431.6 L1555,433.7 L1556,432.5 L1557,433.7 L1558,434.1 L1559,433.4 L1560,433.2 L1561,432.6 L1562,431.5 L1563,432.9 L1564,432.4 L1565,433.1 L1566,433.3 L1567,433.5 L1568,433.0 L1569,432.9 L1570,432.8 L1571,433.2 L1572,432.1 L1573,434.0 L1574,434.2 L1575,434.0 L1576,433.8 L1577,433.9 L1578,434.4 L1579,433.8 L1580,434.5 L1581,434.5 L1582,434.5 L1583,434.5 L1584,434.5 L1585,434.5 L1586,434.5 L1587,434.5 L1588,434.5 L1589,434.5 L1590,434.5 L1591,434.5 L1592,434.4 L1593,434.5 L1594,434.5 L1595,434.5 L1596,434.5 L1597,434.4 L1598,434.5 L1599,434.5 L1600,434.5 L1601,434.4 L1602,434.5 L1603,434.5 L1604,434.5 L1605,434.5 L1606,434.5 L1607,434.5 L1608,434.5 L1609,434.5 L1610,425.0 L1611,425.3 L1612,430.9 L1613,429.8 L1614,430.7 L1615,430.6 L1616,428.0 L1617,426.5 L1618,429.8 L1619,430.0 L1620,428.4 L1621,432.3 L1622,432.4 L1623,433.0 L1624,431.6 L1625,433.0 L1626,433.7 L1627,433.5 L1628,433.2 L1629,433.7 L1630,433.7 L1631,433.1 L1632,433.5 L1633,434.3 L1634,432.9 L1635,434.3 L1636,433.3 L1637,434.3 L1638,433.9 L1639,434.0 L1640,434.1 L1641,434.5 L1642,434.5 L1643,434.5 L1644,434.5 L1645,434.5 L1646,434.4 L1647,434.5 L1648,434.5 L1649,434.4 L1650,434.5 L1651,434.5 L1652,434.5 L1653,434.5 L1654,434.5 L1655,434.5 L1656,434.4 L1657,434.5 L1658,434.5 L1659,434.4 L1660,434.5 L1661,434.5 L1662,434.5 L1663,434.5 L1664,434.4 L1665,434.5 L1666,434.5 L1667,434.5 L1668,434.5 L1669,434.5 L1670,434.4 L1671,434.5 L1672,434.5 L1673,428.3 L1674,431.7 L1675,427.5 L1676,431.1 L1677,429.5 L1678,428.6 L1679,424.4 L1680,429.5 L1681,428.4 L1682,429.4 L1683,431.7 L1684,431.7 L1685,430.9 L1686,431.6 L1687,431.4 L1688,428.5 L1689,431.6 L1690,429.2 L1691,429.5 L1692,432.4 L1693,433.3 L1694,433.0 L1695,433.1 L1696,430.9 L1697,432.2 L1698,432.8 L1699,432.8 L1700,433.8 L1701,433.2 L1702,433.2 L1703,433.8 L1704,433.9 L1705,434.2 L1706,433.3 L1707,433.3 L1708,433.4 L1709,433.6 L1710,433.7 L1711,434.0 L1712,433.9 L1713,433.9 L1714,434.0 L1715,433.6 L1716,434.0 L1717,434.4 L1718,434.5 L1719,434.4 L1720,434.2 L1721,434.5 L1722,434.4 L1723,434.1 L1724,434.5 L1725,434.5 L1726,434.5 L1727,434.5 L1728,434.5 L1729,434.5 L1730,434.5 L1731,434.5 L1732,434.5 L1733,434.5 L1734,434.5 L1735,434.4 L1736,434.5 L1737,434.5 L1738,434.5 L1739,434.5 L1740,434.5 L1741,434.4 L1742,434.5 L1743,434.5 L1744,431.9 L1745,432.1 L1746,431.3 L1747,431.4 L1748,430.9 L1749,432.8 L1750,433.2 L1751,431.2 L1752,431.4 L1753,431.8 L1754,430.6 L1755,429.3 L1756,432.1 L1757,432.5 L1758,432.9 L1759,433.6 L1760,433.7 L1761,433.3 L1762,427.5 L1763,432.7 L1764,432.8 L1765,430.7 L1766,431.3 L1767,431.7 L1768,428.1 L1769,433.0 L1770,431.0 L1771,432.1 L1772,432.4 L1773,432.5 L1774,433.3 L1775,433.0 L1776,433.9 L1777,432.6 L1778,433.1 L1779,432.9 L1780,434.2 L1781,433.3 L1782,433.7 L1783,433.0 L1784,433.8 L1785,434.3 L1786,433.9 L1787,434.0 L1788,434.3 L1789,434.4 L1790,433.9 L1791,434.5 L1792,434.5 L1793,434.4 L1794,434.5 L1795,434.5 L1796,434.5 L1797,434.5 L1798,434.5 L1799,434.5 L1800,434.5 L1801,434.5 L1802,434.5 L1803,434.5 L1804,434.5 L1805,434.4 L1806,434.5 L1807,434.5 L1808,434.5 L1809,434.5 L1810,434.5 L1811,434.5 L1812,434.4 L1813,434.5 L1814,434.5 L1815,434.5 L1816,434.5 L1817,431.8 L1818,431.3 L1819,432.6 L1820,430.7 L1821,432.9 L1822,431.0 L1823,430.9 L1824,430.5 L1825,431.8 L1826,432.4 L1827,432.5 L1828,432.4 L1829,433.5 L1830,433.5 L1831,431.5 L1832,432.8 L1833,433.7 L1834,433.1 L1835,433.9 L1836,433.2 L1837,434.1 L1838,432.3 L1839,432.4 L1840,427.9 L1841,432.3 L1842,430.6 L1843,430.0 L1844,432.5 L1845,431.6 L1846,432.5 L1847,431.3 L1848,430.5 L1849,431.2 L1850,431.7 L1851,431.1 L1852,432.6 L1853,431.4 L1854,431.0 L1855,432.5 L1856,432.3 L1857,432.1 L1858,432.7 L1859,433.5 L1860,433.5 L1861,433.9 L1862,433.7 L1863,433.4 L1864,433.8 L1865,433.2 L1866,433.3 L1867,433.9 L1868,433.6 L1869,433.8 L1870,431.5 L1871,431.4 L1872,432.0 L1873,430.4 L1874,432.3 L1875,432.3 L1876,431.7 L1877,431.7 L1878,432.1 L1879,432.2 L1880,431.3 L1881,432.1 L1882,432.3 L1883,432.8 L1884,434.0 L1885,432.3 L1886,432.6 L1886,437.4 L1885,437.7 L1884,436.0 L1883,437.2 L1882,437.7 L1881,437.9 L1880,438.7 L1879,437.8 L1878,437.9 L1877,438.3 L1876,438.3 L1875,437.7 L1874,437.7 L1873,439.6 L1872,438.0 L1871,438.6 L1870,438.5 L1869,436.2 L1868,436.4 L1867,436.1 L1866,436.7 L1865,436.8 L1864,436.2 L1863,436.6 L1862,436.3 L1861,436.1 L1860,436.5 L1859,436.5 L1858,437.3 L1857,437.9 L1856,437.7 L1855,437.5 L1854,439.0 L1853,438.6 L1852,437.4 L1851,438.9 L1850,438.3 L1849,438.8 L1848,439.5 L1847,438.7 L1846,437.5 L1845,438.4 L1844,437.5 L1843,440.0 L1842,439.4 L1841,437.7 L1840,442.1 L1839,437.6 L1838,437.7 L1837,435.9 L1836,436.8 L1835,436.1 L1834,436.9 L1833,436.3 L1832,437.2 L1831,438.5 L1830,436.5 L1829,436.5 L1828,437.6 L1827,437.5 L1826,437.6 L1825,438.2 L1824,439.5 L1823,439.1 L1822,439.0 L1821,437.1 L1820,439.3 L1819,437.4 L1818,438.7 L1817,438.2 L1816,435.5 L1815,435.5 L1814,435.5 L1813,435.5 L1812,435.6 L1811,435.5 L1810,435.5 L1809,435.5 L1808,435.5 L1807,435.5 L1806,435.5 L1805,435.6 L1804,435.5 L1803,435.5 L1802,435.5 L1801,435.5 L1800,435.5 L1799,435.5 L1798,435.5 L1797,435.5 L1796,435.5 L1795,435.5 L1794,435.5 L1793,435.6 L1792,435.5 L1791,435.5 L1790,436.1 L1789,435.6 L1788,435.7 L1787,436.0 L1786,436.1 L1785,435.7 L1784,436.2 L1783,437.0 L1782,436.3 L1781,436.7 L1780,435.8 L1779,437.1 L1778,436.9 L1777,437.4 L1776,436.1 L1775,437.0 L1774,436.7 L1773,437.5 L1772,437.6 L1771,437.9 L1770,439.0 L1769,437.0 L1768,441.9 L1767,438.3 L1766,438.7 L1765,439.3 L1764,437.2 L1763,437.3 L1762,442.5 L1761,436.7 L1760,436.3 L1759,436.4 L1758,437.1 L1757,437.5 L1756,437.9 L1755,440.7 L1754,439.4 L1753,438.2 L1752,438.6 L1751,438.8 L1750,436.8 L1749,437.2 L1748,439.1 L1747,438.6 L1746,438.7 L1745,437.9 L1744,438.1 L1743,435.5 L1742,435.5 L1741,435.6 L1740,435.5 L1739,435.5 L1738,435.5 L1737,435.5 L1736,435.5 L1735,435.6 L1734,435.5 L1733,435.5 L1732,435.5 L1731,435.5 L1730,435.5 L1729,435.5 L1728,435.5 L1727,435.5 L1726,435.5 L1725,435.5 L1724,435.5 L1723,435.9 L1722,435.6 L1721,435.5 L1720,435.8 L1719,435.6 L1718,435.5 L1717,435.6 L1716,436.0 L1715,436.4 L1714,436.0 L1713,436.1 L1712,436.1 L1711,436.0 L1710,436.3 L1709,436.4 L1708,436.6 L1707,436.7 L1706,436.7 L1705,435.8 L1704,436.1 L1703,436.2 L1702,436.8 L1701,436.8 L1700,436.2 L1699,437.2 L1698,437.2 L1697,437.8 L1696,439.1 L1695,436.9 L1694,437.0 L1693,436.7 L1692,437.6 L1691,440.5 L1690,440.8 L1689,438.4 L1688,441.5 L1687,438.6 L1686,438.4 L1685,439.1 L1684,438.3 L1683,438.3 L1682,440.6 L1681,441.6 L1680,440.5 L1679,445.6 L1678,441.4 L1677,440.5 L1676,438.9 L1675,442.5 L1674,438.3 L1673,441.7 L1672,435.5 L1671,435.5 L1670,435.6 L1669,435.5 L1668,435.5 L1667,435.5 L1666,435.5 L1665,435.5 L1664,435.6 L1663,435.5 L1662,435.5 L1661,435.5 L1660,435.5 L1659,435.6 L1658,435.5 L1657,435.5 L1656,435.6 L1655,435.5 L1654,435.5 L1653,435.5 L1652,435.5 L1651,435.5 L1650,435.5 L1649,435.6 L1648,435.5 L1647,435.5 L1646,435.6 L1645,435.5 L1644,435.5 L1643,435.5 L1642,435.5 L1641,435.5 L1640,435.9 L1639,436.0 L1638,436.1 L1637,435.7 L1636,436.7 L1635,435.7 L1634,437.1 L1633,435.7 L1632,436.5 L1631,436.9 L1630,436.3 L1629,436.3 L1628,436.8 L1627,436.5 L1626,436.3 L1625,437.0 L1624,438.4 L1623,437.0 L1622,437.6 L1621,437.7 L1620,441.6 L1619,440.0 L1618,440.2 L1617,443.5 L1616,442.0 L1615,439.4 L1614,439.3 L1613,440.2 L1612,439.1 L1611,444.7 L1610,445.0 L1609,435.5 L1608,435.5 L1607,435.5 L1606,435.5 L1605,435.5 L1604,435.5 L1603,435.5 L1602,435.5 L1601,435.6 L1600,435.5 L1599,435.5 L1598,435.5 L1597,435.6 L1596,435.5 L1595,435.5 L1594,435.5 L1593,435.5 L1592,435.6 L1591,435.5 L1590,435.5 L1589,435.5 L1588,435.5 L1587,435.5 L1586,435.5 L1585,435.5 L1584,435.5 L1583,435.5 L1582,435.5 L1581,435.5 L1580,435.5 L1579,436.2 L1578,435.6 L1577,436.1 L1576,436.2 L1575,436.0 L1574,435.8 L1573,436.0 L1572,437.9 L1571,436.8 L1570,437.2 L1569,437.1 L1568,437.0 L1567,436.5 L1566,436.7 L1565,436.9 L1564,437.6 L1563,437.1 L1562,438.5 L1561,437.4 L1560,436.8 L1559,436.6 L1558,435.9 L1557,436.3 L1556,437.5 L1555,436.3 L1554,438.4 L1553,438.8 L1552,437.4 L1551,437.7 L1550,438.3 L1549,436.9 L1548,437.6 L1547,437.8 L1546,437.3 L1545,440.3 L1544,436.5 L1543,437.8 L1542,438.7 L1541,438.2 L1540,438.4 L1539,436.7 L1538,437.8 L1537,437.3 L1536,438.8 L1535,440.8 L1534,437.8 L1533,439.0 L1532,438.0 L1531,435.5 L1530,435.5 L1529,435.5 L1528,435.5 L1527,435.5 L1526,435.5 L1525,435.5 L1524,435.5 L1523,435.5 L1522,435.5 L1521,435.6 L1520,435.5 L1519,435.8 L1518,435.9 L1517,435.8 L1516,435.5 L1515,435.5 L1514,436.1 L1513,435.7 L1512,436.1 L1511,436.0 L1510,435.8 L1509,436.4 L1508,435.8 L1507,436.0 L1506,436.5 L1505,436.3 L1504,435.8 L1503,437.0 L1502,436.0 L1501,436.1 L1500,438.1 L1499,436.4 L1498,436.9 L1497,438.6 L1496,437.3 L1495,436.5 L1494,437.7 L1493,437.8 L1492,437.6 L1491,436.7 L1490,438.2 L1489,440.3 L1488,440.6 L1487,438.6 L1486,436.7 L1485,438.9 L1484,437.6 L1483,438.2 L1482,437.5 L1481,438.0 L1480,441.0 L1479,440.9 L1478,438.7 L1477,440.6 L1476,442.6 L1475,442.5 L1474,446.3 L1473,440.3 L1472,439.8 L1471,443.7 L1470,439.4 L1469,439.7 L1468,440.3 L1467,441.1 L1466,443.6 L1465,443.9 L1464,435.6 L1463,435.5 L1462,436.0 L1461,436.2 L1460,436.2 L1459,436.2 L1458,436.2 L1457,436.5 L1456,437.3 L1455,436.5 L1454,436.1 L1453,436.6 L1452,436.8 L1451,436.2 L1450,436.5 L1449,436.1 L1448,437.1 L1447,437.4 L1446,436.7 L1445,437.0 L1444,437.6 L1443,439.4 L1442,438.1 L1441,441.8 L1440,438.4 L1439,439.6 L1438,438.0 L1437,437.8 L1436,440.6 L1435,445.4 L1434,440.4 L1433,439.0 L1432,440.5 L1431,443.8 L1430,442.3 L1429,451.0 L1428,444.3 L1427,441.2 L1426,443.2 L1425,446.7 L1424,452.0 L1423,443.4 L1422,446.9 L1421,435.5 L1420,435.5 L1419,435.5 L1418,435.5 L1417,435.6 L1416,436.4 L1415,436.5 L1414,436.2 L1413,435.5 L1412,435.7 L1411,436.4 L1410,436.6 L1409,435.7 L1408,436.6 L1407,437.2 L1406,438.1 L1405,436.6 L1404,436.3 L1403,439.0 L1402,437.6 L1401,437.4 L1400,438.9 L1399,437.7 L1398,437.4 L1397,439.3 L1396,438.7 L1395,437.3 L1394,438.8 L1393,441.3 L1392,438.7 L1391,438.2 L1390,441.2 L1389,444.5 L1388,449.0 L1387,440.8 L1386,443.3 L1385,447.3 L1384,448.9 L1383,448.5 L1382,441.3 L1381,445.8 L1380,450.0 L1379,438.0 L1378,440.8 L1377,441.2 L1376,437.5 L1375,439.7 L1374,439.8 L1373,439.2 L1372,438.1 L1371,443.5 L1370,443.5 L1369,440.1 L1368,439.3 L1367,441.1 L1366,440.1 L1365,440.4 L1364,441.1 L1363,441.1 L1362,441.2 L1361,443.5 L1360,439.5 L1359,437.8 L1358,438.3 L1357,437.4 L1356,438.0 L1355,440.0 L1354,439.8 L1353,437.9 L1352,440.0 L1351,440.0 L1350,440.3 L1349,437.4 L1348,439.4 L1347,439.0 L1346,439.5 L1345,443.5 L1344,438.6 L1343,441.3 L1342,440.1 L1341,438.3 L1340,441.4 L1339,439.9 L1338,438.9 L1337,443.5 L1336,443.5 L1335,443.5 L1334,440.3 L1333,440.7 L1332,438.9 L1331,439.6 L1330,437.9 L1329,438.0 L1328,443.5 L1327,439.1 L1326,438.0 L1325,443.5 L1324,438.6 L1323,441.4 L1322,440.9 L1321,443.5 L1320,438.0 L1319,443.5 L1318,440.5 L1317,440.5 L1316,440.8 L1315,440.0 L1314,441.0 L1313,438.7 L1312,440.5 L1311,438.7 L1310,440.1 L1309,439.9 L1308,439.7 L1307,438.7 L1306,443.5 L1305,441.0 L1304,440.7 L1303,440.2 L1302,440.7 L1301,438.2 L1300,438.4 L1299,440.8 L1298,437.6 L1297,438.4 L1296,441.4 L1295,440.1 L1294,441.0 L1293,440.9 L1292,437.6 L1291,443.5 L1290,438.8 L1289,440.2 L1288,440.1 L1287,440.0 L1286,441.1 L1285,440.0 L1284,443.5 L1283,443.5 L1282,438.5 L1281,439.4 L1280,439.8 L1279,439.6 L1278,440.5 L1277,443.5 L1276,441.3 L1275,438.3 L1274,441.0 L1273,438.0 L1272,437.8 L1271,438.0 L1270,439.4 L1269,443.5 L1268,438.8 L1267,441.4 L1266,441.1 L1265,437.6 L1264,438.5 L1263,440.7 L1262,441.3 L1261,438.0 L1260,438.2 L1259,441.5 L1258,439.2 L1257,443.8 L1256,441.6 L1255,440.4 L1254,440.1 L1253,439.6 L1252,439.0 L1251,440.8 L1250,438.5 L1249,435.9 L1248,435.9 L1247,438.1 L1246,437.3 L1245,438.5 L1244,436.6 L1243,436.2 L1242,437.6 L1241,437.5 L1240,438.7 L1239,437.6 L1238,438.5 L1237,438.1 L1236,438.1 L1235,439.9 L1234,440.2 L1233,440.0 L1232,440.1 L1231,437.9 L1230,441.7 L1229,441.9 L1228,441.0 L1227,443.1 L1226,443.3 L1225,440.5 L1224,449.2 L1223,446.3 L1222,443.9 L1221,440.4 L1220,450.0 L1219,450.3 L1218,450.7 L1217,439.8 L1216,437.4 L1215,437.0 L1214,436.5 L1213,439.2 L1212,441.2 L1211,438.3 L1210,440.3 L1209,436.7 L1208,440.3 L1207,439.0 L1206,438.9 L1205,440.3 L1204,438.3 L1203,438.1 L1202,438.0 L1201,436.7 L1200,437.0 L1199,437.4 L1198,437.0 L1197,440.3 L1196,438.3 L1195,437.2 L1194,438.7 L1193,438.2 L1192,436.5 L1191,439.0 L1190,436.5 L1189,437.4 L1188,437.7 L1187,440.3 L1186,438.1 L1185,439.0 L1184,436.9 L1183,438.7 L1182,438.7 L1181,437.8 L1180,437.1 L1179,437.4 L1178,440.3 L1177,436.6 L1176,438.3 L1175,437.6 L1174,438.9 L1173,437.6 L1172,437.9 L1171,437.6 L1170,437.0 L1169,436.8 L1168,440.3 L1167,440.3 L1166,440.3 L1165,438.1 L1164,437.7 L1163,437.9 L1162,438.8 L1161,438.4 L1160,437.3 L1159,437.4 L1158,437.5 L1157,437.0 L1156,438.7 L1155,437.7 L1154,437.8 L1153,437.4 L1152,437.6 L1151,437.3 L1150,437.5 L1149,437.7 L1148,437.8 L1147,440.3 L1146,436.8 L1145,437.4 L1144,438.0 L1143,437.2 L1142,437.9 L1141,438.3 L1140,438.7 L1139,438.6 L1138,437.6 L1137,438.1 L1136,438.7 L1135,437.6 L1134,438.0 L1133,440.3 L1132,438.2 L1131,438.0 L1130,437.2 L1129,436.9 L1128,438.5 L1127,438.7 L1126,436.9 L1125,437.6 L1124,437.7 L1123,436.8 L1122,438.6 L1121,438.1 L1120,437.9 L1119,438.1 L1118,437.9 L1117,440.3 L1116,437.8 L1115,438.0 L1114,440.3 L1113,438.2 L1112,436.5 L1111,438.9 L1110,438.2 L1109,437.4 L1108,438.5 L1107,438.6 L1106,438.2 L1105,436.7 L1104,438.6 L1103,436.6 L1102,438.9 L1101,436.6 L1100,437.6 L1099,438.1 L1098,437.4 L1097,440.3 L1096,438.9 L1095,438.0 L1094,438.7 L1093,436.5 L1092,438.3 L1091,437.2 L1090,440.3 L1089,437.5 L1088,437.9 L1087,437.5 L1086,438.9 L1085,438.4 L1084,438.1 L1083,440.3 L1082,436.7 L1081,439.0 L1080,437.3 L1079,437.9 L1078,436.5 L1077,437.2 L1076,440.3 L1075,437.4 L1074,436.9 L1073,437.0 L1072,437.7 L1071,438.5 L1070,437.8 L1069,436.9 L1068,436.5 L1067,438.3 L1066,436.8 L1065,436.7 L1064,438.7 L1063,438.1 L1062,438.2 L1061,438.2 L1060,436.9 L1059,438.7 L1058,437.4 L1057,439.1 L1056,435.5 L1055,435.5 L1054,435.5 L1053,435.5 L1052,435.5 L1051,435.5 L1050,435.5 L1049,435.5 L1048,435.5 L1047,435.8 L1046,435.5 L1045,435.6 L1044,435.5 L1043,435.5 L1042,435.5 L1041,435.7 L1040,435.6 L1039,435.9 L1038,436.0 L1037,435.6 L1036,435.5 L1035,435.5 L1034,435.7 L1033,436.0 L1032,435.8 L1031,435.7 L1030,436.2 L1029,436.1 L1028,435.8 L1027,437.9 L1026,436.1 L1025,436.7 L1024,436.0 L1023,437.5 L1022,437.8 L1021,438.0 L1020,438.0 L1019,436.8 L1018,438.6 L1017,436.8 L1016,437.4 L1015,441.4 L1014,437.2 L1013,442.3 L1012,440.2 L1011,440.8 L1010,441.1 L1009,440.8 L1008,441.0 L1007,440.0 L1006,440.4 L1005,444.5 L1004,438.9 L1003,442.9 L1002,440.7 L1001,442.8 L1000,438.7 L999,440.3 L998,438.9 L997,443.9 L996,442.3 L995,442.3 L994,440.6 L993,439.6 L992,440.1 L991,438.9 L990,438.1 L989,438.8 L988,440.2 L987,437.4 L986,438.9 L985,438.4 L984,442.4 L983,437.2 L982,440.3 L981,440.2 L980,438.9 L979,438.7 L978,440.1 L977,439.3 L976,438.5 L975,438.3 L974,437.4 L973,440.1 L972,439.4 L971,442.6 L970,440.3 L969,439.8 L968,439.0 L967,440.9 L966,440.4 L965,439.8 L964,438.6 L963,439.5 L962,436.6 L961,436.6 L960,436.7 L959,437.9 L958,439.2 L957,438.4 L956,438.1 L955,438.2 L954,437.2 L953,439.8 L952,438.1 L951,439.7 L950,440.4 L949,437.9 L948,439.5 L947,442.5 L946,440.1 L945,441.9 L944,441.0 L943,443.0 L942,442.6 L941,438.1 L940,445.6 L939,441.0 L938,438.5 L937,440.5 L936,445.6 L935,442.0 L934,440.4 L933,445.6 L932,440.7 L931,438.7 L930,442.7 L929,441.2 L928,439.5 L927,439.6 L926,440.1 L925,439.2 L924,440.9 L923,440.4 L922,439.6 L921,439.3 L920,441.0 L919,439.2 L918,443.7 L917,442.5 L916,440.3 L915,440.4 L914,436.5 L913,438.1 L912,436.1 L911,437.3 L910,437.5 L909,439.3 L908,439.7 L907,436.9 L906,436.7 L905,437.8 L904,438.0 L903,439.3 L902,442.7 L901,440.3 L900,437.6 L899,440.5 L898,442.9 L897,443.3 L896,443.2 L895,441.5 L894,441.6 L893,441.3 L892,441.3 L891,443.5 L890,441.0 L889,440.3 L888,446.7 L887,441.0 L886,440.4 L885,446.7 L884,442.7 L883,441.0 L882,442.5 L881,440.6 L880,443.7 L879,438.7 L878,443.8 L877,439.8 L876,440.3 L875,440.1 L874,443.0 L873,439.9 L872,446.7 L871,440.5 L870,441.1 L869,438.8 L868,440.6 L867,440.4 L866,440.0 L865,446.7 L864,442.2 L863,441.7 L862,439.6 L861,441.5 L860,441.4 L859,446.9 L858,447.0 L857,441.3 L856,441.4 L855,441.3 L854,442.6 L853,438.6 L852,441.2 L851,442.5 L850,439.2 L849,435.5 L848,435.5 L847,435.5 L846,435.6 L845,435.5 L844,436.1 L843,435.5 L842,435.5 L841,435.5 L840,435.7 L839,435.9 L838,436.4 L837,436.3 L836,436.2 L835,436.0 L834,436.3 L833,437.2 L832,436.6 L831,436.2 L830,438.1 L829,438.3 L828,436.5 L827,439.3 L826,439.7 L825,442.3 L824,438.1 L823,437.8 L822,441.2 L821,439.7 L820,443.0 L819,440.4 L818,439.3 L817,443.1 L816,441.3 L815,439.5 L814,441.4 L813,445.4 L812,441.8 L811,442.3 L810,438.4 L809,440.3 L808,442.8 L807,440.7 L806,442.6 L805,442.7 L804,438.7 L803,439.7 L802,445.6 L801,439.2 L800,440.2 L799,441.2 L798,440.7 L797,438.3 L796,438.2 L795,438.9 L794,440.9 L793,440.3 L792,439.3 L791,438.4 L790,440.4 L789,438.5 L788,440.6 L787,438.8 L786,440.2 L785,445.6 L784,439.9 L783,439.2 L782,441.4 L781,441.9 L780,441.1 L779,445.6 L778,440.1 L777,441.0 L776,439.9 L775,439.8 L774,439.2 L773,440.9 L772,440.7 L771,442.0 L770,439.4 L769,440.9 L768,440.2 L767,441.0 L766,439.9 L765,441.8 L764,439.8 L763,443.3 L762,446.8 L761,441.1 L760,443.2 L759,435.5 L758,435.6 L757,435.5 L756,435.5 L755,435.5 L754,435.5 L753,435.5 L752,435.5 L751,435.9 L750,435.5 L749,435.7 L748,435.5 L747,435.5 L746,435.5 L745,435.8 L744,435.5 L743,436.3 L742,436.0 L741,436.4 L740,436.1 L739,435.9 L738,436.3 L737,436.2 L736,438.1 L735,436.0 L734,436.5 L733,437.3 L732,438.1 L731,438.4 L730,437.2 L729,438.2 L728,439.3 L727,438.4 L726,437.2 L725,442.7 L724,440.1 L723,437.6 L722,440.3 L721,442.4 L720,439.1 L719,441.7 L718,441.4 L717,446.7 L716,442.0 L715,442.6 L714,440.6 L713,443.7 L712,442.2 L711,443.0 L710,439.8 L709,441.2 L708,440.3 L707,443.3 L706,439.3 L705,440.5 L704,446.8 L703,440.3 L702,441.4 L701,443.2 L700,442.0 L699,447.1 L698,447.3 L697,447.4 L696,438.9 L695,444.1 L694,443.0 L693,448.8 L692,435.5 L691,435.5 L690,435.5 L689,435.5 L688,435.6 L687,435.5 L686,435.5 L685,435.5 L684,435.5 L683,435.6 L682,435.5 L681,435.5 L680,435.5 L679,435.5 L678,435.5 L677,435.5 L676,435.5 L675,435.5 L674,435.5 L673,435.5 L672,435.5 L671,435.5 L670,435.5 L669,435.5 L668,435.5 L667,435.5 L666,435.5 L665,435.6 L664,435.5 L663,435.5 L662,435.6 L661,435.5 L660,435.5 L659,435.5 L658,435.6 L657,435.5 L656,435.5 L655,435.5 L654,435.5 L653,435.5 L652,435.5 L651,435.5 L650,435.5 L649,435.5 L648,435.5 L647,435.5 L646,435.5 L645,435.5 L644,435.5 L643,435.5 L642,435.5 L641,435.5 L640,435.5 L639,435.5 L638,435.5 L637,435.5 L636,435.5 L635,435.5 L634,435.5 L633,435.6 L632,435.5 L631,435.5 L630,435.5 L629,435.5 L628,435.5 L627,435.5 L626,435.5 L625,435.5ZM403,501.6 L404,501.4 L405,501.6 L406,501.5 L407,501.6 L408,501.3 L409,501.4 L410,501.4 L411,500.1 L412,498.9 L413,499.3 L414,499.0 L415,499.4 L416,498.8 L417,498.2 L418,499.4 L419,498.6 L420,500.1 L421,498.8 L422,499.9 L423,499.2 L424,499.4 L425,500.4 L426,500.0 L427,499.6 L428,499.2 L429,499.3 L430,500.3 L431,499.9 L432,499.9 L433,500.5 L434,500.1 L435,500.7 L436,499.8 L437,499.8 L438,500.4 L439,500.5 L440,500.4 L441,500.9 L442,500.9 L443,500.7 L444,500.2 L445,500.6 L446,500.9 L447,500.6 L448,501.1 L449,501.1 L450,500.6 L451,500.5 L452,500.6 L453,498.6 L454,499.0 L455,496.4 L456,498.8 L457,499.1 L458,498.8 L459,497.5 L460,499.1 L461,498.0 L462,497.7 L463,498.6 L464,498.8 L465,498.9 L466,499.6 L467,498.5 L468,498.7 L469,499.8 L470,499.9 L471,499.9 L472,499.7 L473,499.1 L474,499.9 L475,499.2 L476,500.3 L477,499.1 L478,500.2 L479,500.0 L480,499.4 L481,500.3 L482,500.1 L483,500.2 L484,500.6 L485,499.9 L486,500.1 L487,500.4 L488,500.8 L489,500.5 L490,500.0 L491,500.5 L492,500.6 L493,500.3 L494,500.1 L495,499.4 L496,498.6 L497,498.9 L498,498.7 L499,497.9 L500,497.7 L501,497.4 L502,498.6 L503,498.3 L504,498.7 L505,499.2 L506,499.7 L507,498.4 L508,497.9 L509,499.8 L510,499.1 L511,498.3 L512,497.9 L513,499.4 L514,499.5 L515,500.2 L516,499.6 L517,499.6 L518,499.0 L519,499.3 L520,500.2 L521,499.2 L522,499.7 L523,500.1 L524,500.0 L525,499.7 L526,500.6 L527,500.1 L528,499.7 L529,499.6 L530,499.7 L531,500.2 L532,500.3 L533,500.2 L534,499.9 L535,500.5 L536,500.6 L537,500.5 L538,500.7 L539,499.2 L540,499.2 L541,498.1 L542,498.5 L543,498.8 L544,498.5 L545,498.2 L546,499.1 L547,498.2 L548,498.7 L549,498.5 L550,498.4 L551,498.0 L552,498.3 L553,498.5 L554,498.3 L555,499.0 L556,498.7 L557,499.2 L558,499.2 L559,498.8 L560,499.9 L561,499.4 L562,498.9 L563,499.6 L564,499.2 L565,499.9 L566,499.9 L567,499.4 L568,500.1 L569,499.6 L570,500.1 L571,500.5 L572,499.7 L573,500.0 L574,500.2 L575,499.9 L576,500.8 L577,500.2 L578,500.8 L579,500.1 L580,500.7 L581,501.0 L582,500.8 L583,500.0 L584,499.7 L585,497.9 L586,499.2 L587,499.0 L588,497.5 L589,497.5 L590,499.1 L591,498.4 L592,499.1 L593,498.4 L594,499.6 L595,500.0 L596,498.4 L597,499.9 L598,499.1 L599,498.7 L600,499.5 L601,500.1 L602,499.8 L603,499.5 L604,499.1 L605,499.9 L606,500.1 L607,499.8 L608,500.6 L609,500.3 L610,499.5 L611,500.7 L612,500.1 L613,499.9 L614,500.2 L615,500.9 L616,500.2 L617,499.9 L618,499.9 L619,500.5 L620,500.4 L621,500.4 L622,500.9 L623,500.5 L624,501.1 L625,500.5 L626,501.1 L627,500.8 L628,499.6 L629,497.8 L630,497.2 L631,496.7 L632,498.3 L633,497.8 L634,497.2 L635,498.8 L636,498.0 L637,498.9 L638,499.1 L639,498.1 L640,495.4 L641,498.7 L642,499.7 L643,499.8 L644,499.8 L645,498.6 L646,499.9 L647,498.8 L648,500.1 L649,499.6 L650,499.5 L651,500.0 L652,499.3 L653,499.7 L654,499.3 L655,499.3 L656,499.7 L657,500.3 L658,499.4 L659,499.9 L660,499.8 L661,500.0 L662,500.4 L663,499.8 L664,500.1 L665,500.4 L666,500.8 L667,499.9 L668,500.6 L669,500.1 L670,500.6 L671,500.8 L672,501.0 L673,500.4 L674,500.8 L675,500.4 L675,504.2 L674,503.8 L673,504.2 L672,503.6 L671,503.8 L670,504.0 L669,504.5 L668,504.0 L667,504.7 L666,503.8 L665,504.2 L664,504.5 L663,504.8 L662,504.2 L661,504.6 L660,504.8 L659,504.7 L658,505.2 L657,504.3 L656,504.9 L655,505.3 L654,505.3 L653,504.9 L652,505.3 L651,504.6 L650,505.1 L649,505.0 L648,504.5 L647,505.8 L646,504.7 L645,506.0 L644,504.8 L643,504.8 L642,504.9 L641,505.9 L640,509.2 L639,506.5 L638,505.5 L637,505.7 L636,506.6 L635,505.8 L634,507.4 L633,506.8 L632,506.3 L631,507.9 L630,507.4 L629,506.8 L628,505.0 L627,503.8 L626,503.5 L625,504.1 L624,503.5 L623,504.1 L622,503.7 L621,504.2 L620,504.2 L619,504.1 L618,504.7 L617,504.7 L616,504.4 L615,503.7 L614,504.4 L613,504.7 L612,504.5 L611,503.9 L610,505.1 L609,504.3 L608,504.0 L607,504.8 L606,504.5 L605,504.7 L604,505.5 L603,505.1 L602,504.8 L601,504.5 L600,505.1 L599,505.9 L598,505.5 L597,504.7 L596,506.2 L595,504.6 L594,505.0 L593,506.2 L592,505.5 L591,506.2 L590,505.5 L589,507.1 L588,507.1 L587,505.6 L586,505.4 L585,506.7 L584,504.9 L583,504.6 L582,503.8 L581,503.6 L580,503.9 L579,504.5 L578,503.8 L577,504.4 L576,503.8 L575,504.7 L574,504.4 L573,504.6 L572,504.9 L571,504.1 L570,504.5 L569,505.0 L568,504.5 L567,505.2 L566,504.7 L565,504.7 L564,505.4 L563,505.0 L562,505.7 L561,505.2 L560,504.7 L559,505.8 L558,505.4 L557,505.4 L556,505.9 L555,505.6 L554,506.3 L553,506.1 L552,506.3 L551,506.6 L550,506.2 L549,506.1 L548,505.9 L547,506.4 L546,505.5 L545,506.4 L544,506.1 L543,505.8 L542,506.1 L541,506.5 L540,505.4 L539,505.4 L538,503.9 L537,504.1 L536,504.0 L535,504.1 L534,504.7 L533,504.4 L532,504.3 L531,504.4 L530,504.9 L529,505.0 L528,504.9 L527,504.5 L526,504.0 L525,504.9 L524,504.6 L523,504.5 L522,504.9 L521,505.4 L520,504.4 L519,505.3 L518,505.6 L517,505.0 L516,505.0 L515,504.4 L514,505.1 L513,505.2 L512,506.7 L511,506.3 L510,505.5 L509,504.8 L508,506.7 L507,506.2 L506,504.9 L505,505.4 L504,505.9 L503,506.3 L502,506.0 L501,507.2 L500,506.9 L499,506.7 L498,505.9 L497,505.7 L496,506.0 L495,505.2 L494,504.5 L493,504.3 L492,504.0 L491,504.1 L490,504.6 L489,504.1 L488,503.8 L487,504.2 L486,504.5 L485,504.7 L484,504.0 L483,504.4 L482,504.5 L481,504.3 L480,505.2 L479,504.6 L478,504.4 L477,505.5 L476,504.3 L475,505.4 L474,504.7 L473,505.5 L472,504.9 L471,504.7 L470,504.7 L469,504.8 L468,505.9 L467,506.1 L466,505.0 L465,505.7 L464,505.8 L463,506.0 L462,506.9 L461,506.6 L460,505.5 L459,507.1 L458,505.8 L457,505.5 L456,505.8 L455,508.2 L454,505.6 L453,506.0 L452,504.0 L451,504.1 L450,504.0 L449,503.5 L448,503.5 L447,504.0 L446,503.7 L445,504.0 L444,504.4 L443,503.9 L442,503.7 L441,503.7 L440,504.2 L439,504.1 L438,504.2 L437,504.8 L436,504.8 L435,503.9 L434,504.5 L433,504.1 L432,504.7 L431,504.7 L430,504.3 L429,505.3 L428,505.4 L427,505.0 L426,504.6 L425,504.2 L424,505.2 L423,505.4 L422,504.7 L421,505.8 L420,504.5 L419,506.0 L418,505.2 L417,506.4 L416,505.8 L415,505.2 L414,505.6 L413,505.3 L412,505.7 L411,504.5 L410,503.2 L409,503.2 L408,503.3 L407,503.0 L406,503.1 L405,503.0 L404,503.2 L403,503.0ZM403,538.3 L404,538.2 L405,538.1 L406,538.3 L407,537.9 L408,537.8 L409,537.6 L410,537.9 L411,536.9 L412,532.9 L413,530.0 L414,533.9 L415,530.7 L416,531.1 L417,532.0 L418,533.9 L419,534.2 L420,534.9 L421,533.4 L422,534.1 L423,534.3 L424,535.1 L425,535.1 L426,533.0 L427,535.3 L428,535.5 L429,534.8 L430,533.2 L431,536.2 L432,534.9 L433,536.9 L434,535.8 L435,536.3 L436,535.8 L437,536.4 L438,536.9 L439,536.3 L440,536.2 L441,536.6 L442,536.6 L443,536.1 L444,537.5 L445,536.9 L446,536.8 L447,536.6 L448,537.2 L449,537.4 L450,537.4 L451,537.1 L452,537.6 L453,534.9 L454,531.3 L455,522.9 L456,528.6 L457,533.4 L458,530.5 L459,530.7 L460,533.6 L461,530.6 L462,533.6 L463,533.0 L464,534.8 L465,534.1 L466,534.7 L467,532.5 L468,532.5 L469,530.0 L470,534.0 L471,531.7 L472,535.4 L473,533.6 L474,535.4 L475,535.0 L476,534.1 L477,533.6 L478,535.4 L479,536.2 L480,535.2 L481,536.0 L482,535.6 L483,536.6 L484,536.6 L485,536.8 L486,536.7 L487,536.6 L488,536.0 L489,537.0 L490,536.6 L491,537.1 L492,536.3 L493,537.1 L494,537.1 L495,531.1 L496,532.5 L497,528.5 L498,532.4 L499,529.3 L500,525.8 L501,529.2 L502,531.5 L503,527.9 L504,530.7 L505,532.9 L506,531.4 L507,531.5 L508,534.5 L509,533.1 L510,532.9 L511,533.5 L512,530.6 L513,534.0 L514,535.5 L515,533.6 L516,534.2 L517,534.4 L518,531.8 L519,534.8 L520,535.4 L521,536.1 L522,531.9 L523,534.9 L524,535.9 L525,536.6 L526,535.0 L527,536.6 L528,536.2 L529,535.4 L530,536.1 L531,536.3 L532,537.0 L533,536.2 L534,537.1 L535,536.2 L536,537.2 L537,536.5 L538,536.9 L539,535.5 L540,531.3 L541,531.6 L542,531.8 L543,529.6 L544,530.7 L545,531.3 L546,531.9 L547,533.9 L548,532.6 L549,532.7 L550,534.3 L551,531.4 L552,533.3 L553,531.9 L554,532.2 L555,532.5 L556,534.5 L557,534.2 L558,535.0 L559,533.6 L560,535.3 L561,535.9 L562,535.2 L563,533.8 L564,536.2 L565,536.4 L566,536.4 L567,536.4 L568,536.5 L569,536.4 L570,535.7 L571,535.0 L572,535.5 L573,535.5 L574,536.4 L575,536.8 L576,536.5 L577,536.9 L578,536.2 L579,535.0 L580,537.2 L581,536.6 L582,536.5 L583,535.9 L584,534.9 L585,533.3 L586,530.4 L587,533.7 L588,527.2 L589,532.8 L590,532.0 L591,534.9 L592,533.3 L593,533.4 L594,533.9 L595,533.9 L596,530.2 L597,533.7 L598,534.8 L599,535.3 L600,535.1 L601,535.6 L602,535.5 L603,536.3 L604,534.7 L605,535.5 L606,536.0 L607,535.7 L608,536.4 L609,536.1 L610,536.6 L611,536.0 L612,536.0 L613,536.1 L614,536.0 L615,537.1 L616,537.1 L617,536.5 L618,537.2 L619,535.2 L620,536.4 L621,536.5 L622,537.0 L623,537.2 L624,537.0 L625,537.4 L626,535.7 L627,536.8 L628,535.2 L629,532.1 L630,532.0 L631,528.1 L632,532.8 L633,532.6 L634,532.4 L635,533.7 L636,531.6 L637,532.0 L638,534.4 L639,532.0 L640,532.9 L641,533.1 L642,533.7 L643,534.4 L644,535.2 L645,535.0 L646,535.1 L647,534.6 L648,535.2 L649,534.4 L650,536.0 L651,536.0 L652,535.9 L653,536.6 L654,535.9 L655,535.1 L656,536.0 L657,535.9 L658,536.0 L659,535.8 L660,535.8 L661,535.7 L662,536.1 L663,535.9 L664,536.8 L665,537.1 L666,536.7 L667,536.6 L668,536.7 L669,535.6 L670,535.9 L671,535.6 L672,537.4 L673,536.9 L674,537.7 L675,536.2 L675,541.8 L674,540.3 L673,541.1 L672,540.6 L671,542.4 L670,542.1 L669,542.4 L668,541.3 L667,541.4 L666,541.3 L665,540.9 L664,541.2 L663,542.1 L662,541.9 L661,542.3 L660,542.2 L659,542.2 L658,542.0 L657,542.1 L656,542.0 L655,542.9 L654,542.1 L653,541.4 L652,542.1 L651,542.0 L650,542.0 L649,543.6 L648,542.8 L647,543.4 L646,542.9 L645,543.0 L644,542.8 L643,543.6 L642,544.3 L641,544.9 L640,545.1 L639,546.0 L638,543.6 L637,546.0 L636,546.4 L635,544.3 L634,545.6 L633,545.4 L632,545.2 L631,549.9 L630,546.0 L629,545.9 L628,542.8 L627,541.2 L626,542.3 L625,540.6 L624,541.0 L623,540.8 L622,541.0 L621,541.5 L620,541.6 L619,542.8 L618,540.8 L617,541.5 L616,540.9 L615,540.9 L614,542.0 L613,541.9 L612,542.0 L611,542.0 L610,541.4 L609,541.9 L608,541.6 L607,542.3 L606,542.0 L605,542.5 L604,543.3 L603,541.7 L602,542.5 L601,542.4 L600,542.9 L599,542.7 L598,543.2 L597,544.3 L596,547.8 L595,544.1 L594,544.1 L593,544.6 L592,544.7 L591,543.1 L590,546.0 L589,545.2 L588,550.8 L587,544.3 L586,547.6 L585,544.7 L584,543.1 L583,542.1 L582,541.5 L581,541.4 L580,540.8 L579,543.0 L578,541.8 L577,541.1 L576,541.5 L575,541.2 L574,541.6 L573,542.5 L572,542.5 L571,543.0 L570,542.3 L569,541.6 L568,541.5 L567,541.6 L566,541.6 L565,541.6 L564,541.8 L563,544.2 L562,542.8 L561,542.1 L560,542.7 L559,544.4 L558,543.0 L557,543.8 L556,543.5 L555,545.5 L554,545.8 L553,546.1 L552,544.7 L551,546.6 L550,543.7 L549,545.3 L548,545.4 L547,544.1 L546,546.1 L545,546.7 L544,547.3 L543,548.4 L542,546.2 L541,546.4 L540,546.7 L539,542.5 L538,541.1 L537,541.5 L536,540.8 L535,541.8 L534,540.9 L533,541.8 L532,541.0 L531,541.7 L530,541.9 L529,542.6 L528,541.8 L527,541.4 L526,543.0 L525,541.4 L524,542.1 L523,543.1 L522,546.1 L521,541.9 L520,542.6 L519,543.2 L518,546.2 L517,543.6 L516,543.8 L515,544.4 L514,542.5 L513,544.0 L512,547.4 L511,544.5 L510,545.1 L509,544.9 L508,543.5 L507,546.5 L506,546.6 L505,545.1 L504,547.3 L503,550.1 L502,546.5 L501,548.8 L500,552.2 L499,548.7 L498,545.6 L497,549.5 L496,545.5 L495,546.9 L494,540.9 L493,540.9 L492,541.7 L491,540.9 L490,541.4 L489,541.0 L488,542.0 L487,541.4 L486,541.3 L485,541.2 L484,541.4 L483,541.4 L482,542.4 L481,542.0 L480,542.8 L479,541.8 L478,542.6 L477,544.4 L476,543.9 L475,543.0 L474,542.6 L473,544.4 L472,542.6 L471,546.3 L470,544.0 L469,548.0 L468,545.5 L467,545.5 L466,543.3 L465,543.9 L464,543.2 L463,545.0 L462,544.4 L461,547.4 L460,544.4 L459,547.3 L458,547.5 L457,544.6 L456,549.4 L455,555.1 L454,546.7 L453,543.1 L452,540.4 L451,540.9 L450,540.6 L449,540.6 L448,540.8 L447,541.4 L446,541.2 L445,541.1 L444,540.5 L443,541.9 L442,541.4 L441,541.4 L440,541.8 L439,541.7 L438,541.1 L437,541.6 L436,542.2 L435,541.7 L434,542.2 L433,541.1 L432,543.1 L431,541.8 L430,544.8 L429,543.2 L428,542.5 L427,542.7 L426,545.0 L425,542.9 L424,542.9 L423,543.7 L422,543.9 L421,544.6 L420,543.1 L419,543.8 L418,544.1 L417,546.0 L416,546.9 L415,547.3 L414,544.1 L413,548.0 L412,545.1 L411,541.1 L410,540.1 L409,540.4 L408,540.2 L407,540.1 L406,539.7 L405,539.9 L404,539.8 L403,539.7Z" fill="#a2a2a2"/><path d="M403 508.6 Q560 520 675 558" stroke="#e8e8e8" stroke-width="1.6" fill="none"/><circle cx="674" cy="557" r="2" fill="#ddd"/><rect x="402" y="482" width="2" height="78" fill="#f0f0f0"/><rect x="623" y="274" width="3" height="3" fill="#ddd"/><rect x="623" y="349" width="3" height="3" fill="#ddd"/><rect x="623" y="378" width="3" height="3" fill="#ddd"/><rect x="623" y="453" width="3" height="3" fill="#ddd"/></svg><div style="left:652px;top:690px;width:112px;height:93px;background:#585858;"></div><div style="left:707px;top:704px;width:56px;height:49px;overflow:hidden;"><div style="left:0px;top:0px;width:56px;height:49px;filter:blur(0.6px) brightness(0.95) saturate(0.9);"><svg width="56" height="49" viewBox="0 0 100 100" preserveAspectRatio="none" style="left:0;top:0"><rect x="0" y="0" width="100" height="100" fill="#cfbb96" opacity="1"/><rect x="0" y="0" width="100" height="32" fill="#b0cbe4" opacity="1"/><rect x="0" y="30" width="100" height="10" fill="#58a2b4" opacity="1"/><rect x="0" y="40" width="100" height="6" fill="#d9d2c0" opacity="1"/><ellipse cx="20" cy="22" rx="20" ry="9" fill="#b88a40" opacity="1"/><rect x="19" y="24" width="2" height="30" fill="#9a8060" opacity="1"/><ellipse cx="77" cy="21" rx="24" ry="9" fill="#bb8d44" opacity="1"/><rect x="76" y="24" width="2" height="22" fill="#9a8060" opacity="1"/><ellipse cx="50" cy="60" rx="8" ry="5" fill="#e8e2d8" opacity="1"/><ellipse cx="15" cy="65" rx="10" ry="5" fill="#e0dad0" opacity="1"/><ellipse cx="45" cy="88" rx="12" ry="14" fill="#3b2c24" opacity="1"/><ellipse cx="45" cy="72" rx="6" ry="8" fill="#2a1e1a" opacity="1"/><ellipse cx="88" cy="70" rx="14" ry="22" fill="#26384a" opacity="1"/><ellipse cx="88" cy="48" rx="6" ry="7" fill="#2a2020" opacity="1"/><ellipse cx="25" cy="92" rx="8" ry="8" fill="#d04a86" opacity="1"/><ellipse cx="70" cy="92" rx="10" ry="8" fill="#4a8a50" opacity="1"/></svg></div></div><div style="left:652px;top:767px;width:112px;height:16px;background:#484848;overflow:hidden;"><svg width="16" height="14" style="left:3px;top:1px"><rect x="1" y="1" width="12" height="12" stroke="#e0e0e0" stroke-width="1.3" fill="none"/><circle cx="4.5" cy="4.5" r="1" fill="#e0e0e0"/><path d="M3 11 L6 7.5 L8 9.5 L9.5 8 L11.5 11 Z" fill="#e0e0e0"/></svg><div class="t" style="left:19px;top:1px;font-size:13px;color:#e0e0e0;transform:scaleX(0.81);transform-origin:0 0;">0:05.544 | IMG_3953</div></div><div style="left:765px;top:690px;width:98px;height:93px;background:#585858;"></div><div style="left:777px;top:693px;width:85px;height:71px;overflow:hidden;"><div style="left:0px;top:0px;width:85px;height:71px;filter:blur(0.6px) brightness(0.93) saturate(0.9);"><svg width="85" height="71" viewBox="0 0 100 100" preserveAspectRatio="none" style="left:0;top:0"><rect x="0" y="0" width="100" height="100" fill="#cdb99a" opacity="1"/><rect x="0" y="0" width="100" height="38" fill="#a9bdd6" opacity="1"/><ellipse cx="82" cy="14" rx="18" ry="8" fill="#d4dce6" opacity="1"/><ellipse cx="60" cy="8" rx="14" ry="5" fill="#c8d2de" opacity="1"/><path d="M0 0 H45 L40 7 H0Z" fill="#6e5434" opacity="1"/><rect x="0" y="36" width="100" height="12" fill="#5e9aa6" opacity="1"/><ellipse cx="85" cy="40" rx="15" ry="4" fill="#9a9488" opacity="1"/><ellipse cx="10" cy="24" rx="15" ry="7" fill="#b98a3c" opacity="1"/><path d="M41 32 Q63 16 84 32 Z" fill="#b48636" opacity="1"/><rect x="61" y="8" width="3" height="24" fill="#b08a50" opacity="1"/><rect x="61" y="32" width="2" height="60" fill="#8a7a62" opacity="1"/><rect x="8" y="50" width="14" height="4" fill="#3aa0c8" opacity="1"/><rect x="45" y="50" width="12" height="3" fill="#8a5ac0" opacity="1"/><rect x="52" y="50" width="6" height="3" fill="#2a80c0" opacity="1"/><ellipse cx="8" cy="68" rx="10" ry="5" fill="#e0ddd6" opacity="1"/><ellipse cx="75" cy="60" rx="7" ry="6" fill="#e0d8d0" opacity="1"/><ellipse cx="93" cy="66" rx="7" ry="4" fill="#e0dcd6" opacity="1"/><ellipse cx="38" cy="68" rx="11" ry="5" fill="#8c8272" opacity="1"/><ellipse cx="85" cy="70" rx="10" ry="5" fill="#8e8474" opacity="1"/><ellipse cx="17" cy="66" rx="4" ry="8" fill="#1e5a50" opacity="1"/><ellipse cx="25" cy="83" rx="13" ry="20" fill="#8a5e44" opacity="1"/><ellipse cx="26" cy="62" rx="7" ry="7" fill="#2a201a" opacity="1"/><rect x="14" y="86" width="22" height="4" fill="#3a9ab0" opacity="1"/><ellipse cx="25" cy="98" rx="14" ry="5" fill="#58b0c0" opacity="1"/><ellipse cx="62" cy="90" rx="8" ry="12" fill="#8a6a50" opacity="1"/><ellipse cx="72" cy="82" rx="9" ry="11" fill="#7a5a46" opacity="1"/><ellipse cx="86" cy="84" rx="14" ry="10" fill="#23368a" opacity="1"/><path d="M82 100 Q90 82 99 80 L100 86 Q92 90 88 100Z" fill="#d22020" opacity="1"/><ellipse cx="70" cy="96" rx="14" ry="6" fill="#d8d2c8" opacity="1"/></svg></div></div><div style="left:765px;top:767px;width:98px;height:16px;background:#484848;overflow:hidden;"><svg width="16" height="14" style="left:3px;top:1px"><rect x="1" y="1" width="12" height="12" stroke="#e0e0e0" stroke-width="1.3" fill="none"/><circle cx="4.5" cy="4.5" r="1" fill="#e0e0e0"/><path d="M3 11 L6 7.5 L8 9.5 L9.5 8 L11.5 11 Z" fill="#e0e0e0"/></svg><div class="t" style="left:19px;top:1px;font-size:13px;color:#e0e0e0;transform:scaleX(0.81);transform-origin:0 0;">0:05.000 | IMG_3954</div></div><div style="left:864px;top:690px;width:99px;height:93px;background:#585858;"></div><div style="left:876px;top:693px;width:86px;height:71px;overflow:hidden;"><div style="left:0px;top:0px;width:86px;height:71px;filter:blur(0.6px) brightness(0.86) saturate(0.85);"><svg width="86" height="71" viewBox="0 0 100 100" preserveAspectRatio="none" style="left:0;top:0"><rect x="0" y="0" width="100" height="100" fill="#d4c6ae" opacity="1"/><rect x="0" y="0" width="100" height="24" fill="#a88c66" opacity="1"/><path d="M0 3 H100 V10 H0Z" fill="#9a7a50" opacity="1"/><path d="M50 10 Q65 2 85 12 Z" fill="#b09870" opacity="1"/><rect x="33" y="2" width="6" height="16" fill="#1e1e24" opacity="1"/><rect x="75" y="0" width="25" height="12" fill="#6a8a5a" opacity="0.6"/><rect x="0" y="24" width="100" height="16" fill="#ddd6c8" opacity="1"/><rect x="0" y="30" width="100" height="5" fill="#c0b8a8" opacity="0.5"/><ellipse cx="20" cy="30" rx="6" ry="4" fill="#3a4a8a" opacity="1"/><ellipse cx="45" cy="32" rx="6" ry="4" fill="#b02a30" opacity="1"/><ellipse cx="62" cy="30" rx="8" ry="3" fill="#3a4a78" opacity="1"/><path d="M0 36 L15 34 L28 50 L12 52Z" fill="#2a5aa0" opacity="1"/><ellipse cx="92" cy="28" rx="6" ry="6" fill="#e8e8e8" opacity="1"/><path d="M62 50 L95 42 L100 65 L65 60Z" fill="#d8d2c8" opacity="0.8"/><ellipse cx="80" cy="42" rx="9" ry="9" fill="#9a7058" opacity="1"/><ellipse cx="70" cy="48" rx="6" ry="5" fill="#3ab0c0" opacity="1"/><ellipse cx="75" cy="52" rx="5" ry="3" fill="#1e1e22" opacity="1"/><ellipse cx="18" cy="82" rx="20" ry="20" fill="#1e2e64" opacity="1"/><ellipse cx="14" cy="94" rx="12" ry="6" fill="#4e9a30" opacity="1"/><ellipse cx="30" cy="94" rx="8" ry="6" fill="#5ab03a" opacity="1"/><ellipse cx="8" cy="85" rx="5" ry="6" fill="#4a8a2a" opacity="1"/><ellipse cx="20" cy="56" rx="9" ry="10" fill="#2a2420" opacity="1"/><ellipse cx="21" cy="63" rx="7" ry="8" fill="#d0a888" opacity="1"/><ellipse cx="38" cy="60" rx="10" ry="12" fill="#c0906c" opacity="1"/><ellipse cx="44" cy="72" rx="8" ry="5" fill="#50c050" opacity="1"/><ellipse cx="52" cy="74" rx="6" ry="6" fill="#1e1e20" opacity="1"/><path d="M45 62 L75 78 L72 88 L48 74Z" fill="#d6ae8a" opacity="1"/><ellipse cx="66" cy="88" rx="18" ry="8" fill="#e6e2da" opacity="0.9"/><ellipse cx="90" cy="88" rx="10" ry="8" fill="#cfc3ac" opacity="1"/></svg></div></div><div style="left:864px;top:767px;width:99px;height:16px;background:#484848;overflow:hidden;"><svg width="16" height="14" style="left:3px;top:1px"><rect x="1" y="1" width="12" height="12" stroke="#e0e0e0" stroke-width="1.3" fill="none"/><circle cx="4.5" cy="4.5" r="1" fill="#e0e0e0"/><path d="M3 11 L6 7.5 L8 9.5 L9.5 8 L11.5 11 Z" fill="#e0e0e0"/></svg><div class="t" style="left:19px;top:1px;font-size:13px;color:#e0e0e0;transform:scaleX(0.81);transform-origin:0 0;">0:05.000 | IMG_3955</div></div><div style="left:964px;top:690px;width:99px;height:93px;background:#585858;"></div><div style="left:976px;top:693px;width:85px;height:71px;overflow:hidden;"><div style="left:0px;top:0px;width:85px;height:71px;filter:blur(0.6px) brightness(0.92) saturate(0.9);"><svg width="85" height="71" viewBox="0 0 100 100" preserveAspectRatio="none" style="left:0;top:0"><rect x="0" y="0" width="100" height="100" fill="#d6d2ca" opacity="1"/><rect x="0" y="0" width="100" height="22" fill="#b2966a" opacity="1"/><ellipse cx="55" cy="18" rx="35" ry="6" fill="#a88a5c" opacity="1"/><rect x="10" y="14" width="90" height="26" fill="#b4d2ea" opacity="1"/><ellipse cx="22" cy="30" rx="18" ry="12" fill="#5e8e52" opacity="1"/><rect x="0" y="10" width="10" height="40" fill="#6e9a60" opacity="1"/><rect x="40" y="26" width="60" height="9" fill="#3aa4c6" opacity="1"/><rect x="40" y="35" width="60" height="4" fill="#d8e8f0" opacity="1"/><rect x="82" y="6" width="4" height="70" fill="#f2f2f2" opacity="1"/><rect x="37" y="14" width="2" height="30" fill="#e8e8e8" opacity="1"/><rect x="62" y="20" width="2" height="30" fill="#e8e8e8" opacity="1"/><ellipse cx="74" cy="46" rx="8" ry="10" fill="#6a6a78" opacity="1"/><ellipse cx="88" cy="44" rx="6" ry="10" fill="#8a8a90" opacity="1"/><ellipse cx="13" cy="82" rx="22" ry="22" fill="#1c2a48" opacity="1"/><ellipse cx="10" cy="58" rx="10" ry="12" fill="#d4a68a" opacity="1"/><ellipse cx="9" cy="47" rx="9" ry="6" fill="#2a1e18" opacity="1"/><ellipse cx="34" cy="50" rx="7" ry="8" fill="#e6e6e6" opacity="1"/><ellipse cx="33" cy="40" rx="5" ry="4" fill="#2a2020" opacity="1"/><ellipse cx="47" cy="46" rx="8" ry="10" fill="#c82a30" opacity="1"/><ellipse cx="48" cy="36" rx="4" ry="5" fill="#cc9a7a" opacity="1"/><path d="M26 76 L46 66 L54 74 L34 88Z" fill="#26407e" opacity="1"/><path d="M50 72 L66 64 L74 74 L58 84Z" fill="#26407e" opacity="1"/><path d="M63 60 L76 54 L80 62 L68 68Z" fill="#2e4a8a" opacity="1"/><path d="M38 62 L52 56 L56 62 L42 68Z" fill="#2e4a8a" opacity="1"/><ellipse cx="88" cy="78" rx="14" ry="22" fill="#a2b2ca" opacity="1"/><ellipse cx="93" cy="44" rx="7" ry="10" fill="#d2a886" opacity="1"/><ellipse cx="70" cy="96" rx="22" ry="5" fill="#d8a888" opacity="1"/></svg></div></div><div style="left:964px;top:767px;width:99px;height:16px;background:#484848;overflow:hidden;"><svg width="16" height="14" style="left:3px;top:1px"><rect x="1" y="1" width="12" height="12" stroke="#e0e0e0" stroke-width="1.3" fill="none"/><circle cx="4.5" cy="4.5" r="1" fill="#e0e0e0"/><path d="M3 11 L6 7.5 L8 9.5 L9.5 8 L11.5 11 Z" fill="#e0e0e0"/></svg><div class="t" style="left:19px;top:1px;font-size:13px;color:#e0e0e0;transform:scaleX(0.81);transform-origin:0 0;">0:05.000 | IMG_3870</div></div><div style="left:1064px;top:690px;width:26px;height:93px;background:#585858;"></div><div style="left:1075px;top:693px;width:15px;height:71px;overflow:hidden;"><div style="left:0px;top:0px;width:15px;height:71px;filter:blur(0.6px) brightness(1) saturate(1);"><svg width="15" height="71" viewBox="0 0 100 100" preserveAspectRatio="none" style="left:0;top:0"><rect x="0" y="0" width="100" height="100" fill="#5b8a48" opacity="1"/><rect x="0" y="0" width="100" height="20" fill="#b89a6a" opacity="1"/><ellipse cx="50" cy="35" rx="50" ry="10" fill="#e8ecf0" opacity="1"/><ellipse cx="40" cy="70" rx="40" ry="20" fill="#3e6e2e" opacity="1"/></svg></div></div><div style="left:1064px;top:767px;width:26px;height:16px;background:#484848;overflow:hidden;"><svg width="16" height="14" style="left:3px;top:1px"><rect x="1" y="1" width="12" height="12" stroke="#e0e0e0" stroke-width="1.3" fill="none"/><circle cx="4.5" cy="4.5" r="1" fill="#e0e0e0"/><path d="M3 11 L6 7.5 L8 9.5 L9.5 8 L11.5 11 Z" fill="#e0e0e0"/></svg><div class="t" style="left:19px;top:1px;font-size:13px;color:#e0e0e0;transform:scaleX(0.81);transform-origin:0 0;">0:05.000</div></div><div style="left:446px;top:793px;width:120px;height:93px;background:#585858;"></div><div style="left:481px;top:802px;width:81px;height:61px;overflow:hidden;"><div style="left:0px;top:0px;width:81px;height:61px;filter:blur(0.6px) brightness(0.85) saturate(0.7);"><svg width="81" height="61" viewBox="0 0 100 100" preserveAspectRatio="none" style="left:0;top:0"><rect x="0" y="0" width="100" height="100" fill="#9a8870" opacity="1"/><rect x="0" y="0" width="100" height="22" fill="#7a6a58" opacity="1"/><rect x="0" y="0" width="12" height="22" fill="#e8e8e4" opacity="1"/><ellipse cx="20" cy="45" rx="16" ry="24" fill="#3e5a44" opacity="1"/><ellipse cx="18" cy="22" rx="9" ry="10" fill="#a0a09a" opacity="1"/><ellipse cx="40" cy="18" rx="6" ry="6" fill="#c89a80" opacity="1"/><ellipse cx="35" cy="30" rx="6" ry="10" fill="#2a6a50" opacity="1"/><ellipse cx="50" cy="40" rx="12" ry="20" fill="#80c488" opacity="1"/><ellipse cx="50" cy="22" rx="6" ry="7" fill="#b87a66" opacity="1"/><ellipse cx="62" cy="20" rx="9" ry="10" fill="#e8e8e8" opacity="1"/><ellipse cx="64" cy="38" rx="6" ry="8" fill="#2a2a2a" opacity="1"/><ellipse cx="80" cy="38" rx="14" ry="16" fill="#eeeeee" opacity="1"/><ellipse cx="80" cy="22" rx="5" ry="6" fill="#c8a08a" opacity="1"/><rect x="88" y="10" width="12" height="60" fill="#5a4a3a" opacity="1"/><path d="M0 55 L100 48 L100 90 L0 92Z" fill="#c4925a" opacity="1"/><rect x="30" y="45" width="12" height="55" fill="#b07e48" opacity="1"/><ellipse cx="20" cy="61" rx="12" ry="8" fill="#f0ece0" opacity="1"/><ellipse cx="20" cy="61" rx="6" ry="4" fill="#e08a30" opacity="1"/><ellipse cx="54" cy="55" rx="6" ry="5" fill="#f0ece0" opacity="1"/><ellipse cx="54" cy="55" rx="4" ry="3" fill="#e8a020" opacity="1"/><ellipse cx="60" cy="80" rx="12" ry="9" fill="#eeeae0" opacity="1"/><ellipse cx="60" cy="80" rx="7" ry="5" fill="#6a6040" opacity="1"/><ellipse cx="20" cy="85" rx="10" ry="8" fill="#eae6dc" opacity="1"/><ellipse cx="20" cy="85" rx="6" ry="5" fill="#6a5a38" opacity="1"/><ellipse cx="86" cy="67" rx="10" ry="7" fill="#ece6de" opacity="1"/><ellipse cx="86" cy="67" rx="6" ry="3" fill="#c86050" opacity="1"/><ellipse cx="70" cy="58" rx="3" ry="8" fill="#e8eef4" opacity="1"/><ellipse cx="68" cy="66" rx="3" ry="4" fill="#2a2a30" opacity="1"/><rect x="0" y="92" width="100" height="8" fill="#3a3028" opacity="1"/><ellipse cx="90" cy="95" rx="10" ry="6" fill="#2a2020" opacity="1"/></svg></div></div><div style="left:446px;top:870px;width:120px;height:16px;background:#484848;overflow:hidden;"><svg width="16" height="14" style="left:3px;top:1px"><rect x="1" y="1" width="12" height="12" stroke="#e0e0e0" stroke-width="1.3" fill="none"/><circle cx="4.5" cy="4.5" r="1" fill="#e0e0e0"/><path d="M3 11 L6 7.5 L8 9.5 L9.5 8 L11.5 11 Z" fill="#e0e0e0"/></svg><div class="t" style="left:19px;top:1px;font-size:13px;color:#e0e0e0;transform:scaleX(0.81);transform-origin:0 0;">0:05.445 | IMG_0103</div></div><div style="left:402px;top:898px;width:121px;height:93px;background:#585858;"></div><div style="left:419px;top:901px;width:96px;height:72px;overflow:hidden;"><div style="left:0px;top:0px;width:96px;height:72px;filter:blur(0.6px) brightness(0.9) saturate(0.85);"><svg width="96" height="72" viewBox="0 0 100 100" preserveAspectRatio="none" style="left:0;top:0"><rect x="0" y="0" width="100" height="100" fill="#7a6650" opacity="1"/><rect x="0" y="0" width="100" height="36" fill="#4e3828" opacity="1"/><rect x="0" y="4" width="100" height="3" fill="#6a4c36" opacity="0.8"/><rect x="0" y="12" width="100" height="3" fill="#6a4c36" opacity="0.8"/><rect x="0" y="20" width="100" height="3" fill="#6a4c36" opacity="0.8"/><rect x="0" y="28" width="100" height="3" fill="#6a4c36" opacity="0.8"/><ellipse cx="58" cy="27" rx="4" ry="3" fill="#f4f4f4" opacity="1"/><ellipse cx="42" cy="34" rx="3" ry="2" fill="#e8e8e8" opacity="1"/><rect x="12" y="36" width="28" height="20" fill="#d6d8d0" opacity="1"/><rect x="40" y="34" width="60" height="30" fill="#9c8a70" opacity="1"/><rect x="65" y="36" width="5" height="26" fill="#3a2e28" opacity="1"/><rect x="0" y="10" width="12" height="90" fill="#3e3630" opacity="1"/><ellipse cx="18" cy="68" rx="14" ry="16" fill="#dfe2e6" opacity="1"/><ellipse cx="19" cy="52" rx="5" ry="6" fill="#8a8a88" opacity="1"/><ellipse cx="30" cy="57" rx="7" ry="8" fill="#3a8a50" opacity="1"/><ellipse cx="38" cy="60" rx="6" ry="9" fill="#7ac080" opacity="1"/><ellipse cx="48" cy="60" rx="7" ry="8" fill="#e2e2e2" opacity="1"/><ellipse cx="60" cy="72" rx="10" ry="12" fill="#e6e6e6" opacity="1"/><ellipse cx="74" cy="62" rx="8" ry="10" fill="#4a6048" opacity="1"/><ellipse cx="85" cy="60" rx="8" ry="10" fill="#3a5a50" opacity="1"/><ellipse cx="96" cy="70" rx="8" ry="14" fill="#eaeaea" opacity="1"/><rect x="30" y="70" width="30" height="10" fill="#dcd6c8" opacity="1"/><rect x="6" y="80" width="24" height="3" fill="#c87a38" opacity="1"/><rect x="8" y="83" width="3" height="17" fill="#c87a38" opacity="1"/><rect x="26" y="83" width="3" height="17" fill="#c87a38" opacity="1"/><rect x="16" y="83" width="2" height="17" fill="#c87a38" opacity="1"/><rect x="55" y="75" width="12" height="3" fill="#c07236" opacity="1"/><rect x="57" y="78" width="2" height="18" fill="#c07236" opacity="1"/><rect x="64" y="78" width="2" height="18" fill="#c07236" opacity="1"/><rect x="68" y="68" width="30" height="3" fill="#b86e38" opacity="1"/><rect x="70" y="71" width="3" height="29" fill="#b86e38" opacity="1"/><rect x="86" y="71" width="3" height="29" fill="#b86e38" opacity="1"/><rect x="32" y="88" width="36" height="12" fill="#dad6ce" opacity="1"/><rect x="12" y="92" width="14" height="8" fill="#e0e0e8" opacity="1"/></svg></div></div><div style="left:402px;top:975px;width:121px;height:16px;background:#484848;overflow:hidden;"><svg width="16" height="14" style="left:3px;top:1px"><rect x="1" y="1" width="12" height="12" stroke="#e0e0e0" stroke-width="1.3" fill="none"/><circle cx="4.5" cy="4.5" r="1" fill="#e0e0e0"/><path d="M3 11 L6 7.5 L8 9.5 L9.5 8 L11.5 11 Z" fill="#e0e0e0"/></svg><div class="t" style="left:19px;top:1px;font-size:13px;color:#e0e0e0;transform:scaleX(0.81);transform-origin:0 0;">0:06.000 | IMG_9710</div></div><div style="left:543px;top:898px;width:133px;height:93px;background:#585858;"></div><div style="left:546px;top:901px;width:116px;height:72px;overflow:hidden;"><div style="left:0px;top:0px;width:116px;height:72px;filter:blur(0.6px) brightness(0.88) saturate(0.9);"><svg width="116" height="72" viewBox="0 0 100 100" preserveAspectRatio="none" style="left:0;top:0"><rect x="0" y="0" width="100" height="100" fill="#4a6a3a" opacity="1"/><rect x="0" y="0.0" width="100" height="5.6" fill="#3d6eb2" opacity="1"/><rect x="0" y="5.5" width="100" height="5.6" fill="#4a78b8" opacity="1"/><rect x="0" y="11.0" width="100" height="5.6" fill="#5683be" opacity="1"/><rect x="0" y="16.5" width="100" height="5.6" fill="#638ec4" opacity="1"/><rect x="0" y="22.0" width="100" height="5.6" fill="#7099ca" opacity="1"/><rect x="0" y="27.5" width="100" height="5.6" fill="#7ea4d0" opacity="1"/><rect x="0" y="33.0" width="100" height="5.6" fill="#8caed4" opacity="1"/><rect x="0" y="38.5" width="100" height="5.6" fill="#9ab8d8" opacity="1"/><rect x="0" y="44.0" width="100" height="5.6" fill="#a9c2dc" opacity="1"/><rect x="0" y="49.5" width="100" height="5.6" fill="#b4c8de" opacity="1"/><ellipse cx="80" cy="22" rx="12" ry="8" fill="#eef2f6" opacity="1"/><ellipse cx="30" cy="45" rx="25" ry="6" fill="#dfe7ef" opacity="1"/><ellipse cx="78" cy="45" rx="20" ry="5" fill="#e6ecf2" opacity="1"/><ellipse cx="50" cy="30" rx="10" ry="4" fill="#c8d8e8" opacity="1"/><path d="M0 58 Q20 48 40 55 Q60 45 80 52 Q90 48 100 55 L100 70 L0 70Z" fill="#4e7040" opacity="1"/><rect x="0" y="64" width="100" height="10" fill="#8c9468" opacity="1"/><path d="M0 72 Q10 66 20 72 Q30 68 40 74 Q50 68 60 73 Q75 66 85 72 Q95 68 100 72 L100 100 L0 100Z" fill="#3e5a2c" opacity="1"/><ellipse cx="15" cy="85" rx="10" ry="10" fill="#50703a" opacity="1"/><ellipse cx="45" cy="85" rx="12" ry="10" fill="#5a7a40" opacity="1"/><ellipse cx="75" cy="88" rx="12" ry="10" fill="#4e6e38" opacity="1"/><ellipse cx="92" cy="80" rx="8" ry="8" fill="#34502a" opacity="1"/><ellipse cx="4" cy="72" rx="8" ry="25" fill="#2e4222" opacity="1"/><rect x="0" y="94" width="100" height="6" fill="#9a8a60" opacity="0.8"/></svg></div></div><div style="left:543px;top:975px;width:133px;height:16px;background:#484848;overflow:hidden;"><svg width="16" height="14" style="left:3px;top:1px"><rect x="1" y="1" width="12" height="12" stroke="#e0e0e0" stroke-width="1.3" fill="none"/><circle cx="4.5" cy="4.5" r="1" fill="#e0e0e0"/><path d="M3 11 L6 7.5 L8 9.5 L9.5 8 L11.5 11 Z" fill="#e0e0e0"/></svg><div class="t" style="left:19px;top:1px;font-size:13px;color:#e0e0e0;transform:scaleX(0.7);transform-origin:0 0;">0:06.000 | IMG_9923_Pano</div></div><svg width="1920" height="1084" style="left:0;top:0"><path d="M653 767 C680 757, 695 730, 704 691" stroke="#e0e0e0" stroke-width="1.5" fill="none"/><path d="M653 690.5 H764" stroke="#bbbbbb" stroke-width="1"/><rect x="699" y="689" width="11" height="4" fill="#dcdcdc"/><rect x="763" y="690" width="1.5" height="94" fill="#e8e8e8"/><rect x="862" y="690" width="1.5" height="94" fill="#e8e8e8"/><rect x="962" y="690" width="1.5" height="94" fill="#e8e8e8"/><rect x="1062" y="690" width="1.5" height="94" fill="#e8e8e8"/><path d="M775 692 L767 766" stroke="#e0e0e0" stroke-width="1.5" stroke-dasharray="3 2" fill="none"/><path d="M875 692 L867 766" stroke="#e0e0e0" stroke-width="1.5" stroke-dasharray="3 2" fill="none"/><path d="M975 692 L967 766" stroke="#e0e0e0" stroke-width="1.5" stroke-dasharray="3 2" fill="none"/><path d="M1075 692 L1067 766" stroke="#e0e0e0" stroke-width="1.5" stroke-dasharray="3 2" fill="none"/><path d="M447 870 L479 795 M543 795 L565 870" stroke="#e0e0e0" stroke-width="1.5" fill="none"/><path d="M479 794.5 H543" stroke="#bdbdbd" stroke-width="1"/><rect x="475" y="793" width="9" height="4" fill="#dcdcdc"/><rect x="538" y="793" width="9" height="4" fill="#dcdcdc"/><path d="M403 942 L416 900" stroke="#e0e0e0" stroke-width="1.6" stroke-dasharray="3 2" fill="none"/><rect x="411" y="897" width="10" height="4" fill="#dcdcdc"/><path d="M414 899 H522" stroke="#d8d8d8" stroke-width="1"/><path d="M544 899 H621 L674 974" stroke="#e0e0e0" stroke-width="1.5" fill="none"/></svg><div style="left:832px;top:131px;width:1px;height:900px;background:#e31b1b;"></div><div style="left:1086px;top:498px;width:584px;height:410px;background:#3c3c3c;border-radius:8px;box-shadow:0 4px 18px rgba(0,0,0,0.45);"></div><div style="left:1087px;top:499px;width:582px;height:408px;background:#1e1e1e;border-radius:7px;overflow:hidden;"><div style="left:0px;top:0px;width:582px;height:30px;background:#eef2f7;"></div></div><div style="left:1095px;top:505px;width:16px;height:16px;background:#0a0a0a;border:1px solid #f0cc00;border-radius:3px;"><svg width="16" height="16" style="left:0;top:0"><path d="M4 4 L10.5 10.5 M10.5 4 L4 10.5" stroke="#f0cc00" stroke-width="1.3"/></svg></div><div class="t" style="left:1117px;top:508px;font-size:12px;color:#1a1a1a;">Audiodatei exportieren</div><svg width="14" height="14" style="left:1647px;top:506px"><path d="M1 1 L12 12 M12 1 L1 12" stroke="#222" stroke-width="1.2"/></svg><div class="t" style="left:1103px;top:549px;font-size:14px;color:#e6e6e6;">Timeline</div><div class="t" style="left:1103px;top:584px;font-size:14px;color:#e6e6e6;">Bereich</div><div class="t" style="left:1103px;top:619px;font-size:14px;color:#e6e6e6;">Selektion</div><div class="t" style="left:1103px;top:674px;font-size:14px;color:#e6e6e6;">Presets</div><div class="t" style="left:1103px;top:709px;font-size:14px;color:#e6e6e6;">Dateiformat</div><div class="t" style="left:1103px;top:744px;font-size:14px;color:#e6e6e6;">Qualität</div><div class="t" style="left:1103px;top:799px;font-size:14px;color:#e6e6e6;">Speichern unter...</div><div style="left:1222px;top:544px;width:432px;height:25px;background:#2d2d2d;border:1px solid #4c4c4c;"></div><div class="t" style="left:1228px;top:550px;font-size:14px;color:#e6e6e6;">Film - Kopie</div><svg width="16" height="10" style="left:1626px;top:552px"><path d="M2 2 L8 8 L14 2" stroke="#e8e8e8" stroke-width="2" fill="none"/></svg><div style="left:1222px;top:579px;width:207px;height:25px;background:#2d2d2d;border:1px solid #4c4c4c;"></div><div class="t" style="left:1228px;top:585px;font-size:14px;color:#e6e6e6;">Ab erstem Objekt</div><svg width="16" height="10" style="left:1401px;top:587px"><path d="M2 2 L8 8 L14 2" stroke="#e8e8e8" stroke-width="2" fill="none"/></svg><div style="left:1446px;top:579px;width:207px;height:25px;background:#2d2d2d;border:1px solid #4c4c4c;"></div><div class="t" style="left:1452px;top:585px;font-size:14px;color:#e6e6e6;">Bis Timeline-Ende</div><svg width="16" height="10" style="left:1625px;top:587px"><path d="M2 2 L8 8 L14 2" stroke="#e8e8e8" stroke-width="2" fill="none"/></svg><div style="left:1225px;top:617px;width:18px;height:18px;border:1px solid #8a8a8a;border-radius:3px;background:#1e1e1e;"><svg width="18" height="18" style="left:0;top:0"><path d="M4 8.5 L7 11.5 L12.5 5" stroke="#e8e8e8" stroke-width="1.5" fill="none"/></svg></div><div class="t" style="left:1248px;top:620px;font-size:14px;color:#e6e6e6;transform:scaleX(0.943);transform-origin:0 0;">Auf selektierte Objekte beschränken</div><div style="left:1629px;top:614px;width:25px;height:25px;background:#2a2a2a;border:1px solid #444;"></div><div class="t" style="left:1635px;top:616px;font-size:21px;color:#f0f0f0;font-weight:bold;">?</div><div style="left:1222px;top:669px;width:397px;height:25px;background:#2d2d2d;border:1px solid #4c4c4c;"></div><div class="t" style="left:1228px;top:675px;font-size:14px;color:#e6e6e6;">--- Benutzerdefinierte Export-Presets ---</div><svg width="16" height="10" style="left:1591px;top:677px"><path d="M2 2 L8 8 L14 2" stroke="#e8e8e8" stroke-width="2" fill="none"/></svg><div style="left:1629px;top:669px;width:25px;height:25px;background:#2a2a2a;border:1px solid #444;"><svg width="25" height="25" style="left:0;top:0"><path d="M4 4 H18 L21 7 V21 H4 Z" stroke="#dcdcdc" stroke-width="1.5" fill="none"/><rect x="7" y="4" width="10" height="5" fill="#dcdcdc"/><rect x="13" y="5" width="2" height="3" fill="#2a2a2a"/><rect x="7" y="13" width="11" height="8" stroke="#dcdcdc" stroke-width="1.2" fill="none"/><path d="M10 15 H12 M11 15 V19 M10 19 H12" stroke="#dcdcdc" stroke-width="1"/></svg></div><div style="left:1222px;top:704px;width:432px;height:25px;background:#2d2d2d;border:1px solid #4c4c4c;"></div><div class="t" style="left:1228px;top:710px;font-size:14px;color:#e6e6e6;">WAV - Unkomprimierte Wave-Dateien</div><svg width="16" height="10" style="left:1626px;top:712px"><path d="M2 2 L8 8 L14 2" stroke="#e8e8e8" stroke-width="2" fill="none"/></svg><div style="left:1222px;top:739px;width:207px;height:25px;background:#2d2d2d;border:1px solid #4c4c4c;"></div><div class="t" style="left:1228px;top:745px;font-size:14px;color:#e6e6e6;">44100 Hz (Audio-CD)</div><svg width="16" height="10" style="left:1401px;top:747px"><path d="M2 2 L8 8 L14 2" stroke="#e8e8e8" stroke-width="2" fill="none"/></svg><div style="left:1446px;top:739px;width:207px;height:25px;background:#2d2d2d;border:1px solid #4c4c4c;"></div><div class="t" style="left:1452px;top:745px;font-size:14px;color:#e6e6e6;">16Bit</div><svg width="16" height="10" style="left:1625px;top:747px"><path d="M2 2 L8 8 L14 2" stroke="#e8e8e8" stroke-width="2" fill="none"/></svg><div style="left:1222px;top:794px;width:432px;height:25px;background:#1e1e1e;border:1px solid #4c4c4c;"></div><div class="t" style="left:1227px;top:800px;font-size:13px;color:#e6e6e6;">D:\Wings_X\Mallorca\Audio\Guitarre_1.wav</div><div style="left:1157px;top:867px;width:165px;height:25px;background:#2d2d2d;border:1px solid #505050;border-radius:2px;"></div><div class="t" style="left:1157px;top:873px;font-size:13px;color:#e6e6e6;"><div style="position:relative;width:165px;text-align:center">Start</div></div><div style="left:1433px;top:867px;width:165px;height:25px;background:#2d2d2d;border:1px solid #505050;border-radius:2px;"></div><div class="t" style="left:1433px;top:873px;font-size:13px;color:#e6e6e6;"><div style="position:relative;width:165px;text-align:center">Abbrechen</div></div></body></html>
